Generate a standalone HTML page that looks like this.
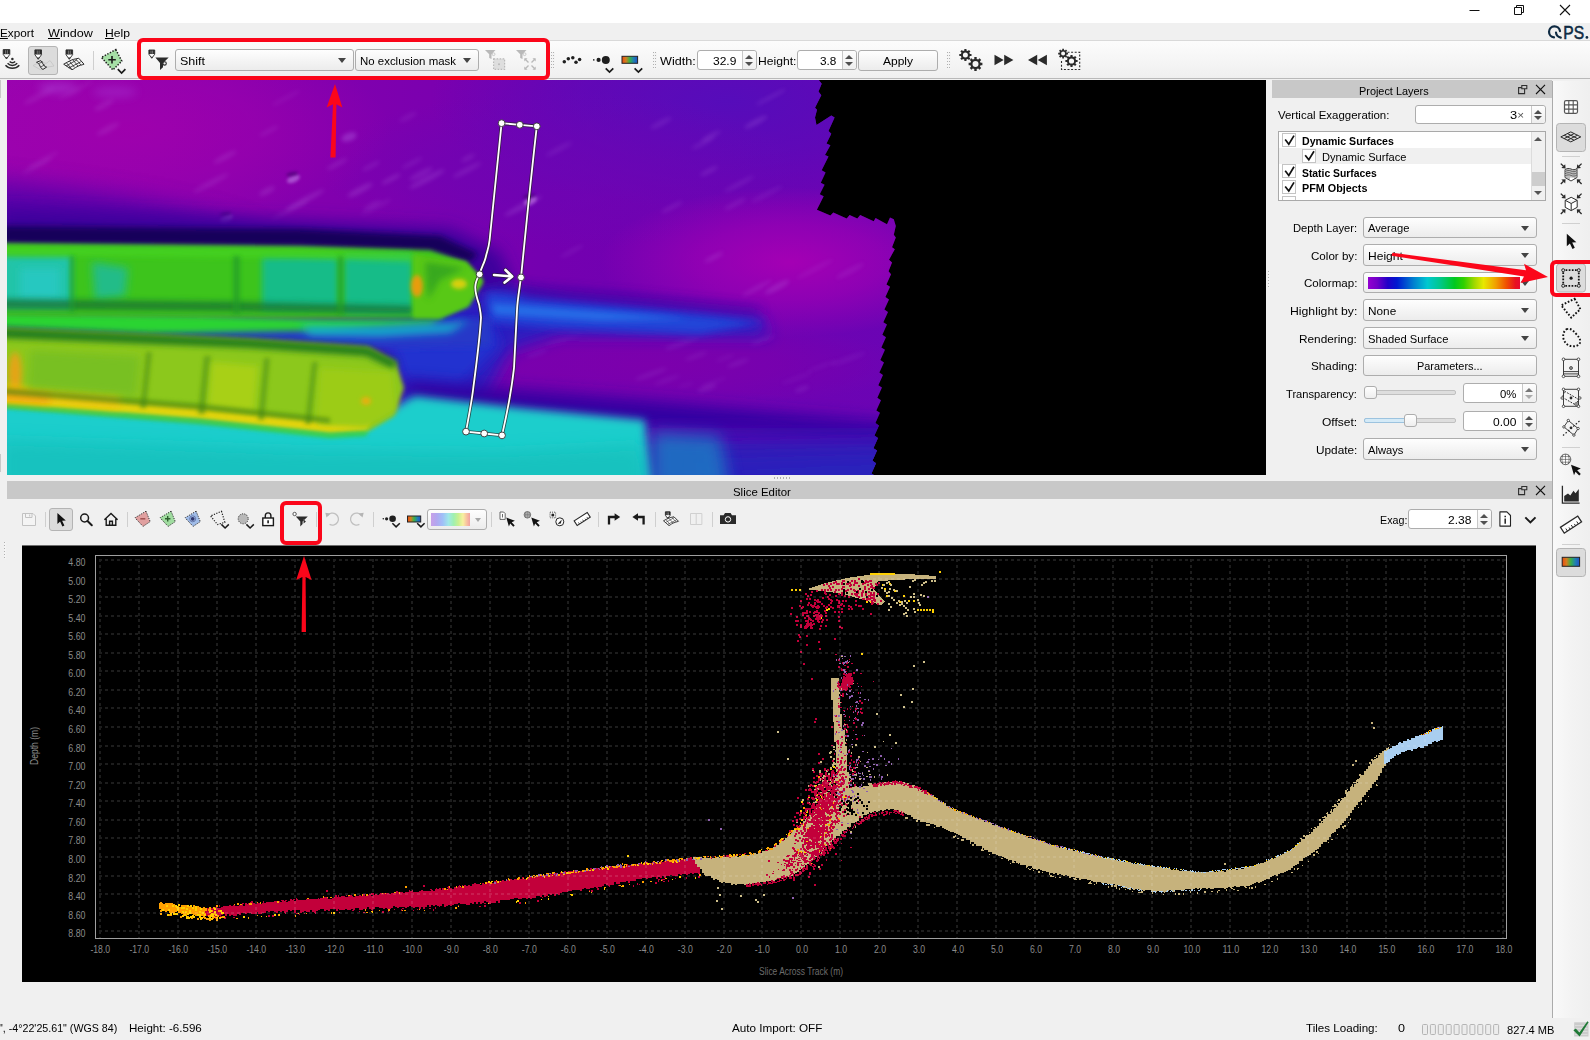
<!DOCTYPE html>
<html><head><meta charset="utf-8"><title>Slice Editor</title>
<style>
*{box-sizing:border-box;margin:0;padding:0}
html,body{width:1590px;height:1040px;overflow:hidden;background:#f0f0f0;font-family:"Liberation Sans",sans-serif;font-size:12px;color:#000;position:relative}
.a{position:absolute}
.t{position:absolute;white-space:nowrap;line-height:14px;height:14px;font-size:11px;color:#000}
.r{text-align:right}
.b{font-weight:bold}
.combo{position:absolute;border:1px solid #adadad;border-radius:3px;background:linear-gradient(#fefefe,#f3f3f3 60%,#ececec);}
.combo .t{left:5px}
.combo:after{content:"";position:absolute;right:7px;top:50%;margin-top:-2px;border-left:4px solid transparent;border-right:4px solid transparent;border-top:5px solid #444}
.spin{position:absolute;border:1px solid #adadad;border-radius:3px;background:#fff}
.spin .dv{position:absolute;top:0;bottom:0;right:13px;width:1px;background:#c8c8c8}
.spin .bg{position:absolute;top:0;bottom:0;right:0;width:13px;background:linear-gradient(#fdfdfd,#eee);border-radius:0 3px 3px 0}
.spin .up{position:absolute;right:3px;top:4px;border-left:4px solid transparent;border-right:4px solid transparent;border-bottom:4px solid #505050}
.spin .dn{position:absolute;right:3px;bottom:3px;border-left:4px solid transparent;border-right:4px solid transparent;border-top:4px solid #505050}
.btn{position:absolute;border:1px solid #adadad;border-radius:3px;background:linear-gradient(#fefefe,#f3f3f3 60%,#ececec);text-align:center}
.sep{position:absolute;width:1px;background:#cfcfcf}
.hsep{position:absolute;height:1px;background:#cfcfcf}
.pressed{position:absolute;border:1px solid #b4b4b4;border-radius:3px;background:#dcdcdc}
.hdl{position:absolute;width:4px;background-image:repeating-linear-gradient(90deg,transparent 0 1px,#f4f4f4 1px 2px),repeating-linear-gradient(180deg,#b0b0b0 0 1px,#f4f4f4 1px 3px)}
.cb{position:absolute;width:13px;height:13px;border:1px solid #c4c4c4;background:#fff}
.dock{position:absolute;background:#c8c8c8;height:17px}
.redbox{position:absolute;border:4px solid #fb061a;border-radius:6px}
svg{position:absolute;overflow:visible}
.combo.dis:after{border-top-color:#a8a8a8;border-left-width:3.5px;border-right-width:3.5px;border-top-width:4px;right:5px}
</style></head><body>
<!-- title bar -->
<div class="a" style="left:0;top:0;width:1590px;height:23px;background:#fff"></div>
<svg style="left:1460px;top:0" width="130" height="23" viewBox="1460 0 130 23">
<path d="M1469.5 10.5h10" stroke="#111" stroke-width="1" fill="none"/>
<path d="M1514.500 7.500h7v7h-7zM1516.500 7.500v-2h7v7h-2" stroke="#111" stroke-width="1" fill="none"/>
<path d="M1560 5l10 10M1570 5l-10 10" stroke="#111" stroke-width="1.1" fill="none"/>
</svg>
<!-- menu bar -->
<div class="a" style="left:0;top:23px;width:1590px;height:17px;background:#f0f0f0"></div>
<!-- QPS logo -->
<svg style="left:1545px;top:23px" width="45" height="17" viewBox="1545 23 45 17">
<g fill="none" stroke="#0e2a42" stroke-width="2.200" stroke-linecap="round">
<path d="M1560 31.200A5.500 5.500 0 1 0 1554 37.300"/>
<path d="M1556 32.500Q1556.400 36.600 1560.800 37.600"/>
</g>
<text x="1563.300" y="38.600" font-family="Liberation Sans, sans-serif" font-size="18.200" fill="#0e2a42" stroke="#0e2a42" stroke-width="0.550" textLength="20.800" lengthAdjust="spacingAndGlyphs">PS</text>
<circle cx="1586.900" cy="37.400" r="1.350" fill="#0e2a42"/>
</svg>
<!-- main toolbar -->
<div class="a" style="left:0;top:40px;width:1590px;height:39px;background:linear-gradient(#fcfcfc,#f6f6f6 50%,#efefef);border-top:1px solid #d9d9d9;border-bottom:1px solid #b9b9b9"></div>
<div class="a" style="left:0;top:79px;width:1590px;height:2px;background:#f0f0f0"></div>
<!-- 3D view -->
<div class="a" style="left:7px;top:80px;width:1259px;height:395px;background:#000"></div>
<svg style="left:7px;top:80px;overflow:hidden" width="1259" height="395" viewBox="7 80 1259 395">
<defs>
<filter id="b1" x="-100%" y="-200%" width="300%" height="500%"><feGaussianBlur stdDeviation="1"/></filter>
<filter id="b1_5" x="-100%" y="-200%" width="300%" height="500%"><feGaussianBlur stdDeviation="1.5"/></filter>
<filter id="b2" x="-100%" y="-200%" width="300%" height="500%"><feGaussianBlur stdDeviation="2"/></filter>
<filter id="b3" x="-100%" y="-200%" width="300%" height="500%"><feGaussianBlur stdDeviation="3"/></filter>
<filter id="b4" x="-100%" y="-200%" width="300%" height="500%"><feGaussianBlur stdDeviation="4"/></filter>
<filter id="b6" x="-100%" y="-200%" width="300%" height="500%"><feGaussianBlur stdDeviation="6"/></filter>
<filter id="b8" x="-100%" y="-200%" width="300%" height="500%"><feGaussianBlur stdDeviation="8"/></filter>
<filter id="b12" x="-100%" y="-200%" width="300%" height="500%"><feGaussianBlur stdDeviation="12"/></filter>
<filter id="b18" x="-100%" y="-200%" width="300%" height="500%"><feGaussianBlur stdDeviation="18"/></filter>
<filter id="b28" x="-100%" y="-200%" width="300%" height="500%"><feGaussianBlur stdDeviation="28"/></filter>
<clipPath id="tc"><path d="M7 80 L818.8 80.0 L821.7 83.8 L818.5 91.5 L821.3 95.3 L815.0 107.8 L817.0 109.7 L815.0 117.4 L816.5 125.1 L831.3 115.5 L834.6 117.4 L828.5 130.9 L831.3 133.8 L826.5 143.4 L830.4 145.3 L825.0 154.9 L828.5 156.5 L821.7 170.3 L825.6 172.6 L820.8 182.8 L824.6 184.7 L819.8 194.3 L823.7 196.3 L816.9 209.7 L830.4 215.5 L833.3 212.6 L846.7 218.4 L849.6 215.1 L857.3 218.4 L860.2 215.1 L873.7 221.3 L875.6 218.0 L887.0 224.2 L890.0 217.4 L893.8 219.3 L895.8 226.0 L893.8 234.7 L895.8 237.6 L892.0 247.2 L894.8 249.2 L889.0 259.7 L892.0 262.6 L888.5 271.3 L891.0 274.2 L886.4 284.4 L890.0 286.8 L885.4 297.0 L889.0 299.4 L884.4 309.6 L888.0 312.0 L883.4 322.2 L887.0 324.6 L882.4 334.8 L886.0 337.2 L881.4 347.4 L885.0 349.8 L880.4 360.0 L884.0 362.4 L879.4 372.6 L883.0 375.0 L878.4 385.2 L882.0 387.6 L877.4 397.8 L881.0 400.2 L876.4 410.4 L880.0 412.8 L875.4 423.0 L879.0 425.4 L874.4 435.6 L878.0 438.0 L873.4 448.2 L877.0 450.6 L872.4 460.8 L876.0 463.2 L871.4 473.4 L875.0 475.8 L872.0 476.0 L7 476Z"/></clipPath>
<linearGradient id="bg" x1="0" y1="0" x2="1" y2="0"><stop offset="0" stop-color="#9604b0"/><stop offset="0.35" stop-color="#8200ae"/><stop offset="0.6" stop-color="#7400b0"/><stop offset="1" stop-color="#6a04b4"/></linearGradient>
</defs>
<g clip-path="url(#tc)">
<rect x="0" y="70" width="910" height="420" fill="url(#bg)"/>
<radialGradient id="g1"><stop offset="0" stop-color="#560cba" stop-opacity="1"/><stop offset="0.5" stop-color="#560cba" stop-opacity="0.6"/><stop offset="1" stop-color="#560cba" stop-opacity="0"/></radialGradient>
<radialGradient id="g2"><stop offset="0" stop-color="#6a06b4" stop-opacity="1"/><stop offset="0.5" stop-color="#6a06b4" stop-opacity="0.6"/><stop offset="1" stop-color="#6a06b4" stop-opacity="0"/></radialGradient>
<radialGradient id="g3"><stop offset="0" stop-color="#a400b4" stop-opacity="1"/><stop offset="0.5" stop-color="#a400b4" stop-opacity="0.6"/><stop offset="1" stop-color="#a400b4" stop-opacity="0"/></radialGradient>
<radialGradient id="g4"><stop offset="0" stop-color="#a200ac" stop-opacity="1"/><stop offset="0.5" stop-color="#a200ac" stop-opacity="0.6"/><stop offset="1" stop-color="#a200ac" stop-opacity="0"/></radialGradient>
<radialGradient id="g5"><stop offset="0" stop-color="#7c00ac" stop-opacity="1"/><stop offset="0.5" stop-color="#7c00ac" stop-opacity="0.6"/><stop offset="1" stop-color="#7c00ac" stop-opacity="0"/></radialGradient>
<ellipse cx="730" cy="100" rx="300" ry="110" fill="url(#g1)"/>
<ellipse cx="560" cy="170" rx="240" ry="80" fill="url(#g2)" opacity="0.7"/>
<ellipse cx="790" cy="262" rx="190" ry="75" fill="url(#g3)"/>
<ellipse cx="130" cy="130" rx="260" ry="100" fill="url(#g4)" opacity="0.8"/>
<ellipse cx="650" cy="365" rx="260" ry="45" fill="url(#g5)"/>
<ellipse cx="225" cy="157" rx="13" ry="2.5" fill="#c080e8" opacity="0.18" transform="rotate(-28 225 157)" filter="url(#b2)"/>
<ellipse cx="76" cy="90" rx="20" ry="1.9" fill="#c080e8" opacity="0.13" transform="rotate(-28 76 90)" filter="url(#b2)"/>
<ellipse cx="739" cy="184" rx="17" ry="1.8" fill="#c080e8" opacity="0.18" transform="rotate(-28 739 184)" filter="url(#b2)"/>
<ellipse cx="767" cy="194" rx="18" ry="2.6" fill="#c080e8" opacity="0.11" transform="rotate(-28 767 194)" filter="url(#b2)"/>
<ellipse cx="672" cy="207" rx="12" ry="1.6" fill="#c080e8" opacity="0.20" transform="rotate(-28 672 207)" filter="url(#b2)"/>
<ellipse cx="427" cy="179" rx="20" ry="2.7" fill="#c080e8" opacity="0.21" transform="rotate(-28 427 179)" filter="url(#b2)"/>
<ellipse cx="360" cy="190" rx="14" ry="3.1" fill="#c080e8" opacity="0.21" transform="rotate(-28 360 190)" filter="url(#b2)"/>
<ellipse cx="104" cy="105" rx="11" ry="3.1" fill="#c080e8" opacity="0.15" transform="rotate(-28 104 105)" filter="url(#b2)"/>
<ellipse cx="559" cy="149" rx="15" ry="2.2" fill="#c080e8" opacity="0.14" transform="rotate(-28 559 149)" filter="url(#b2)"/>
<ellipse cx="523" cy="206" rx="21" ry="2.7" fill="#c080e8" opacity="0.21" transform="rotate(-28 523 206)" filter="url(#b2)"/>
<ellipse cx="757" cy="288" rx="17" ry="1.8" fill="#c080e8" opacity="0.20" transform="rotate(-28 757 288)" filter="url(#b2)"/>
<ellipse cx="850" cy="271" rx="16" ry="2.7" fill="#c080e8" opacity="0.13" transform="rotate(-28 850 271)" filter="url(#b2)"/>
<ellipse cx="735" cy="204" rx="12" ry="1.6" fill="#c080e8" opacity="0.20" transform="rotate(-28 735 204)" filter="url(#b2)"/>
<ellipse cx="709" cy="171" rx="10" ry="2.0" fill="#c080e8" opacity="0.19" transform="rotate(-28 709 171)" filter="url(#b2)"/>
<ellipse cx="771" cy="97" rx="17" ry="1.6" fill="#c080e8" opacity="0.19" transform="rotate(-28 771 97)" filter="url(#b2)"/>
<ellipse cx="305" cy="200" rx="22" ry="2.4" fill="#c080e8" opacity="0.22" transform="rotate(-28 305 200)" filter="url(#b2)"/>
<ellipse cx="286" cy="98" rx="16" ry="1.6" fill="#c080e8" opacity="0.12" transform="rotate(-28 286 98)" filter="url(#b2)"/>
<ellipse cx="371" cy="166" rx="10" ry="1.6" fill="#c080e8" opacity="0.20" transform="rotate(-28 371 166)" filter="url(#b2)"/>
<ellipse cx="290" cy="210" rx="21" ry="2.1" fill="#c080e8" opacity="0.16" transform="rotate(-28 290 210)" filter="url(#b2)"/>
<ellipse cx="467" cy="170" rx="16" ry="2.5" fill="#c080e8" opacity="0.17" transform="rotate(-28 467 170)" filter="url(#b2)"/>
<ellipse cx="391" cy="179" rx="11" ry="2.0" fill="#c080e8" opacity="0.22" transform="rotate(-28 391 179)" filter="url(#b2)"/>
<ellipse cx="468" cy="158" rx="8" ry="2.2" fill="#c080e8" opacity="0.17" transform="rotate(-28 468 158)" filter="url(#b2)"/>
<ellipse cx="37" cy="166" rx="17" ry="1.6" fill="#c080e8" opacity="0.18" transform="rotate(-28 37 166)" filter="url(#b2)"/>
<ellipse cx="421" cy="174" rx="13" ry="2.7" fill="#c080e8" opacity="0.19" transform="rotate(-28 421 174)" filter="url(#b2)"/>
<ellipse cx="39" cy="96" rx="17" ry="3.1" fill="#c080e8" opacity="0.13" transform="rotate(-28 39 96)" filter="url(#b2)"/>
<ellipse cx="412" cy="163" rx="12" ry="2.1" fill="#c080e8" opacity="0.14" transform="rotate(-28 412 163)" filter="url(#b2)"/>
<ellipse cx="337" cy="164" rx="12" ry="2.1" fill="#c080e8" opacity="0.19" transform="rotate(-28 337 164)" filter="url(#b2)"/>
<ellipse cx="43" cy="160" rx="18" ry="2.0" fill="#c080e8" opacity="0.13" transform="rotate(-28 43 160)" filter="url(#b2)"/>
<ellipse cx="711" cy="136" rx="11" ry="2.2" fill="#c080e8" opacity="0.18" transform="rotate(-28 711 136)" filter="url(#b2)"/>
<ellipse cx="108" cy="129" rx="13" ry="2.9" fill="#c080e8" opacity="0.15" transform="rotate(-28 108 129)" filter="url(#b2)"/>
<ellipse cx="756" cy="122" rx="13" ry="2.6" fill="#c080e8" opacity="0.21" transform="rotate(-28 756 122)" filter="url(#b2)"/>
<ellipse cx="408" cy="117" rx="10" ry="2.4" fill="#c080e8" opacity="0.12" transform="rotate(-28 408 117)" filter="url(#b2)"/>
<ellipse cx="714" cy="257" rx="11" ry="2.0" fill="#c080e8" opacity="0.20" transform="rotate(-28 714 257)" filter="url(#b2)"/>
<ellipse cx="572" cy="251" rx="13" ry="1.7" fill="#c080e8" opacity="0.14" transform="rotate(-28 572 251)" filter="url(#b2)"/>
<ellipse cx="703" cy="143" rx="13" ry="2.2" fill="#c080e8" opacity="0.15" transform="rotate(-28 703 143)" filter="url(#b2)"/>
<ellipse cx="372" cy="205" rx="10" ry="1.5" fill="#c080e8" opacity="0.21" transform="rotate(-28 372 205)" filter="url(#b2)"/>
<ellipse cx="777" cy="287" rx="14" ry="3.1" fill="#c080e8" opacity="0.21" transform="rotate(-28 777 287)" filter="url(#b2)"/>
<ellipse cx="211" cy="183" rx="20" ry="2.6" fill="#c080e8" opacity="0.16" transform="rotate(-28 211 183)" filter="url(#b2)"/>
<ellipse cx="269" cy="131" rx="11" ry="1.6" fill="#c080e8" opacity="0.17" transform="rotate(-28 269 131)" filter="url(#b2)"/>
<ellipse cx="267" cy="191" rx="9" ry="3.0" fill="#c080e8" opacity="0.18" transform="rotate(-28 267 191)" filter="url(#b2)"/>
<ellipse cx="815" cy="269" rx="21" ry="2.5" fill="#c080e8" opacity="0.10" transform="rotate(-28 815 269)" filter="url(#b2)"/>
<ellipse cx="661" cy="123" rx="12" ry="2.6" fill="#c080e8" opacity="0.16" transform="rotate(-28 661 123)" filter="url(#b2)"/>
<ellipse cx="376" cy="207" rx="17" ry="2.1" fill="#c080e8" opacity="0.13" transform="rotate(-28 376 207)" filter="url(#b2)"/>
<ellipse cx="822" cy="366" rx="17" ry="2.0" fill="#b070e0" opacity="0.10" transform="rotate(-20 822 366)" filter="url(#b2)"/>
<ellipse cx="707" cy="388" rx="10" ry="2.7" fill="#b070e0" opacity="0.17" transform="rotate(-20 707 388)" filter="url(#b2)"/>
<ellipse cx="802" cy="389" rx="8" ry="2.4" fill="#b070e0" opacity="0.17" transform="rotate(-20 802 389)" filter="url(#b2)"/>
<ellipse cx="537" cy="353" rx="11" ry="2.3" fill="#b070e0" opacity="0.12" transform="rotate(-20 537 353)" filter="url(#b2)"/>
<ellipse cx="686" cy="385" rx="8" ry="1.6" fill="#b070e0" opacity="0.09" transform="rotate(-20 686 385)" filter="url(#b2)"/>
<ellipse cx="564" cy="339" rx="20" ry="2.8" fill="#b070e0" opacity="0.09" transform="rotate(-20 564 339)" filter="url(#b2)"/>
<ellipse cx="696" cy="356" rx="12" ry="2.0" fill="#b070e0" opacity="0.14" transform="rotate(-20 696 356)" filter="url(#b2)"/>
<ellipse cx="725" cy="358" rx="10" ry="2.0" fill="#b070e0" opacity="0.09" transform="rotate(-20 725 358)" filter="url(#b2)"/>
<ellipse cx="714" cy="382" rx="13" ry="1.6" fill="#b070e0" opacity="0.10" transform="rotate(-20 714 382)" filter="url(#b2)"/>
<ellipse cx="651" cy="374" rx="17" ry="2.1" fill="#b070e0" opacity="0.16" transform="rotate(-20 651 374)" filter="url(#b2)"/>
<ellipse cx="738" cy="363" rx="12" ry="2.2" fill="#b070e0" opacity="0.15" transform="rotate(-20 738 363)" filter="url(#b2)"/>
<ellipse cx="667" cy="380" rx="14" ry="1.9" fill="#b070e0" opacity="0.13" transform="rotate(-20 667 380)" filter="url(#b2)"/>
<ellipse cx="763" cy="340" rx="13" ry="2.1" fill="#b070e0" opacity="0.17" transform="rotate(-20 763 340)" filter="url(#b2)"/>
<ellipse cx="848" cy="359" rx="19" ry="2.7" fill="#b070e0" opacity="0.11" transform="rotate(-20 848 359)" filter="url(#b2)"/>
<ellipse cx="682" cy="343" rx="18" ry="2.5" fill="#b070e0" opacity="0.17" transform="rotate(-20 682 343)" filter="url(#b2)"/>
<ellipse cx="797" cy="378" rx="17" ry="2.3" fill="#b070e0" opacity="0.09" transform="rotate(-20 797 378)" filter="url(#b2)"/>
<ellipse cx="349" cy="137" rx="8" ry="4" fill="#a850d8" opacity="0.5" transform="rotate(-20 349 137)" filter="url(#b2)"/>
<ellipse cx="293" cy="179" rx="7" ry="3.500" fill="#b468dc" opacity="0.75" transform="rotate(-25 293 178)" filter="url(#b1_5)"/>
<ellipse cx="293" cy="174" rx="6" ry="2" fill="#3a0068" opacity="0.6" transform="rotate(-10 293 178)" filter="url(#b1_5)"/>
<ellipse cx="226" cy="219" rx="7" ry="3.500" fill="#b468dc" opacity="0.75" transform="rotate(-25 226 218)" filter="url(#b1_5)"/>
<ellipse cx="226" cy="214" rx="6" ry="2" fill="#3a0068" opacity="0.6" transform="rotate(-10 226 218)" filter="url(#b1_5)"/>
<ellipse cx="530" cy="201" rx="7" ry="3.500" fill="#b468dc" opacity="0.75" transform="rotate(-25 530 200)" filter="url(#b1_5)"/>
<ellipse cx="530" cy="196" rx="6" ry="2" fill="#3a0068" opacity="0.6" transform="rotate(-10 530 200)" filter="url(#b1_5)"/>
<ellipse cx="60" cy="218" rx="210" ry="30" fill="#4c00a8" opacity="0.8" transform="rotate(7 60 218)" filter="url(#b12)"/>
<ellipse cx="58" cy="88" rx="20" ry="5" fill="#b050e0" opacity="0.45" filter="url(#b4)"/>
<ellipse cx="115" cy="92" rx="22" ry="6" fill="#a840d8" opacity="0.35" filter="url(#b4)"/>
<path d="M0 208 L200 216 L300 220 L450 228 L500 252 L520 300 L430 300 L0 300Z" fill="#3c009c" filter="url(#b8)"/>
<path d="M0 226 L300 229 L440 236 L478 254 L470 262 L430 252 L300 246 L0 244Z" fill="#12005a" filter="url(#b3)"/>
<path d="M380 318 L500 288 L560 298 L760 316 L770 336 L560 334 L510 350 L480 405 L400 415 L394 372 L372 350 L350 340 L350 326Z" fill="#2a1cc0" filter="url(#b8)"/>
<path d="M385 332 L490 322 L500 345 L460 385 L405 382 L398 360Z" fill="#2430d0" filter="url(#b6)"/>
<path d="M486 292 L560 300 L700 314 L765 322 L700 334 L560 328 L488 322Z" fill="#2044d8" filter="url(#b4)"/>
<path d="M520 286 L640 296 L760 308 L760 314 L640 304 L520 296Z" fill="#3a04a0" filter="url(#b6)" opacity="0.8"/>
<path d="M492 304 L600 312 L690 319 L600 320 L495 314Z" fill="#2870e8" filter="url(#b3)"/>
<path d="M400 380 L640 400 L900 425 L900 440 L640 428 L420 412Z" fill="#3006a0" filter="url(#b8)"/>
<path d="M640 436 L900 436 L900 490 L640 490Z" fill="#3014b4" filter="url(#b12)"/>
<path d="M700 455 L900 450 L900 490 L700 490Z" fill="#2c20bc" filter="url(#b12)"/>
<path d="M0 400 L200 417 L340 428 L390 410 L415 396 L520 408 L645 420 L652 490 L0 490Z" fill="#1ccecc" filter="url(#b4)"/>
<path d="M0 440 L300 450 L500 452 L640 445 L650 490 L0 490Z" fill="#14c0bc" filter="url(#b8)" opacity="0.8"/>
<path d="M652 432 L720 436 L730 490 L652 490Z" fill="#1c78c4" filter="url(#b8)" opacity="0.85"/>
<path d="M0 314 L300 318 L440 320 L490 318 L490 346 L380 348 L250 342 L0 332Z" fill="#2838c8" filter="url(#b3)"/>
<path d="M0 312 L200 315 L320 319 L430 320 L445 317 L430 325 L330 330 L150 334 L0 328Z" fill="#2cd430" filter="url(#b3)"/>
<path d="M300 326 L380 327 L450 324 L470 320 L450 332 L380 336 L310 335Z" fill="#18bccc" filter="url(#b4)"/>
<path d="M0 243 L300 246 L430 250 L466 262 L483 281 L468 306 L440 318 L300 318 L0 316Z" fill="#3cc41c" filter="url(#b2)"/>
<rect x="0" y="256" width="72" height="52" fill="#20c4a8" filter="url(#b3)"/>
<rect x="20" y="268" width="40" height="32" fill="#28c8c0" filter="url(#b4)"/>
<path d="M92 262 L128 268 L125 296 L95 300Z" fill="#20bc88" filter="url(#b4)"/>
<rect x="262" y="257" width="76" height="52" fill="#18bc88" filter="url(#b3)"/>
<rect x="344" y="255" width="68" height="58" fill="#18bc88" filter="url(#b3)"/>
<path d="M0 299 L72 300 L235 302 L413 306 L413 314 L235 311 L0 309Z" fill="#147030" filter="url(#b3)" opacity="0.8"/>
<path d="M0 247 L300 250 L413 254 L413 261 L300 257 L0 254Z" fill="#48d824" filter="url(#b3)" opacity="0.8"/>
<path d="M70 256 L74 256 L74 312 L70 312Z M233 256 L240 256 L240 314 L233 314Z M338 256 L343 256 L343 314 L338 314Z" fill="#249c2c" filter="url(#b2)" opacity="0.7"/>
<path d="M413 254 L466 262 L483 281 L468 306 L440 318 L413 318Z" fill="#58c818" filter="url(#b2)"/>
<ellipse cx="417" cy="286" rx="6" ry="11" fill="#e89c10" filter="url(#b2)"/>
<ellipse cx="459" cy="284" rx="8" ry="5" fill="#d8d010" filter="url(#b2)"/>
<path d="M425 262 L465 268 L440 280 L428 300 Z" fill="#2c9c20" filter="url(#b3)" opacity="0.7"/>
<path d="M0 328 L250 339 L368 347 L396 362 L404 388 L394 416 L368 431 L330 433 L200 419 L0 404Z" fill="#8cc81c" filter="url(#b2)"/>
<path d="M0 328 L250 339 L368 347 L398 362 L393 369 L366 356 L250 348 L0 338Z" fill="#207a1c" filter="url(#b3)"/>
<path d="M0 392 L200 408 L330 423 L370 420 L366 431 L330 434 L200 420 L0 405Z" fill="#e4d408" filter="url(#b2)"/>
<path d="M0 403 L200 419 L330 433 L368 431 L366 436 L330 438 L200 424 L0 408Z" fill="#30d048" filter="url(#b2)"/>
<ellipse cx="15" cy="374" rx="7" ry="22" fill="#e4a418" filter="url(#b3)"/>
<path d="M0 386 L120 396 L120 408 L0 400Z" fill="#f0c410" filter="url(#b4)"/>
<path d="M0 390 L50 394 L50 403 L0 400Z" fill="#f0a010" filter="url(#b4)"/>
<path d="M146 352 L152 352 L146 408 L140 408Z M204 356 L211 356 L205 414 L198 414Z M264 358 L270 358 L264 420 L258 420Z M312 362 L318 362 L311 424 L305 424Z" fill="#5c9c14" filter="url(#b2)" opacity="0.75"/>
<path d="M30 350 L140 356 L136 396 L28 388Z" fill="#78c020" filter="url(#b4)"/>
<path d="M212 362 L258 366 L254 412 L208 408Z" fill="#a8d018" filter="url(#b3)"/>
<path d="M320 368 L392 372 L396 410 L366 428 L316 424Z" fill="#9ccc18" filter="url(#b3)"/>
<ellipse cx="366" cy="401" rx="5" ry="4" fill="#e8b010" filter="url(#b2)"/>
<path d="M0 388 L200 404 L330 418 L330 423 L200 410 L0 394Z" fill="#3c7c10" filter="url(#b2)" opacity="0.6"/>
</g>
<!--POLY-->
</svg>
<!-- main toolbar widgets -->
<div class="pressed" style="left:28px;top:46px;width:30px;height:29px"></div>
<div class="sep" style="left:93px;top:51px;height:19px"></div>
<div class="combo" style="left:175px;top:49px;width:179px;height:22px"></div>
<div class="combo" style="left:355px;top:49px;width:124px;height:22px"></div>
<div class="hdl" style="left:551px;top:52px;height:17px"></div>
<div class="hdl" style="left:653px;top:52px;height:17px"></div>
<div class="spin" style="left:697px;top:50px;width:60px;height:20px"><div class="bg"></div><div class="dv"></div><div class="up"></div><div class="dn"></div></div>
<div class="spin" style="left:797px;top:50px;width:60px;height:20px"><div class="bg"></div><div class="dv"></div><div class="up"></div><div class="dn"></div></div>
<div class="btn" style="left:858px;top:50px;width:80px;height:21px"></div>
<div class="hdl" style="left:947px;top:52px;height:17px"></div>
<!-- Project Layers panel -->
<div class="dock" style="left:1272px;top:80px;width:280px;height:18px"></div>
<svg style="left:1515px;top:81px" width="35" height="17" viewBox="1515 81 35 17">
<path d="M1518.600 87.600h6v6h-6z" stroke="#2e2e2e" fill="none" stroke-width="1.100"/><path d="M1521.800 85.500h5v3.200h-5z" stroke="#2e2e2e" fill="#c8c8c8" stroke-width="1.100"/>
<path d="M1536 84.800l9 9.200M1545 84.800l-9 9.200" stroke="#111" fill="none" stroke-width="1.100"/>
</svg>
<div class="spin" style="left:1415px;top:105px;width:131px;height:19px"><div class="bg"></div><div class="dv"></div><div class="up"></div><div class="dn"></div></div>
<div class="a" style="left:1278px;top:131px;width:268px;height:70px;border:1px solid #a9a9a9;background:#fff;overflow:hidden">
  <div class="a" style="left:0;top:16px;width:252px;height:16px;background:#f0f0f0"></div>
  <div class="a" style="left:252px;top:0;width:14px;height:68px;background:#f0f0f0;border-left:1px solid #dcdcdc"></div>
  <div class="a" style="left:253px;top:40px;width:13px;height:14px;background:#cdcdcd"></div>
  <div class="a" style="left:255px;top:5px;border-left:4px solid transparent;border-right:4px solid transparent;border-bottom:4px solid #555"></div>
  <div class="a" style="left:255px;top:59px;border-left:4px solid transparent;border-right:4px solid transparent;border-top:4px solid #555"></div>
  <div class="cb" style="left:3px;top:1px;width:14px;height:14px"></div>
  <div class="cb" style="left:23px;top:17px;width:14px;height:14px"></div>
  <div class="cb" style="left:3px;top:32px;width:14px;height:14px"></div>
  <div class="cb" style="left:3px;top:48px;width:14px;height:14px"></div>
  <div class="cb" style="left:3px;top:64px;width:14px;height:14px"></div>
  <svg style="left:0;top:0" width="60" height="70" viewBox="0 0 60 70" fill="none" stroke="#111" stroke-width="1.700">
   <path d="M6.200 7.600L9.800 12.200L15 3.600"/><path d="M26.200 23.200L29.800 27.800L35 19.200"/><path d="M6.200 38.800L9.800 43.400L15 34.800"/><path d="M6.200 54.400L9.800 59L15 50.400"/>
  </svg>
</div>
<div class="combo" style="left:1363px;top:217px;width:174px;height:21px"></div>
<div class="combo" style="left:1363px;top:244px;width:174px;height:22px"></div>
<div class="combo" style="left:1363px;top:272px;width:174px;height:21px"><div class="a" style="left:4px;top:4px;width:152px;height:12px;background:linear-gradient(90deg,#9400d0 0%,#7000c8 6%,#2000c8 13%,#0018d0 19%,#0080d0 30%,#00c8d0 39%,#00c890 47%,#00c820 57%,#30d000 63%,#a0d800 70%,#e8e800 76%,#f0a000 84%,#f05000 91%,#e81020 97%,#e80830 100%)"></div></div>
<div class="combo" style="left:1363px;top:299px;width:174px;height:22px"></div>
<div class="combo" style="left:1363px;top:327px;width:174px;height:22px"></div>
<div class="btn" style="left:1363px;top:355px;width:174px;height:21px"></div>
<!-- sliders -->
<div class="a" style="left:1364px;top:390px;width:92px;height:5px;border:1px solid #c0c0c0;border-radius:2px;background:#dedede"></div>
<div class="a" style="left:1364px;top:386px;width:13px;height:13px;border:1px solid #adadad;border-radius:3px;background:linear-gradient(#fff,#eee)"></div>
<div class="spin" style="left:1463px;top:383px;width:74px;height:20px"><div class="bg"></div><div class="dv"></div><div class="up" style="border-bottom-color:#777"></div><div class="dn" style="border-top-color:#aaa"></div></div>
<div class="a" style="left:1364px;top:418px;width:92px;height:5px;border:1px solid #c0c0c0;border-radius:2px;background:#dedede"></div>
<div class="a" style="left:1364px;top:418px;width:46px;height:5px;border:1px solid #9cc3df;border-radius:2px;background:#d4eaf7"></div>
<div class="a" style="left:1404px;top:414px;width:13px;height:13px;border:1px solid #adadad;border-radius:3px;background:linear-gradient(#fff,#eee)"></div>
<div class="spin" style="left:1463px;top:411px;width:74px;height:20px"><div class="bg"></div><div class="dv"></div><div class="up"></div><div class="dn"></div></div>
<div class="combo" style="left:1363px;top:438px;width:174px;height:22px"></div>
<!-- splitter handles -->
<div class="hdl" style="left:1268px;top:271px;height:17px;width:2px"></div>
<div class="a" style="left:773px;top:477px;width:17px;height:2px;background-image:radial-gradient(circle,#b0b0b0 0.6px,transparent 0.9px);background-size:3px 2px"></div>
<!-- right tool strip -->
<div class="a" style="left:1552px;top:81px;width:1px;height:937px;background:#ababab"></div>
<div class="a" style="left:1553px;top:81px;width:37px;height:937px;background:linear-gradient(90deg,#f9f9f9,#f3f3f3 50%,#efefef)"></div>
<!-- Slice editor dock -->
<div class="dock" style="left:7px;top:481px;width:1545px;height:18px"></div>
<svg style="left:1515px;top:481px" width="35" height="18" viewBox="1515 481 35 18">
<path d="M1518.600 488.600h6v6h-6z" stroke="#2e2e2e" fill="none" stroke-width="1.100"/><path d="M1521.800 486.500h5v3.200h-5z" stroke="#2e2e2e" fill="#c8c8c8" stroke-width="1.100"/>
<path d="M1536 485.800l9 9.200M1545 485.800l-9 9.200" stroke="#111" fill="none" stroke-width="1.100"/>
</svg>
<div class="pressed" style="left:49px;top:508px;width:24px;height:23px"></div>
<div class="sep" style="left:45px;top:512px;height:15px"></div>
<div class="sep" style="left:127px;top:512px;height:15px"></div>
<div class="sep" style="left:316px;top:512px;height:15px"></div>
<div class="sep" style="left:373px;top:512px;height:15px"></div>
<div class="sep" style="left:491px;top:512px;height:15px"></div>
<div class="sep" style="left:598px;top:512px;height:15px"></div>
<div class="sep" style="left:655px;top:512px;height:15px"></div>
<div class="sep" style="left:712px;top:512px;height:15px"></div>
<div class="combo dis" style="left:427px;top:509px;width:60px;height:21px"><div class="a" style="left:3px;top:3px;width:39px;height:13px;background:linear-gradient(90deg,#c8a0e8 0%,#b0a8f0 15%,#a0c0f8 30%,#a0e8e8 45%,#a0f0b0 58%,#c8f090 70%,#f8f0a0 82%,#f8c0a0 92%,#f0a0a0 100%)"></div></div>
<div class="spin" style="left:1408px;top:509px;width:84px;height:20px"><div class="bg"></div><div class="dv"></div><div class="up"></div><div class="dn"></div></div>
<div class="hdl" style="left:4px;top:542px;height:17px;width:2px"></div>
<div class="a" style="left:0;top:80px;width:1px;height:18px;background:#c8c8c8"></div>
<div class="a" style="left:0;top:454px;width:1px;height:18px;background:#c8c8c8"></div>
<!-- status bar -->
<svg style="left:1420px;top:1022px" width="84" height="14" viewBox="1420 1022 84 14" fill="#ececec" stroke="#b4b4b4" stroke-width="1">
<rect x="1422.500" y="1024.500" width="5" height="10" rx="1"/><rect x="1430.400" y="1024.500" width="5" height="10" rx="1"/><rect x="1438.300" y="1024.500" width="5" height="10" rx="1"/><rect x="1446.200" y="1024.500" width="5" height="10" rx="1"/><rect x="1454.100" y="1024.500" width="5" height="10" rx="1"/><rect x="1462" y="1024.500" width="5" height="10" rx="1"/><rect x="1469.900" y="1024.500" width="5" height="10" rx="1"/><rect x="1477.800" y="1024.500" width="5" height="10" rx="1"/><rect x="1485.700" y="1024.500" width="5" height="10" rx="1"/><rect x="1493.600" y="1024.500" width="5" height="10" rx="1"/>
</svg>
<svg style="left:1572px;top:1020px" width="18" height="18" viewBox="1572 1020 18 18">
<rect x="1574.200" y="1022.300" width="14.300" height="14.200" fill="#cbcbcb"/>
<path d="M1575 1025.500h12.500M1575 1028.500h12.500M1575 1031.500h12.500M1575 1034.500h12.500" stroke="#dcdcdc" stroke-width="1"/>
<path d="M1573.400 1030.200L1575.800 1028.600L1579.400 1032.600L1587.400 1021.200L1588.600 1022.200L1579.600 1036.600Z" fill="#1f7a36"/>
</svg>
<div class="a" style="left:22px;top:545px;width:1514px;height:437px;background:#000;border-top:1px solid #6e6e6e"></div>
<svg style="left:0;top:0" width="1590" height="1040" viewBox="0 0 1590 1040">
<g shape-rendering="crispEdges">
<path d="M159 903H161V905H163V904H165V903H167V903H169V903H171V905H173V904H175V905H177V906H179V907H181V907H183V905H185V905H187V905H189V907H191V907H193V905H195V907H197V906H199V907H201V908H203V907H205V908H207V909H209V910H211V908H213V907H215V907H216V909V917H214V918H213V917H211V918H209V915H207V916H205V918H203V916H201V917H199V915H197V916H195V915H193V914H191V913H189V914H187V915H185V915H183V912H181V913H179V911H177V912H175V914H173V911H171V913H169V910H167V911H165V911H163V910H161V909H159V909H159Z" fill="#ffa000"/>
<path d="M205 909H207V908H209V908H211V908H213V907H215V907H217V908H219V908H221V907H223V906H225V906H227V906H229V905H231V906H233V905H235V906H237V906H239V905H241V905H243V906H245V904H247V904H249V904H251V903H253V903H255V904H257V903H259V903H260V904H262V904H264V903H266V902H268V902H270V902H272V902H274V901H276V901H278V901H280V902H282V901H284V901H286V902H288V901H290V900H292V900H294V901H296V899H298V900H300V900H302V900H304V900H306V899H308V899H310V899H312V899H314V900H316V899H318V899H320V898H322V898H324V897H326V897H328V899H330V899H332V898H334V897H336V897H338V897H340V897H341V897H343V896H345V897H347V897H349V896H351V896H353V897H355V896H357V896H359V895H361V896H363V894H365V896H367V895H369V894H371V896H373V895H375V894H377V895H379V894H381V893H383V893H385V893H387V893H389V894H391V893H393V893H395V893H397V893H399V892H401V892H403V893H405V892H407V892H409V891H411V891H413V892H415V892H417V892H419V891H421V891H423V891H425V891H427V891H429V891H431V890H433V891H435V889H437V889H439V888H441V890H442V888H444V889H446V889H448V888H450V888H452V889H454V887H456V887H458V886H460V887H462V887H464V885H466V886H468V885H470V886H472V884H474V884H476V884H478V884H480V885H482V883H484V884H486V882H488V883H490V882H492V883H494V881H496V881H498V881H500V881H502V880H504V881H506V880H508V879H510V879H512V880H514V879H516V879H518V878H520V879H522V877H524V879H526V878H528V877H530V877H532V877H534V876H536V877H538V876H540V875H542V875H544V875H546V874H548V875H550V874H552V874H554V873H556V873H558V874H560V872H562V872H564V871H566V872H568V871H570V871H572V871H574V870H576V870H578V871H580V871H582V871H584V870H586V871H588V870H590V868H592V870H594V869H596V868H598V868H600V869H602V868H604V868H606V867H608V866H610V866H612V867H614V867H616V866H618V867H620V866H622V866H624V866H626V864H628V865H630V865H632V864H634V864H636V864H638V864H640V863H642V864H644V863H646V862H648V863H650V863H652V862H654V862H656V863H658V863H660V861H662V862H664V861H666V860H668V860H670V860H672V861H674V861H676V861H678V860H680V860H682V859H684V859H686V858H688V858H690V857H692V859H694V859H696V859H698V857H700V858V874H698V873H696V873H694V874H692V873H690V874H688V875H686V874H684V874H682V875H680V874H678V876H676V876H674V876H672V875H670V876H668V876H666V878H664V876H662V878H660V877H658V879H656V877H654V877H652V878H650V878H648V879H646V878H644V878H642V879H640V879H638V879H636V881H634V881H632V881H630V883H628V881H626V882H624V882H622V882H620V884H618V884H616V882H614V885H612V885H610V886H608V885H606V884H604V886H602V887H600V887H598V888H596V887H594V888H592V888H590V889H588V889H586V888H584V889H582V891H580V890H578V890H576V890H574V890H572V891H570V891H568V892H566V892H564V892H562V893H560V895H558V894H556V896H554V894H552V895H550V894H548V896H546V897H544V895H542V897H540V896H538V896H536V898H534V898H532V899H530V898H528V899H526V898H524V898H522V899H520V899H518V898H516V898H514V899H512V899H510V900H508V900H506V900H504V900H502V900H500V903H498V901H496V903H494V903H492V903H490V903H488V902H486V901H484V903H482V904H480V902H478V904H476V902H474V904H472V903H470V905H468V905H466V904H464V904H462V904H460V903H458V904H456V904H454V905H452V906H450V905H448V906H446V907H444V904H442V906H440V907H439V906H437V905H435V906H433V905H431V907H429V905H427V907H425V908H423V907H421V907H419V907H417V907H415V908H413V907H411V906H409V907H407V908H405V907H403V907H401V907H399V908H397V907H395V906H393V908H391V909H389V909H387V908H385V909H383V908H381V908H379V907H377V907H375V909H373V910H371V909H369V907H367V909H365V909H363V910H361V910H359V908H357V908H355V910H353V909H351V910H349V910H347V909H345V910H343V910H341V910H339V909H338V911H336V909H334V909H332V909H330V911H328V910H326V911H324V909H322V909H320V910H318V911H316V911H314V912H312V910H310V912H308V912H306V911H304V912H302V913H300V910H298V910H296V913H294V910H292V911H290V910H288V912H286V913H284V911H282V912H280V911H278V913H276V912H274V911H272V911H270V912H268V911H266V913H264V913H262V914H260V914H258V912H257V914H255V914H253V914H251V913H249V913H247V914H245V913H243V913H241V915H239V914H237V916H235V916H233V915H231V916H229V914H227V916H225V914H223V915H221V916H219V915H217V917H215V916H213V916H211V917H209V916H207V916H205V915H205Z" fill="#c2003a"/>
<path d="M693 857H695V857H697V857H699V857H700V857H702V858H704V857H706V858H707V858H709V858H711V858H713V858H715V858H717V857H719V858H721V857H723V857H725V857H727V857H729V857H731V856H733V856H735V856H737V857H739V856H741V855H743V855H745V855H746V855H748V855H750V854H752V854H754V853H756V854H758V853H760V853H762V851H764V851H766V851H768V850H770V848H771V849H773V847H775V845H777V845H779V843H781V841H783V840H785V838H787V836H789V834H791V832H793V830H795V829H797V826H799V825H801V823H803V821H805V819H807V817H809V814H811V813H813V811H815V808H817V807H819V804H821V803H822V802H824V801H826V799H828V798H830V797H832V796H834V794H836V794H838V793H840V791H842V791H844V790H846V789H847V789H849V788H851V787H853V787H855V786H857V787H859V787H861V787H863V786H865V786H867V786H869V785H871V785H872V785H874V785H876V785H878V784H880V784H882V782H884V782H886V782H888V782H890V782H892V782H894V781H896V782H897V782H899V781H901V783H903V782H905V783H907V783H909V785H911V785H913V785H915V787H917V787H919V788H920V790H922V790H924V791H926V792H928V793H930V795H932V795H934V797H936V798H938V800H940V802H942V802H944V803H946V806H948V806H950V808H952V809H954V810H956V811H958V811H960V812H962V812H964V813H966V814H968V815H970V816H972V817H974V818H976V818H978V819H980V819H982V820H984V822H986V822H988V823H990V823H992V825H994V825H996V825H998V826H1000V827H1002V828H1004V828H1006V829H1008V830H1010V831H1012V831H1014V832H1016V833H1018V833H1020V834H1022V835H1024V835H1026V836H1028V838H1030V838H1032V839H1034V839H1036V840H1038V840H1040V841H1042V841H1044V843H1046V843H1048V844H1050V844H1051V845H1053V845H1055V846H1057V846H1059V848H1061V848H1063V849H1065V849H1067V850H1069V850H1071V850H1073V851H1075V851H1077V852H1079V852H1081V853H1083V852H1085V854H1087V854H1089V855H1091V855H1093V855H1095V856H1097V856H1099V856H1101V857H1103V858H1105V858H1107V858H1109V858H1111V858H1113V859H1115V860H1117V861H1119V861H1121V861H1123V862H1125V862H1127V862H1129V862H1131V863H1133V864H1135V864H1137V863H1139V864H1141V865H1143V865H1145V865H1147V865H1149V866H1151V865H1153V866H1155V867H1157V866H1159V867H1161V868H1163V868H1165V868H1167V868H1169V869H1171V870H1173V870H1175V870H1177V870H1179V871H1181V871H1183V871H1185V871H1187V871H1189V871H1191V872H1193V872H1195V872H1197V872H1199V872H1201V872H1202V872H1204V872H1206V872H1208V872H1210V872H1212V871H1214V872H1216V872H1218V871H1220V871H1222V871H1224V872H1226V870H1228V870H1230V870H1232V869H1234V869H1236V870H1238V868H1240V869H1242V869H1244V867H1246V867H1248V867H1250V866H1252V866H1254V866H1256V864H1258V864H1260V863H1262V863H1264V862H1266V861H1268V860H1270V859H1272V859H1274V858H1276V856H1278V856H1280V855H1282V854H1284V852H1286V852H1288V851H1290V850H1291V850H1293V848H1295V846H1297V844H1299V842H1301V840H1303V839H1305V837H1307V835H1309V834H1311V832H1313V829H1315V828H1317V826H1319V823H1321V823H1323V819H1325V817H1327V816H1329V814H1331V812H1333V809H1334V808H1336V806H1338V803H1340V801H1342V799H1344V797H1346V795H1348V791H1350V789H1352V787H1354V784H1356V783H1358V780H1360V776H1362V775H1364V771H1366V769H1368V766H1370V764H1372V761H1374V759H1376V758H1378V755H1380V753H1382V751H1384V750H1386V749H1388V749V763H1386V766H1384V768H1382V773H1380V776H1378V780H1376V782H1374V784H1372V788H1370V790H1368V792H1366V795H1364V797H1362V801H1360V802H1358V805H1356V807H1354V810H1352V813H1350V816H1348V818H1346V821H1344V823H1342V825H1340V828H1338V829H1336V832H1334V833H1332V834H1331V837H1329V840H1327V842H1325V842H1323V844H1321V847H1319V849H1317V850H1315V852H1313V853H1311V855H1309V856H1307V857H1305V858H1303V861H1301V861H1299V864H1297V865H1295V866H1293V868H1291V870H1289V870H1288V871H1286V872H1284V873H1282V873H1280V874H1278V876H1276V875H1274V876H1272V877H1270V879H1268V879H1266V880H1264V881H1262V882H1260V883H1258V882H1256V883H1254V884H1252V885H1250V886H1248V886H1246V887H1244V886H1242V886H1240V887H1238V887H1236V886H1234V887H1232V888H1230V887H1228V888H1226V889H1224V888H1222V888H1220V888H1218V888H1216V888H1214V889H1212V889H1210V888H1208V889H1206V888H1204V888H1202V889H1200V888H1199V889H1197V888H1195V889H1193V890H1191V889H1189V889H1187V889H1185V890H1183V891H1181V890H1179V890H1177V890H1175V891H1173V891H1171V890H1169V891H1167V892H1165V892H1163V891H1161V891H1159V891H1157V892H1155V892H1153V892H1151V890H1149V890H1147V890H1145V891H1143V890H1141V890H1139V889H1137V889H1135V890H1133V888H1131V889H1129V889H1127V888H1125V888H1123V886H1121V886H1119V885H1117V886H1115V884H1113V884H1111V884H1109V884H1107V883H1105V883H1103V883H1101V882H1099V882H1097V882H1095V882H1093V881H1091V880H1089V880H1087V879H1085V879H1083V879H1081V880H1079V878H1077V878H1075V877H1073V877H1071V878H1069V876H1067V875H1065V876H1063V875H1061V874H1059V875H1057V873H1055V874H1053V873H1051V873H1049V872H1048V872H1046V871H1044V871H1042V870H1040V869H1038V870H1036V869H1034V868H1032V866H1030V866H1028V867H1026V865H1024V865H1022V865H1020V863H1018V863H1016V861H1014V861H1012V860H1010V860H1008V859H1006V858H1004V857H1002V856H1000V856H998V855H996V854H994V854H992V852H990V852H988V850H986V849H984V848H982V846H980V846H978V846H976V844H974V842H972V842H970V840H968V840H966V838H964V838H962V836H960V835H958V834H956V833H954V832H952V832H950V831H948V830H946V829H944V828H942V826H940V827H938V827H936V825H934V824H932V824H930V823H928V823H926V822H924V822H922V822H920V820H918V820H917V819H915V819H913V817H911V815H909V815H907V814H905V813H903V813H901V812H899V810H897V811H895V810H894V809H892V809H890V810H888V809H886V810H884V811H882V810H880V811H878V812H876V811H874V812H872V813H870V812H869V814H867V815H865V815H863V818H861V818H859V821H857V822H855V823H853V823H851V827H849V827H847V830H845V830H844V831H842V834H840V836H838V836H836V838H834V840H832V843H830V844H828V846H826V847H824V851H822V852H820V853H819V854H817V857H815V858H813V860H811V862H809V864H807V865H805V867H803V869H801V870H799V872H797V873H795V874H793V876H791V876H789V877H787V878H785V878H783V879H781V878H779V879H777V880H775V881H773V880H771V881H769V882H768V881H766V883H764V882H762V882H760V883H758V884H756V883H754V884H752V884H750V884H748V884H746V885H744V884H743V884H741V884H739V884H737V885H735V884H733V885H731V883H729V883H727V883H725V882H723V883H721V882H719V880H717V879H715V880H713V878H711V876H709V876H707V876H705V875H704V873H702V869H700V867H698V867H697V864H695V860H693V859H693Z" fill="#c6b27c"/>
<path d="M1384 751H1386V749H1388V749H1390V748H1392V746H1394V746H1396V745H1398V743H1399V742H1401V743H1403V741H1405V741H1407V739H1409V740H1411V738H1413V738H1415V736H1417V736H1419V735H1420V735H1422V735H1424V733H1426V732H1428V732H1430V731H1432V729H1434V728H1436V728H1438V727H1440V727H1442V726H1443V725V740H1441V740H1440V741H1438V742H1436V741H1434V742H1432V744H1430V744H1428V746H1426V746H1424V748H1422V748H1420V747H1418V748H1417V749H1415V749H1413V751H1411V750H1409V750H1407V751H1405V752H1403V752H1401V754H1399V755H1397V754H1396V756H1394V758H1392V759H1390V762H1388V763H1386V764H1384V764H1384Z" fill="#a9cef0"/>
<path d="M831 678H838.500V698H840V714H842V730H845V746H847V772H849V800H837V772H835.500V742H834V722H832.500V700H831Z" fill="#c6b27c"/>
<path d="M809 588.5 L822 584 L836 580.5 L850 577.5 L868 575 L890 573.5 L915 574.5 L936 576 L936 578.5 L918 578.5 L905 579.5 L893 580 L878 581.5 L874 589 L885 602 L881 605 L866 600.5 L850 596 L836 593 L822 591 L809 590 Z" fill="#c6b27c"/>
<path d="M870 572.600H895V574.500H870Z" fill="#ffd000"/>
<path d="M184.5 913.5h2v2h-2zM186 911.5h2v2h-2zM185.5 907h2v2h-2zM214.5 917h2v2h-2zM212.5 915.5h2v2h-2zM187.5 908.5h2v2h-2zM165 907.5h2v2h-2zM185.5 910h2v2h-2zM185 913h2v2h-2zM170.5 910.5h2v2h-2zM183.5 910h2v2h-2zM208.5 918.5h2v2h-2zM165.5 909h2v2h-2zM204 912.5h2v2h-2zM218.5 909.5h2v2h-2zM185.5 909.5h2v2h-2zM205.5 918h2v2h-2zM172.5 904.5h2v2h-2zM194.5 907.5h2v2h-2zM181 912h2v2h-2zM193.5 906.5h2v2h-2zM170.5 903h2v2h-2zM189 910h2v2h-2zM200.5 910h2v2h-2zM213 907h2v2h-2zM159.5 912.5h2v2h-2zM168.5 913.5h2v2h-2zM169.5 913.5h2v2h-2zM208 915h2v2h-2zM202.5 912.5h2v2h-2zM186.5 915.5h2v2h-2zM212 912.5h2v2h-2zM197.5 914h2v2h-2zM180 916h2v2h-2zM186.5 909.5h2v2h-2zM211 910h2v2h-2zM191 917h2v2h-2zM178 911h2v2h-2zM208.5 906.5h2v2h-2zM217 914.5h2v2h-2zM208.5 918h2v2h-2zM198 913.5h2v2h-2zM201 911.5h2v2h-2zM208 918h2v2h-2zM182 914.5h2v2h-2zM210 913.5h2v2h-2zM196.5 917.5h2v2h-2zM160 902h2v2h-2zM204.5 909h2v2h-2zM171 903.5h2v2h-2zM204 917h2v2h-2zM164.5 909.5h2v2h-2zM160 909.5h2v2h-2zM164 906h2v2h-2zM163 906.5h2v2h-2zM209 911h2v2h-2zM208.5 918.5h2v2h-2zM220.5 916h2v2h-2zM180 911h2v2h-2zM202 913.5h2v2h-2zM175.5 908.5h2v2h-2zM211.5 917h2v2h-2zM195 908.5h2v2h-2zM210 915h2v2h-2zM181 905h2v2h-2zM209 908.5h2v2h-2zM217.5 909.5h2v2h-2zM175 912.5h2v2h-2zM188 905.5h2v2h-2zM207.5 909h2v2h-2zM215.5 918.5h2v2h-2zM171 905h2v2h-2zM196.5 909.5h2v2h-2zM160.5 902.5h2v2h-2zM213.5 913h2v2h-2zM218.5 917h2v2h-2zM162 908.5h2v2h-2zM809 812h2v2h-2zM819.5 800.5h2v2h-2zM829 812h2v2h-2zM838 780h2v2h-2zM830.5 798.5h2v2h-2zM820.5 807.5h2v2h-2zM817.5 812h2v2h-2zM829.5 825.5h2v2h-2zM832 778.5h2v2h-2zM825 822h2v2h-2zM806.5 834h2v2h-2zM825 804.5h2v2h-2zM825.5 783.5h2v2h-2zM819.5 799h2v2h-2zM803 807h2v2h-2zM816.5 811h2v2h-2zM838 818h2v2h-2zM824.5 831h2v2h-2zM818 775.5h2v2h-2zM827 787.5h2v2h-2zM824 848.5h2v2h-2zM838 770h2v2h-2zM833 780h2v2h-2zM837 785h2v2h-2zM822.5 823.5h2v2h-2zM798 852h2v2h-2zM821.5 841.5h2v2h-2zM810 831.5h2v2h-2zM818.5 815h2v2h-2zM823 807.5h2v2h-2zM821.5 826h2v2h-2zM819.5 793.5h2v2h-2zM828 824h2v2h-2zM829.5 847h2v2h-2zM832 802h2v2h-2zM803 847.5h2v2h-2zM826.5 801.5h2v2h-2zM821 796.5h2v2h-2zM829.5 779h2v2h-2zM836.5 818.5h2v2h-2zM821.5 784.5h2v2h-2zM831.5 805.5h2v2h-2zM832 780h2v2h-2zM810 816h2v2h-2zM824 842.5h2v2h-2zM830.5 811.5h2v2h-2zM813.5 831h2v2h-2zM816 793.5h2v2h-2zM833.5 780.5h2v2h-2zM828.5 819h2v2h-2zM809 812.5h2v2h-2zM832 779.5h2v2h-2zM823 801.5h2v2h-2zM819.5 807h2v2h-2zM824.5 794h2v2h-2zM829 814h2v2h-2zM820 822h2v2h-2zM795.5 827.5h2v2h-2zM803.5 850h2v2h-2zM812 842.5h2v2h-2zM824 833.5h2v2h-2zM817 837h2v2h-2zM807 828h2v2h-2zM824 851.5h2v2h-2zM818.5 849.5h2v2h-2zM810.5 825h2v2h-2zM805 822h2v2h-2zM806.5 836.5h2v2h-2zM817 847h2v2h-2zM809.5 833h2v2h-2zM817.5 842.5h2v2h-2zM815.5 836h2v2h-2zM811 830h2v2h-2zM808.5 830h2v2h-2zM797 849h2v2h-2zM818 814h2v2h-2zM819.5 847h2v2h-2zM815 828h2v2h-2zM809.5 852h2v2h-2zM805 813.5h2v2h-2z" fill="#ffa000"/>
<path d="M204 914h2v2h-2zM161.5 908.5h2v2h-2zM211 913h2v2h-2zM183.5 913.5h2v2h-2zM221 911.5h2v2h-2zM176.5 908.5h2v2h-2zM181 907h2v2h-2zM173 912.5h2v2h-2zM210 914.5h2v2h-2zM210.5 912.5h2v2h-2zM181.5 914.5h2v2h-2zM182.5 907h2v2h-2zM176.5 906.5h2v2h-2zM216 917h2v2h-2zM211.5 914.5h2v2h-2zM175 904.5h2v2h-2zM173.5 912.5h2v2h-2zM208.5 917h2v2h-2zM175.5 906h2v2h-2zM190 905h2v2h-2zM168 908.5h2v2h-2zM193 916h2v2h-2zM201 916.5h2v2h-2zM185.5 916.5h2v2h-2zM199 913.5h2v2h-2zM189.5 916h2v2h-2zM204 914h2v2h-2zM213.5 911h2v2h-2zM192 914.5h2v2h-2zM184.5 910.5h2v2h-2zM209 910.5h2v2h-2zM215 914h2v2h-2zM178 903.5h2v2h-2zM196.5 914h2v2h-2zM165.5 904.5h2v2h-2zM194.5 908h2v2h-2zM185.5 908h2v2h-2zM199.5 917.5h2v2h-2zM195 905.5h2v2h-2zM187 904.5h2v2h-2zM189 909.5h2v2h-2zM199.5 908h2v2h-2zM166.5 914h2v2h-2zM214 908h2v2h-2zM188 916.5h2v2h-2zM220 916h2v2h-2zM169.5 913h2v2h-2zM186.5 913h2v2h-2zM198.5 910.5h2v2h-2zM194.5 908.5h2v2h-2zM211.5 914h2v2h-2zM186 915.5h2v2h-2zM210 910h2v2h-2zM210.5 918h2v2h-2zM201.5 911.5h2v2h-2zM189 912h2v2h-2zM182 911h2v2h-2zM191.5 906.5h2v2h-2zM222 911.5h2v2h-2zM199 915.5h2v2h-2zM175.5 913h2v2h-2zM219.5 910h2v2h-2zM171.5 905h2v2h-2zM805.5 811h2v2h-2zM819 835.5h2v2h-2zM834 789.5h2v2h-2zM810 862.5h2v2h-2zM805.5 840h2v2h-2zM814 821.5h2v2h-2zM804 852h2v2h-2zM844.5 797h2v2h-2zM816 824.5h2v2h-2zM801 818.5h2v2h-2zM816 799h2v2h-2zM833 780.5h2v2h-2zM825 796.5h2v2h-2zM828 793h2v2h-2zM826.5 806.5h2v2h-2zM825 785.5h2v2h-2zM816 814h2v2h-2zM832 775h2v2h-2zM814.5 784.5h2v2h-2zM831 793.5h2v2h-2zM824 818.5h2v2h-2zM820.5 796h2v2h-2zM830 767.5h2v2h-2zM820.5 833h2v2h-2zM823 806h2v2h-2zM829 781.5h2v2h-2zM797.5 828h2v2h-2zM825.5 817.5h2v2h-2zM807.5 796h2v2h-2zM832.5 766h2v2h-2zM803 824h2v2h-2zM824 780.5h2v2h-2zM817.5 838.5h2v2h-2zM855.5 812.5h2v2h-2zM832.5 804h2v2h-2zM821 800.5h2v2h-2zM827.5 800h2v2h-2zM800 810h2v2h-2zM842.5 795.5h2v2h-2zM820 793.5h2v2h-2zM800 850.5h2v2h-2zM800.5 801h2v2h-2zM828.5 779h2v2h-2zM826.5 787.5h2v2h-2zM825 822.5h2v2h-2zM826 609h2v2h-2zM828 608h2v2h-2zM820 617h2v2h-2zM866 601h2v2h-2zM870 601h2v2h-2zM882 584h2v2h-2zM884 588h2v2h-2zM889 583h2v2h-2zM886 595h2v2h-2zM903 595h2v2h-2zM908 600h2v2h-2zM913 600h2v2h-2zM894 590h2v2h-2zM899 601h2v2h-2zM791 588.5h2v2h-2zM795 588.5h2v2h-2zM799 588.5h2v2h-2zM917 609h2v2h-2zM920 609h2v2h-2zM923 609h2v2h-2zM926 609h2v2h-2zM929 609h2v2h-2zM932 609h2v2h-2zM932 610.5h2v2h-2zM627 855h2v2h-2z" fill="#ffd000"/>
<path d="M432.5 909h1.6v1.6h-1.6zM632.5 885h1.6v1.6h-1.6zM296 912.5h1.6v1.6h-1.6zM438.5 888.5h1.6v1.6h-1.6zM657.5 880h1.6v1.6h-1.6zM667.5 880h1.6v1.6h-1.6zM365.5 894.5h1.6v1.6h-1.6zM276.5 901.5h1.6v1.6h-1.6zM429 907.5h1.6v1.6h-1.6zM337.5 896.5h1.6v1.6h-1.6zM282 900h1.6v1.6h-1.6zM663 880.5h1.6v1.6h-1.6zM333.5 896.5h1.6v1.6h-1.6zM411.5 889.5h1.6v1.6h-1.6zM458.5 885h1.6v1.6h-1.6zM347.5 896h1.6v1.6h-1.6zM314 911h1.6v1.6h-1.6zM463.5 885.5h1.6v1.6h-1.6zM245 903h1.6v1.6h-1.6zM224 917h1.6v1.6h-1.6zM382 911h1.6v1.6h-1.6zM591 890h1.6v1.6h-1.6zM350 894.5h1.6v1.6h-1.6zM214.5 917.5h1.6v1.6h-1.6zM228.5 905h1.6v1.6h-1.6zM473.5 884h1.6v1.6h-1.6zM489 902h1.6v1.6h-1.6zM608.5 885.5h1.6v1.6h-1.6zM317.5 897.5h1.6v1.6h-1.6zM519 902h1.6v1.6h-1.6zM516.5 899.5h1.6v1.6h-1.6zM267 902h1.6v1.6h-1.6zM371 893h1.6v1.6h-1.6zM402 907.5h1.6v1.6h-1.6zM352 909.5h1.6v1.6h-1.6zM372.5 893h1.6v1.6h-1.6zM338.5 911.5h1.6v1.6h-1.6zM410 890.5h1.6v1.6h-1.6zM412.5 909.5h1.6v1.6h-1.6zM393.5 891.5h1.6v1.6h-1.6zM380 892.5h1.6v1.6h-1.6zM396 891h1.6v1.6h-1.6zM421 890h1.6v1.6h-1.6zM218.5 905h1.6v1.6h-1.6zM461.5 885h1.6v1.6h-1.6zM435.5 888h1.6v1.6h-1.6zM674.5 877.5h1.6v1.6h-1.6zM408.5 890h1.6v1.6h-1.6zM282 900.5h1.6v1.6h-1.6zM363 911.5h1.6v1.6h-1.6zM455.5 887h1.6v1.6h-1.6zM636.5 883h1.6v1.6h-1.6zM290 899h1.6v1.6h-1.6zM337.5 895h1.6v1.6h-1.6zM233 916.5h1.6v1.6h-1.6zM423 907h1.6v1.6h-1.6zM284.5 912.5h1.6v1.6h-1.6zM358.5 910.5h1.6v1.6h-1.6zM371.5 909.5h1.6v1.6h-1.6zM397.5 891.5h1.6v1.6h-1.6zM223 916h1.6v1.6h-1.6zM325.5 897.5h1.6v1.6h-1.6zM284.5 899.5h1.6v1.6h-1.6zM268 915h1.6v1.6h-1.6zM474 883h1.6v1.6h-1.6zM220 915.5h1.6v1.6h-1.6zM249.5 902h1.6v1.6h-1.6zM345.5 894.5h1.6v1.6h-1.6zM293 898.5h1.6v1.6h-1.6zM379.5 892.5h1.6v1.6h-1.6zM434.5 907h1.6v1.6h-1.6zM295.5 898h1.6v1.6h-1.6zM314.5 912h1.6v1.6h-1.6zM419 907h1.6v1.6h-1.6zM479 905.5h1.6v1.6h-1.6zM537 900h1.6v1.6h-1.6zM618 884.5h1.6v1.6h-1.6zM638.5 883.5h1.6v1.6h-1.6zM699 874.5h1.6v1.6h-1.6zM457.5 905h1.6v1.6h-1.6zM448 886h1.6v1.6h-1.6zM335 895h1.6v1.6h-1.6zM383 893h1.6v1.6h-1.6zM323.5 897h1.6v1.6h-1.6zM272 915h1.6v1.6h-1.6zM446.5 886.5h1.6v1.6h-1.6zM303.5 912.5h1.6v1.6h-1.6zM285.5 899.5h1.6v1.6h-1.6zM289 900.5h1.6v1.6h-1.6zM588.5 889.5h1.6v1.6h-1.6zM393.5 908.5h1.6v1.6h-1.6zM324.5 897h1.6v1.6h-1.6zM661 879h1.6v1.6h-1.6zM698 876h1.6v1.6h-1.6zM314 898.5h1.6v1.6h-1.6zM241.5 903h1.6v1.6h-1.6zM248 903h1.6v1.6h-1.6zM655 882h1.6v1.6h-1.6zM384 892.5h1.6v1.6h-1.6zM262.5 901h1.6v1.6h-1.6zM298.5 913.5h1.6v1.6h-1.6zM541.5 896.5h1.6v1.6h-1.6zM484 902.5h1.6v1.6h-1.6zM406 891.5h1.6v1.6h-1.6zM416.5 908.5h1.6v1.6h-1.6zM484 905h1.6v1.6h-1.6zM387.5 910.5h1.6v1.6h-1.6zM663 878.5h1.6v1.6h-1.6zM262 902.5h1.6v1.6h-1.6zM400.5 909h1.6v1.6h-1.6zM341 896h1.6v1.6h-1.6zM489.5 902h1.6v1.6h-1.6zM658 878.5h1.6v1.6h-1.6zM597 888h1.6v1.6h-1.6zM280.5 899.5h1.6v1.6h-1.6zM430 888.5h1.6v1.6h-1.6zM242.5 902.5h1.6v1.6h-1.6zM685.5 877h1.6v1.6h-1.6zM765.5 849.5h1.6v1.6h-1.6zM735 854.5h1.6v1.6h-1.6zM774 845h1.6v1.6h-1.6zM764.5 849.5h1.6v1.6h-1.6zM727 855h1.6v1.6h-1.6zM782 839h1.6v1.6h-1.6zM759 851h1.6v1.6h-1.6zM720 856.5h1.6v1.6h-1.6zM786.5 835h1.6v1.6h-1.6zM778.5 841.5h1.6v1.6h-1.6zM726 855h1.6v1.6h-1.6zM743.5 853h1.6v1.6h-1.6zM707 855.5h1.6v1.6h-1.6zM739 853.5h1.6v1.6h-1.6zM723 855h1.6v1.6h-1.6zM729 856h1.6v1.6h-1.6zM782.5 838.5h1.6v1.6h-1.6zM710.5 857h1.6v1.6h-1.6zM713.5 855.5h1.6v1.6h-1.6zM766.5 849h1.6v1.6h-1.6zM744.5 852.5h1.6v1.6h-1.6zM790.5 831h1.6v1.6h-1.6zM855.5 822h1.6v1.6h-1.6zM885 813.5h1.6v1.6h-1.6zM764 882h1.6v1.6h-1.6zM795 874h1.6v1.6h-1.6zM769.5 882h1.6v1.6h-1.6zM818.5 857h1.6v1.6h-1.6zM822 850.5h1.6v1.6h-1.6zM895 810h1.6v1.6h-1.6zM775 881.5h1.6v1.6h-1.6zM826.5 850h1.6v1.6h-1.6zM773 881h1.6v1.6h-1.6zM902 813.5h1.6v1.6h-1.6zM783.5 878.5h1.6v1.6h-1.6zM749 884.5h1.6v1.6h-1.6zM810 860.5h1.6v1.6h-1.6zM897 811h1.6v1.6h-1.6zM824 852h1.6v1.6h-1.6zM802.5 870h1.6v1.6h-1.6zM797 874.5h1.6v1.6h-1.6zM824.5 848.5h1.6v1.6h-1.6zM830 846h1.6v1.6h-1.6zM777 880.5h1.6v1.6h-1.6zM755 883h1.6v1.6h-1.6zM828.5 847h1.6v1.6h-1.6zM890 811.5h1.6v1.6h-1.6zM900.5 813h1.6v1.6h-1.6zM802.5 869h1.6v1.6h-1.6zM788.5 877h1.6v1.6h-1.6zM821 853.5h1.6v1.6h-1.6zM893.5 810.5h1.6v1.6h-1.6zM854 824.5h1.6v1.6h-1.6zM796 874.5h1.6v1.6h-1.6zM820.5 852h1.6v1.6h-1.6zM893 811.5h1.6v1.6h-1.6zM825 849h1.6v1.6h-1.6zM770.5 882.5h1.6v1.6h-1.6zM752 883h1.6v1.6h-1.6zM830.5 845h1.6v1.6h-1.6zM880.5 812h1.6v1.6h-1.6zM757 883h1.6v1.6h-1.6zM860 820.5h1.6v1.6h-1.6zM875 814h1.6v1.6h-1.6zM764.5 882h1.6v1.6h-1.6zM747 885h1.6v1.6h-1.6zM856.5 822.5h1.6v1.6h-1.6zM841.5 834h1.6v1.6h-1.6zM902 814h1.6v1.6h-1.6zM885 810.5h1.6v1.6h-1.6zM841.5 835.5h1.6v1.6h-1.6zM878.5 813.5h1.6v1.6h-1.6zM894 810h1.6v1.6h-1.6zM773 881.5h1.6v1.6h-1.6zM864 817h1.6v1.6h-1.6zM809.5 864h1.6v1.6h-1.6zM871.5 815h1.6v1.6h-1.6zM809 863h1.6v1.6h-1.6zM799 873h1.6v1.6h-1.6zM859 820.5h1.6v1.6h-1.6zM862.5 819h1.6v1.6h-1.6zM893.5 810.5h1.6v1.6h-1.6zM779 879.5h1.6v1.6h-1.6zM893 809.5h1.6v1.6h-1.6zM745.5 885h1.6v1.6h-1.6zM782.5 877.5h1.6v1.6h-1.6zM779 879.5h1.6v1.6h-1.6zM870.5 815h1.6v1.6h-1.6zM881.5 811h1.6v1.6h-1.6zM780.5 879.5h1.6v1.6h-1.6zM783 876h1.6v1.6h-1.6zM790 873.5h1.6v1.6h-1.6zM900 813.5h1.6v1.6h-1.6zM806 865h1.6v1.6h-1.6zM848.5 829.5h1.6v1.6h-1.6zM806.5 866.5h1.6v1.6h-1.6zM859 822.5h1.6v1.6h-1.6zM842 834h1.6v1.6h-1.6zM842 835h1.6v1.6h-1.6zM794.5 873.5h1.6v1.6h-1.6zM836 840.5h1.6v1.6h-1.6zM757.5 881.5h1.6v1.6h-1.6zM828 845.5h1.6v1.6h-1.6zM897.5 810h1.6v1.6h-1.6zM818 856.5h1.6v1.6h-1.6zM816.5 857h1.6v1.6h-1.6zM901.5 813h1.6v1.6h-1.6zM840.5 834h1.6v1.6h-1.6zM831 844h1.6v1.6h-1.6zM822.5 851h1.6v1.6h-1.6zM895 812.5h1.6v1.6h-1.6zM830 844h1.6v1.6h-1.6zM834 842.5h1.6v1.6h-1.6zM790 877h1.6v1.6h-1.6zM837.5 839h1.6v1.6h-1.6zM780.5 877h1.6v1.6h-1.6zM874.5 812h1.6v1.6h-1.6zM805 868h1.6v1.6h-1.6zM789 874.5h1.6v1.6h-1.6zM763 882h1.6v1.6h-1.6zM897.5 810.5h1.6v1.6h-1.6zM851.5 827.5h1.6v1.6h-1.6zM754 883.5h1.6v1.6h-1.6zM830 845.5h1.6v1.6h-1.6zM785.5 877.5h1.6v1.6h-1.6zM837 838h1.6v1.6h-1.6zM900 813.5h1.6v1.6h-1.6zM844 831h1.6v1.6h-1.6zM843.5 831h1.6v1.6h-1.6zM771.5 882h1.6v1.6h-1.6zM757 884.5h1.6v1.6h-1.6zM747.5 885.5h1.6v1.6h-1.6zM871.5 814.5h1.6v1.6h-1.6zM868.5 814.5h1.6v1.6h-1.6zM866 818.5h1.6v1.6h-1.6zM792.5 875.5h1.6v1.6h-1.6zM748.5 885.5h1.6v1.6h-1.6zM843 831h1.6v1.6h-1.6zM801.5 869h1.6v1.6h-1.6zM878.5 813h1.6v1.6h-1.6zM864.5 818h1.6v1.6h-1.6zM834 841.5h1.6v1.6h-1.6zM835.5 839h1.6v1.6h-1.6zM801.5 868h1.6v1.6h-1.6zM863.5 819.5h1.6v1.6h-1.6zM812.5 858.5h1.6v1.6h-1.6zM859 822.5h1.6v1.6h-1.6zM800 872h1.6v1.6h-1.6zM803 869.5h1.6v1.6h-1.6zM823 850h1.6v1.6h-1.6zM799 871h1.6v1.6h-1.6zM888.5 813h1.6v1.6h-1.6zM881 812.5h1.6v1.6h-1.6zM785 876.5h1.6v1.6h-1.6zM801.5 870h1.6v1.6h-1.6zM895 810h1.6v1.6h-1.6zM789.5 876.5h1.6v1.6h-1.6zM828 847.5h1.6v1.6h-1.6zM861 819h1.6v1.6h-1.6zM888.5 811.5h1.6v1.6h-1.6zM767 880.5h1.6v1.6h-1.6zM861.5 820h1.6v1.6h-1.6zM749.5 885.5h1.6v1.6h-1.6zM900.5 811h1.6v1.6h-1.6zM870 813.5h1.6v1.6h-1.6zM836.5 840h1.6v1.6h-1.6zM882.5 811.5h1.6v1.6h-1.6zM834.5 840.5h1.6v1.6h-1.6zM868 817h1.6v1.6h-1.6zM746 884h1.6v1.6h-1.6zM801.5 870.5h1.6v1.6h-1.6zM760.5 884h1.6v1.6h-1.6zM896 810.5h1.6v1.6h-1.6zM836.5 840.5h1.6v1.6h-1.6zM854.5 826h1.6v1.6h-1.6zM867 817h1.6v1.6h-1.6zM860 822h1.6v1.6h-1.6zM772 881.5h1.6v1.6h-1.6zM883 814h1.6v1.6h-1.6zM859.5 821h1.6v1.6h-1.6zM886 812h1.6v1.6h-1.6zM764 882.5h1.6v1.6h-1.6zM806 866.5h1.6v1.6h-1.6zM873 814.5h1.6v1.6h-1.6zM746 885h1.6v1.6h-1.6zM864 817.5h1.6v1.6h-1.6zM863 819.5h1.6v1.6h-1.6zM784 878.5h1.6v1.6h-1.6zM777 877.5h1.6v1.6h-1.6zM819.5 854h1.6v1.6h-1.6zM895.5 812.5h1.6v1.6h-1.6zM869 813.5h1.6v1.6h-1.6zM834 841.5h1.6v1.6h-1.6zM811 859.5h1.6v1.6h-1.6zM820 854h1.6v1.6h-1.6zM898 812h1.6v1.6h-1.6zM886 810.5h1.6v1.6h-1.6zM768 882h1.6v1.6h-1.6zM843.5 832h1.6v1.6h-1.6zM826.5 849.5h1.6v1.6h-1.6zM806 867h1.6v1.6h-1.6zM756.5 881.5h1.6v1.6h-1.6zM848.5 826.5h1.6v1.6h-1.6zM835 841h1.6v1.6h-1.6zM871.5 813.5h1.6v1.6h-1.6zM858 823h1.6v1.6h-1.6zM843.5 832.5h1.6v1.6h-1.6zM852.5 826h1.6v1.6h-1.6zM778.5 878h1.6v1.6h-1.6zM826 849.5h1.6v1.6h-1.6zM778.5 879.5h1.6v1.6h-1.6zM862.5 820h1.6v1.6h-1.6zM902.5 813.5h1.6v1.6h-1.6zM759 883h1.6v1.6h-1.6zM853.5 823.5h1.6v1.6h-1.6zM783 879h1.6v1.6h-1.6zM902.5 811.5h1.6v1.6h-1.6zM789 875h1.6v1.6h-1.6zM792.5 874.5h1.6v1.6h-1.6zM837 837.5h1.6v1.6h-1.6zM775.5 878.5h1.6v1.6h-1.6zM752 884.5h1.6v1.6h-1.6zM868 815h1.6v1.6h-1.6zM806.5 867h1.6v1.6h-1.6zM893 811.5h1.6v1.6h-1.6zM778.5 880h1.6v1.6h-1.6zM865.5 816h1.6v1.6h-1.6zM748.5 883h1.6v1.6h-1.6zM861.5 820.5h1.6v1.6h-1.6zM766.5 883.5h1.6v1.6h-1.6zM873 811.5h1.6v1.6h-1.6zM844 831.5h1.6v1.6h-1.6zM786 875.5h1.6v1.6h-1.6zM871 815h1.6v1.6h-1.6zM749.5 884h1.6v1.6h-1.6zM771 880h1.6v1.6h-1.6zM896.5 811.5h1.6v1.6h-1.6zM820.5 853.5h1.6v1.6h-1.6zM865.5 818.5h1.6v1.6h-1.6zM797 874h1.6v1.6h-1.6zM747 885h1.6v1.6h-1.6zM799.5 871.5h1.6v1.6h-1.6zM892.5 780.5h1.6v1.6h-1.6zM872 783.5h1.6v1.6h-1.6zM886 783h1.6v1.6h-1.6zM876.5 785h1.6v1.6h-1.6zM874 783h1.6v1.6h-1.6zM896.5 781.5h1.6v1.6h-1.6zM875.5 785h1.6v1.6h-1.6zM898.5 782.5h1.6v1.6h-1.6zM875 783.5h1.6v1.6h-1.6zM886 781.5h1.6v1.6h-1.6zM926 792.5h1.6v1.6h-1.6zM917 787h1.6v1.6h-1.6zM909.5 786h1.6v1.6h-1.6zM916 786h1.6v1.6h-1.6zM913.5 786.5h1.6v1.6h-1.6zM879 782h1.6v1.6h-1.6zM907.5 784h1.6v1.6h-1.6zM881.5 782h1.6v1.6h-1.6zM888.5 782.5h1.6v1.6h-1.6zM892 780.5h1.6v1.6h-1.6zM877.5 782.5h1.6v1.6h-1.6zM909 784.5h1.6v1.6h-1.6zM910 784.5h1.6v1.6h-1.6zM880 784.5h1.6v1.6h-1.6zM876 784.5h1.6v1.6h-1.6zM876.5 783h1.6v1.6h-1.6zM903 784.5h1.6v1.6h-1.6zM876.5 783.5h1.6v1.6h-1.6zM914 786h1.6v1.6h-1.6zM901.5 781.5h1.6v1.6h-1.6zM925.5 792h1.6v1.6h-1.6zM924 792h1.6v1.6h-1.6zM895 780.5h1.6v1.6h-1.6zM882 781.5h1.6v1.6h-1.6zM923 789.5h1.6v1.6h-1.6zM898.5 782h1.6v1.6h-1.6zM884 783h1.6v1.6h-1.6zM917.5 789h1.6v1.6h-1.6zM884 783.5h1.6v1.6h-1.6zM891.5 781.5h1.6v1.6h-1.6zM921 790.5h1.6v1.6h-1.6zM877 783h1.6v1.6h-1.6zM910.5 786h1.6v1.6h-1.6zM887.5 783.5h1.6v1.6h-1.6zM900 781h1.6v1.6h-1.6zM875.5 785h1.6v1.6h-1.6zM877 783.5h1.6v1.6h-1.6zM875.5 784.5h1.6v1.6h-1.6zM887.5 781h1.6v1.6h-1.6zM926.5 793h1.6v1.6h-1.6zM903.5 784h1.6v1.6h-1.6zM893.5 781h1.6v1.6h-1.6zM893.5 782.5h1.6v1.6h-1.6zM910.5 784.5h1.6v1.6h-1.6zM924.5 792.5h1.6v1.6h-1.6zM916 786h1.6v1.6h-1.6zM873.5 784h1.6v1.6h-1.6zM923.5 790h1.6v1.6h-1.6zM921.5 790h1.6v1.6h-1.6zM924 791.5h1.6v1.6h-1.6zM872.5 785.5h1.6v1.6h-1.6zM894 782h1.6v1.6h-1.6zM888.5 782.5h1.6v1.6h-1.6zM900.5 783h1.6v1.6h-1.6zM904 783.5h1.6v1.6h-1.6zM895.5 781.5h1.6v1.6h-1.6zM925.5 791h1.6v1.6h-1.6zM896.5 782.5h1.6v1.6h-1.6zM883 783.5h1.6v1.6h-1.6zM897.5 782h1.6v1.6h-1.6zM891.5 783h1.6v1.6h-1.6zM901.5 782.5h1.6v1.6h-1.6zM884.5 782.5h1.6v1.6h-1.6zM930 793.5h1.6v1.6h-1.6zM894 783h1.6v1.6h-1.6zM897 782.5h1.6v1.6h-1.6zM902 782.5h1.6v1.6h-1.6zM890.5 783h1.6v1.6h-1.6zM899.5 782h1.6v1.6h-1.6zM927 792h1.6v1.6h-1.6zM879.5 782.5h1.6v1.6h-1.6zM908.5 786h1.6v1.6h-1.6zM888.5 781.5h1.6v1.6h-1.6zM876 783.5h1.6v1.6h-1.6zM899.5 782.5h1.6v1.6h-1.6zM901.5 782h1.6v1.6h-1.6zM919 787h1.6v1.6h-1.6zM909.5 784.5h1.6v1.6h-1.6zM874 784h1.6v1.6h-1.6zM917 787h1.6v1.6h-1.6zM880 784h1.6v1.6h-1.6zM894.5 780h1.6v1.6h-1.6zM890.5 783.5h1.6v1.6h-1.6zM921.5 789h1.6v1.6h-1.6zM909.5 784.5h1.6v1.6h-1.6zM873 784.5h1.6v1.6h-1.6zM914 786.5h1.6v1.6h-1.6zM921.5 790h1.6v1.6h-1.6zM928.5 793h1.6v1.6h-1.6zM889.5 782.5h1.6v1.6h-1.6zM883.5 784h1.6v1.6h-1.6zM873.5 785.5h1.6v1.6h-1.6zM893 781.5h1.6v1.6h-1.6zM876 784.5h1.6v1.6h-1.6zM921.5 788.5h1.6v1.6h-1.6zM911 786.5h1.6v1.6h-1.6zM924.5 792.5h1.6v1.6h-1.6zM899.5 782.5h1.6v1.6h-1.6zM917.5 788.5h1.6v1.6h-1.6zM928.5 793h1.6v1.6h-1.6zM874 785h1.6v1.6h-1.6zM896 780.5h1.6v1.6h-1.6zM905 783h1.6v1.6h-1.6zM886 781.5h1.6v1.6h-1.6zM881 782.5h1.6v1.6h-1.6zM907 784.5h1.6v1.6h-1.6zM904 783.5h1.6v1.6h-1.6zM887 782h1.6v1.6h-1.6zM888 782.5h1.6v1.6h-1.6zM925 790h1.6v1.6h-1.6zM852 774h1.6v1.6h-1.6zM843.5 719.5h1.6v1.6h-1.6zM854.5 764h1.6v1.6h-1.6zM837.5 822.5h1.6v1.6h-1.6zM850 797h1.6v1.6h-1.6zM858.5 759.5h1.6v1.6h-1.6zM844.5 668.5h1.6v1.6h-1.6zM834.5 688.5h1.6v1.6h-1.6zM831.5 770h1.6v1.6h-1.6zM839 726.5h1.6v1.6h-1.6zM854 771h1.6v1.6h-1.6zM842 783.5h1.6v1.6h-1.6zM845.5 814h1.6v1.6h-1.6zM843.5 799h1.6v1.6h-1.6zM843.5 715.5h1.6v1.6h-1.6zM846 723.5h1.6v1.6h-1.6zM829.5 817.5h1.6v1.6h-1.6zM838 724h1.6v1.6h-1.6zM850.5 787h1.6v1.6h-1.6zM842.5 777h1.6v1.6h-1.6zM841 783h1.6v1.6h-1.6zM843.5 800.5h1.6v1.6h-1.6zM856 738h1.6v1.6h-1.6zM840.5 842.5h1.6v1.6h-1.6zM840.5 859.5h1.6v1.6h-1.6zM831 773.5h1.6v1.6h-1.6zM856.5 682.5h1.6v1.6h-1.6zM850 755h1.6v1.6h-1.6zM853.5 785h1.6v1.6h-1.6zM853 722h1.6v1.6h-1.6zM845 689h1.6v1.6h-1.6zM835 653.5h1.6v1.6h-1.6zM845 742.5h1.6v1.6h-1.6zM843 773h1.6v1.6h-1.6zM850 803h1.6v1.6h-1.6zM837.5 743h1.6v1.6h-1.6zM837 741h1.6v1.6h-1.6zM831 744.5h1.6v1.6h-1.6zM846.5 730h1.6v1.6h-1.6zM849.5 787h1.6v1.6h-1.6zM844 754.5h1.6v1.6h-1.6zM848 751h1.6v1.6h-1.6zM846.5 724h1.6v1.6h-1.6zM837 739.5h1.6v1.6h-1.6zM859 816h1.6v1.6h-1.6zM855.5 726h1.6v1.6h-1.6zM844.5 714.5h1.6v1.6h-1.6zM835.5 731h1.6v1.6h-1.6zM846.5 829h1.6v1.6h-1.6zM855 708h1.6v1.6h-1.6zM845.5 800h1.6v1.6h-1.6zM848.5 716h1.6v1.6h-1.6zM848 813.5h1.6v1.6h-1.6zM850.5 759h1.6v1.6h-1.6zM836 740.5h1.6v1.6h-1.6zM829.5 777.5h1.6v1.6h-1.6zM840 746h1.6v1.6h-1.6zM831.5 769.5h1.6v1.6h-1.6zM840 751h1.6v1.6h-1.6zM847 764.5h1.6v1.6h-1.6zM857.5 800h1.6v1.6h-1.6zM837.5 786.5h1.6v1.6h-1.6zM851.5 807.5h1.6v1.6h-1.6zM854.5 709h1.6v1.6h-1.6zM844.5 724.5h1.6v1.6h-1.6zM845 830.5h1.6v1.6h-1.6zM840 744.5h1.6v1.6h-1.6zM845 735h1.6v1.6h-1.6zM849.5 831h1.6v1.6h-1.6zM834 776.5h1.6v1.6h-1.6zM844 724.5h1.6v1.6h-1.6zM843.5 722.5h1.6v1.6h-1.6zM833 791h1.6v1.6h-1.6zM853 767h1.6v1.6h-1.6zM837 758h1.6v1.6h-1.6zM839 792.5h1.6v1.6h-1.6zM850 766.5h1.6v1.6h-1.6zM850 780h1.6v1.6h-1.6zM857.5 762h1.6v1.6h-1.6zM849.5 708.5h1.6v1.6h-1.6zM832 792h1.6v1.6h-1.6zM843.5 762h1.6v1.6h-1.6zM853.5 811.5h1.6v1.6h-1.6zM834 804h1.6v1.6h-1.6zM839.5 745.5h1.6v1.6h-1.6zM842 803.5h1.6v1.6h-1.6zM812 865.5h1.6v1.6h-1.6zM812.5 856h1.6v1.6h-1.6zM816 850h1.6v1.6h-1.6zM798 859.5h1.6v1.6h-1.6zM812 857h1.6v1.6h-1.6zM788.5 865h1.6v1.6h-1.6zM812.5 853h1.6v1.6h-1.6zM797 861.5h1.6v1.6h-1.6zM791 860.5h1.6v1.6h-1.6zM777.5 868.5h1.6v1.6h-1.6zM816.5 849.5h1.6v1.6h-1.6zM777 861.5h1.6v1.6h-1.6zM786 855.5h1.6v1.6h-1.6zM793.5 858h1.6v1.6h-1.6zM805.5 846h1.6v1.6h-1.6zM768.5 876h1.6v1.6h-1.6zM831 845h1.6v1.6h-1.6zM791.5 868.5h1.6v1.6h-1.6zM801 854h1.6v1.6h-1.6zM797.5 859.5h1.6v1.6h-1.6zM835.5 842h1.6v1.6h-1.6zM805.5 861h1.6v1.6h-1.6zM827.5 852h1.6v1.6h-1.6zM772 872.5h1.6v1.6h-1.6zM800.5 864h1.6v1.6h-1.6zM803.5 863.5h1.6v1.6h-1.6zM792 855h1.6v1.6h-1.6zM788.5 862h1.6v1.6h-1.6zM802.5 856.5h1.6v1.6h-1.6zM813.5 858h1.6v1.6h-1.6zM826 842h1.6v1.6h-1.6zM806.5 868h1.6v1.6h-1.6zM783 869h1.6v1.6h-1.6zM785.5 859.5h1.6v1.6h-1.6zM818.5 839.5h1.6v1.6h-1.6zM792.5 873h1.6v1.6h-1.6zM795 869h1.6v1.6h-1.6zM814 857.5h1.6v1.6h-1.6zM793 879h1.6v1.6h-1.6zM791 858h1.6v1.6h-1.6zM806.5 854h1.6v1.6h-1.6zM796 852h1.6v1.6h-1.6zM816 850h1.6v1.6h-1.6zM850 846.5h1.6v1.6h-1.6zM818 853h1.6v1.6h-1.6zM792.5 861h1.6v1.6h-1.6zM815.5 846.5h1.6v1.6h-1.6zM790.5 860h1.6v1.6h-1.6zM809 857.5h1.6v1.6h-1.6zM809.5 853.5h1.6v1.6h-1.6zM786 865.5h1.6v1.6h-1.6zM799 855.5h1.6v1.6h-1.6zM807.5 860.5h1.6v1.6h-1.6zM793.5 857h1.6v1.6h-1.6zM803 859h1.6v1.6h-1.6zM793 866h1.6v1.6h-1.6zM801.5 853h1.6v1.6h-1.6zM791 871h1.6v1.6h-1.6zM801.5 858.5h1.6v1.6h-1.6zM829.5 839.5h1.6v1.6h-1.6zM797 864h1.6v1.6h-1.6zM791 864h1.6v1.6h-1.6zM802 845.5h1.6v1.6h-1.6zM794.5 855.5h1.6v1.6h-1.6zM813 839.5h1.6v1.6h-1.6zM811.5 859.5h1.6v1.6h-1.6zM825.5 859h1.6v1.6h-1.6zM801.5 851.5h1.6v1.6h-1.6zM797.5 854.5h1.6v1.6h-1.6zM816.5 851.5h1.6v1.6h-1.6zM815 852.5h1.6v1.6h-1.6zM808.5 847.5h1.6v1.6h-1.6zM800.5 861.5h1.6v1.6h-1.6zM783.5 864.5h1.6v1.6h-1.6zM806 852.5h1.6v1.6h-1.6zM785.5 867h1.6v1.6h-1.6zM794.5 863.5h1.6v1.6h-1.6zM789 869h1.6v1.6h-1.6zM806 859.5h1.6v1.6h-1.6zM766 874h1.6v1.6h-1.6zM787.5 865.5h1.6v1.6h-1.6zM817 850h1.6v1.6h-1.6zM797 862h1.6v1.6h-1.6zM781.5 869.5h1.6v1.6h-1.6zM789.5 871h1.6v1.6h-1.6zM796 858.5h1.6v1.6h-1.6zM817 850.5h1.6v1.6h-1.6zM784 862.5h1.6v1.6h-1.6zM804 861h1.6v1.6h-1.6zM795 855h1.6v1.6h-1.6zM789.5 863h1.6v1.6h-1.6zM787 860.5h1.6v1.6h-1.6zM823.5 845.5h1.6v1.6h-1.6zM807 838.5h1.6v1.6h-1.6zM819 844.5h1.6v1.6h-1.6zM789.5 864.5h1.6v1.6h-1.6zM793.5 856h1.6v1.6h-1.6zM798 861.5h1.6v1.6h-1.6zM780.5 863.5h1.6v1.6h-1.6zM799.5 855h1.6v1.6h-1.6zM809 861h1.6v1.6h-1.6zM823.5 853.5h1.6v1.6h-1.6zM816.5 845.5h1.6v1.6h-1.6zM802 864.5h1.6v1.6h-1.6zM799 853.5h1.6v1.6h-1.6zM786 859.5h1.6v1.6h-1.6zM818 842.5h1.6v1.6h-1.6zM789 858h1.6v1.6h-1.6zM812.5 846h1.6v1.6h-1.6zM793.5 857h1.6v1.6h-1.6zM816 854h1.6v1.6h-1.6zM812.5 866h1.6v1.6h-1.6zM810.5 864h1.6v1.6h-1.6zM797 863h1.6v1.6h-1.6zM788 862h1.6v1.6h-1.6zM819.5 847h1.6v1.6h-1.6zM811 855h1.6v1.6h-1.6zM814.5 854.5h1.6v1.6h-1.6zM787.5 864h1.6v1.6h-1.6zM790.5 857.5h1.6v1.6h-1.6zM805.5 847h1.6v1.6h-1.6zM803 867h1.6v1.6h-1.6zM810.5 853h1.6v1.6h-1.6zM835 841.5h1.6v1.6h-1.6zM772.5 870.5h1.6v1.6h-1.6zM806 854.5h1.6v1.6h-1.6zM802 856h1.6v1.6h-1.6zM788.5 854.5h1.6v1.6h-1.6zM781 876h1.6v1.6h-1.6zM799 852h1.6v1.6h-1.6zM800 861.5h1.6v1.6h-1.6zM817 852h1.6v1.6h-1.6zM791 862.5h1.6v1.6h-1.6zM794 860.5h1.6v1.6h-1.6zM796.5 868h1.6v1.6h-1.6zM812.5 857h1.6v1.6h-1.6zM823 854h1.6v1.6h-1.6zM813 863.5h1.6v1.6h-1.6zM828.5 835h1.6v1.6h-1.6zM799.5 867h1.6v1.6h-1.6zM836.5 844.5h1.6v1.6h-1.6zM798 857.5h1.6v1.6h-1.6zM805 857h1.6v1.6h-1.6zM785.5 877h1.6v1.6h-1.6zM801 852.5h1.6v1.6h-1.6zM800.5 857h1.6v1.6h-1.6zM786 864h1.6v1.6h-1.6zM830.5 847h1.6v1.6h-1.6zM768 860h1.6v1.6h-1.6zM785 860h1.6v1.6h-1.6zM813 855.5h1.6v1.6h-1.6zM812.5 847h1.6v1.6h-1.6zM788 860h1.6v1.6h-1.6zM799 859.5h1.6v1.6h-1.6zM803.5 860h1.6v1.6h-1.6zM804.5 856.5h1.6v1.6h-1.6zM794 842.5h1.6v1.6h-1.6zM787 855h1.6v1.6h-1.6zM811.5 862.5h1.6v1.6h-1.6zM783 875h1.6v1.6h-1.6z" fill="#c2003a"/>
<path d="M333 912h1.6v1.6h-1.6zM696 858h1.6v1.6h-1.6zM590.5 891.5h1.6v1.6h-1.6zM488 881h1.6v1.6h-1.6zM371.5 911h1.6v1.6h-1.6zM637 864h1.6v1.6h-1.6zM679 876h1.6v1.6h-1.6zM247.5 917h1.6v1.6h-1.6zM491 880.5h1.6v1.6h-1.6zM621 885.5h1.6v1.6h-1.6zM694.5 877h1.6v1.6h-1.6zM571 894h1.6v1.6h-1.6zM660.5 879.5h1.6v1.6h-1.6zM260.5 915.5h1.6v1.6h-1.6zM536 875h1.6v1.6h-1.6zM540.5 898.5h1.6v1.6h-1.6zM517 900h1.6v1.6h-1.6zM671.5 878.5h1.6v1.6h-1.6zM487.5 902.5h1.6v1.6h-1.6zM542.5 875h1.6v1.6h-1.6zM547.5 898h1.6v1.6h-1.6zM274 914h1.6v1.6h-1.6zM643 862.5h1.6v1.6h-1.6zM616.5 865.5h1.6v1.6h-1.6zM603.5 888h1.6v1.6h-1.6zM606.5 866h1.6v1.6h-1.6zM278.5 914h1.6v1.6h-1.6zM569.5 893.5h1.6v1.6h-1.6zM515.5 901h1.6v1.6h-1.6zM614 865.5h1.6v1.6h-1.6zM297.5 912.5h1.6v1.6h-1.6zM243 916h1.6v1.6h-1.6zM622.5 885.5h1.6v1.6h-1.6zM497 881h1.6v1.6h-1.6zM565.5 871.5h1.6v1.6h-1.6zM517.5 899.5h1.6v1.6h-1.6zM542.5 874h1.6v1.6h-1.6zM457.5 905.5h1.6v1.6h-1.6zM371 910.5h1.6v1.6h-1.6zM647 863h1.6v1.6h-1.6zM676 861h1.6v1.6h-1.6zM535.5 875h1.6v1.6h-1.6zM698 857h1.6v1.6h-1.6zM561.5 871.5h1.6v1.6h-1.6zM637.5 863h1.6v1.6h-1.6zM543.5 876h1.6v1.6h-1.6zM547 873.5h1.6v1.6h-1.6zM634.5 864h1.6v1.6h-1.6zM531 875.5h1.6v1.6h-1.6zM525.5 878h1.6v1.6h-1.6zM571 871.5h1.6v1.6h-1.6zM643 862.5h1.6v1.6h-1.6zM655 861.5h1.6v1.6h-1.6zM536 875.5h1.6v1.6h-1.6zM678 860.5h1.6v1.6h-1.6zM592 869h1.6v1.6h-1.6zM589 869.5h1.6v1.6h-1.6zM593 868h1.6v1.6h-1.6zM605 866h1.6v1.6h-1.6zM612 865.5h1.6v1.6h-1.6zM562 871.5h1.6v1.6h-1.6zM563 873h1.6v1.6h-1.6zM578 870.5h1.6v1.6h-1.6zM601.5 868.5h1.6v1.6h-1.6zM632 863.5h1.6v1.6h-1.6zM566 872h1.6v1.6h-1.6zM648.5 862.5h1.6v1.6h-1.6zM534.5 875.5h1.6v1.6h-1.6zM539.5 874.5h1.6v1.6h-1.6zM646 862.5h1.6v1.6h-1.6zM551.5 874.5h1.6v1.6h-1.6zM640.5 862h1.6v1.6h-1.6zM619.5 864h1.6v1.6h-1.6zM623 866h1.6v1.6h-1.6zM536 874.5h1.6v1.6h-1.6zM607 868h1.6v1.6h-1.6zM672 861h1.6v1.6h-1.6zM620 865h1.6v1.6h-1.6zM616.5 865.5h1.6v1.6h-1.6zM526.5 877.5h1.6v1.6h-1.6zM572.5 870h1.6v1.6h-1.6zM678 860.5h1.6v1.6h-1.6zM675.5 860.5h1.6v1.6h-1.6zM661 859.5h1.6v1.6h-1.6zM560.5 871h1.6v1.6h-1.6zM739 855.5h1.6v1.6h-1.6zM729 855.5h1.6v1.6h-1.6zM781 838h1.6v1.6h-1.6zM704 856h1.6v1.6h-1.6zM733 854h1.6v1.6h-1.6zM788 834h1.6v1.6h-1.6zM781.5 838.5h1.6v1.6h-1.6zM794 828.5h1.6v1.6h-1.6zM779 840h1.6v1.6h-1.6zM758.5 849.5h1.6v1.6h-1.6zM766.5 847h1.6v1.6h-1.6zM779.5 841.5h1.6v1.6h-1.6zM760.5 848.5h1.6v1.6h-1.6zM742 854h1.6v1.6h-1.6zM718.5 855h1.6v1.6h-1.6zM721.5 855.5h1.6v1.6h-1.6zM722.5 854.5h1.6v1.6h-1.6zM785.5 833.5h1.6v1.6h-1.6zM773.5 844h1.6v1.6h-1.6zM730.5 854.5h1.6v1.6h-1.6z" fill="#ffd000"/>
<path d="M671 859.5h1.6v1.6h-1.6zM233.5 903.5h1.6v1.6h-1.6zM540.5 874.5h1.6v1.6h-1.6zM444 888h1.6v1.6h-1.6zM600.5 866.5h1.6v1.6h-1.6zM622 884.5h1.6v1.6h-1.6zM448.5 886h1.6v1.6h-1.6zM699 874h1.6v1.6h-1.6zM277.5 914h1.6v1.6h-1.6zM582 870h1.6v1.6h-1.6zM621.5 885h1.6v1.6h-1.6zM250.5 902h1.6v1.6h-1.6zM265.5 915.5h1.6v1.6h-1.6zM459.5 885.5h1.6v1.6h-1.6zM326.5 896.5h1.6v1.6h-1.6zM256.5 901.5h1.6v1.6h-1.6zM215.5 918h1.6v1.6h-1.6zM553 872h1.6v1.6h-1.6zM582 870h1.6v1.6h-1.6zM669 860h1.6v1.6h-1.6zM401.5 909.5h1.6v1.6h-1.6zM404 909.5h1.6v1.6h-1.6zM533.5 876.5h1.6v1.6h-1.6zM240 903.5h1.6v1.6h-1.6zM223 916h1.6v1.6h-1.6zM330 896.5h1.6v1.6h-1.6zM348 894.5h1.6v1.6h-1.6zM236 917.5h1.6v1.6h-1.6zM305.5 912.5h1.6v1.6h-1.6zM508.5 879h1.6v1.6h-1.6zM366 894h1.6v1.6h-1.6zM618 864.5h1.6v1.6h-1.6zM507.5 878h1.6v1.6h-1.6zM495.5 879.5h1.6v1.6h-1.6zM394 891.5h1.6v1.6h-1.6zM366 911.5h1.6v1.6h-1.6zM307 897.5h1.6v1.6h-1.6zM423.5 909.5h1.6v1.6h-1.6zM547.5 895.5h1.6v1.6h-1.6zM518 877h1.6v1.6h-1.6zM485 882h1.6v1.6h-1.6zM547.5 875h1.6v1.6h-1.6zM659 862h1.6v1.6h-1.6zM490 882h1.6v1.6h-1.6zM462 886h1.6v1.6h-1.6zM418.5 908.5h1.6v1.6h-1.6zM277 901h1.6v1.6h-1.6zM237 903.5h1.6v1.6h-1.6zM650 880.5h1.6v1.6h-1.6zM680.5 858h1.6v1.6h-1.6zM249 903h1.6v1.6h-1.6zM686 858h1.6v1.6h-1.6zM681 858h1.6v1.6h-1.6zM618.5 865h1.6v1.6h-1.6zM455.5 886h1.6v1.6h-1.6zM496.5 881h1.6v1.6h-1.6zM398.5 892h1.6v1.6h-1.6zM364.5 909h1.6v1.6h-1.6zM604 886.5h1.6v1.6h-1.6zM642 881h1.6v1.6h-1.6zM378.5 909.5h1.6v1.6h-1.6zM322.5 896h1.6v1.6h-1.6zM517 878h1.6v1.6h-1.6zM247.5 917h1.6v1.6h-1.6zM259.5 902h1.6v1.6h-1.6zM593 868.5h1.6v1.6h-1.6zM524.5 902h1.6v1.6h-1.6zM528.5 875.5h1.6v1.6h-1.6zM681 858h1.6v1.6h-1.6zM256.5 914.5h1.6v1.6h-1.6zM388 909h1.6v1.6h-1.6zM673 859.5h1.6v1.6h-1.6zM250.5 903h1.6v1.6h-1.6zM628.5 883.5h1.6v1.6h-1.6zM237 903h1.6v1.6h-1.6zM485 882.5h1.6v1.6h-1.6zM354 894h1.6v1.6h-1.6zM625 863.5h1.6v1.6h-1.6zM576.5 869.5h1.6v1.6h-1.6zM479.5 882.5h1.6v1.6h-1.6zM616 866h1.6v1.6h-1.6zM499.5 880.5h1.6v1.6h-1.6zM562.5 871.5h1.6v1.6h-1.6zM381.5 892.5h1.6v1.6h-1.6zM619 884.5h1.6v1.6h-1.6zM674.5 860h1.6v1.6h-1.6zM446.5 888.5h1.6v1.6h-1.6zM384.5 892.5h1.6v1.6h-1.6zM361.5 894h1.6v1.6h-1.6zM216 905h1.6v1.6h-1.6zM588.5 890.5h1.6v1.6h-1.6zM455 907h1.6v1.6h-1.6zM665 877.5h1.6v1.6h-1.6zM330.5 912h1.6v1.6h-1.6zM294.5 915h1.6v1.6h-1.6zM671 860.5h1.6v1.6h-1.6zM569.5 872h1.6v1.6h-1.6zM656.5 861h1.6v1.6h-1.6zM675.5 859h1.6v1.6h-1.6zM563.5 873h1.6v1.6h-1.6zM551.5 872h1.6v1.6h-1.6zM621.5 863h1.6v1.6h-1.6zM548 875h1.6v1.6h-1.6zM545.5 873h1.6v1.6h-1.6zM617 865h1.6v1.6h-1.6zM656 862.5h1.6v1.6h-1.6zM632.5 864.5h1.6v1.6h-1.6zM653 860.5h1.6v1.6h-1.6zM615 866h1.6v1.6h-1.6zM599.5 866.5h1.6v1.6h-1.6zM603 867.5h1.6v1.6h-1.6zM539.5 874h1.6v1.6h-1.6zM683.5 859h1.6v1.6h-1.6zM678.5 859h1.6v1.6h-1.6zM558 874h1.6v1.6h-1.6zM673 859h1.6v1.6h-1.6zM660.5 860h1.6v1.6h-1.6zM643.5 861.5h1.6v1.6h-1.6zM547 873h1.6v1.6h-1.6zM679 857.5h1.6v1.6h-1.6zM625.5 865h1.6v1.6h-1.6zM527 876.5h1.6v1.6h-1.6zM623.5 864h1.6v1.6h-1.6zM528.5 875h1.6v1.6h-1.6zM694.5 857h1.6v1.6h-1.6zM552 872.5h1.6v1.6h-1.6zM634 863.5h1.6v1.6h-1.6zM615.5 864.5h1.6v1.6h-1.6zM583 870.5h1.6v1.6h-1.6zM651.5 862.5h1.6v1.6h-1.6zM522.5 877.5h1.6v1.6h-1.6zM568 872h1.6v1.6h-1.6zM678.5 858h1.6v1.6h-1.6zM645 861.5h1.6v1.6h-1.6zM668.5 859.5h1.6v1.6h-1.6zM672 859h1.6v1.6h-1.6zM619 865.5h1.6v1.6h-1.6zM533 874.5h1.6v1.6h-1.6zM614 865.5h1.6v1.6h-1.6zM552 872h1.6v1.6h-1.6zM572.5 871h1.6v1.6h-1.6zM601 867h1.6v1.6h-1.6zM656.5 862.5h1.6v1.6h-1.6zM586 869h1.6v1.6h-1.6zM565.5 871.5h1.6v1.6h-1.6zM622.5 866h1.6v1.6h-1.6zM536.5 875h1.6v1.6h-1.6zM631 864h1.6v1.6h-1.6zM649 862.5h1.6v1.6h-1.6zM583.5 869.5h1.6v1.6h-1.6zM531.5 876.5h1.6v1.6h-1.6zM614.5 865.5h1.6v1.6h-1.6zM608.5 866h1.6v1.6h-1.6zM541.5 875.5h1.6v1.6h-1.6zM667 859h1.6v1.6h-1.6zM577.5 871h1.6v1.6h-1.6zM642.5 863h1.6v1.6h-1.6zM575 871.5h1.6v1.6h-1.6zM638 862.5h1.6v1.6h-1.6zM586 868h1.6v1.6h-1.6zM602 866.5h1.6v1.6h-1.6zM651.5 863.5h1.6v1.6h-1.6zM593 867.5h1.6v1.6h-1.6zM674.5 860.5h1.6v1.6h-1.6zM552.5 872h1.6v1.6h-1.6zM664.5 860.5h1.6v1.6h-1.6zM546 872.5h1.6v1.6h-1.6zM613 866h1.6v1.6h-1.6zM643.5 863.5h1.6v1.6h-1.6zM686.5 859.5h1.6v1.6h-1.6zM670.5 860.5h1.6v1.6h-1.6zM677.5 858.5h1.6v1.6h-1.6zM575.5 871h1.6v1.6h-1.6zM547.5 873h1.6v1.6h-1.6zM715.5 856.5h1.6v1.6h-1.6zM720 856.5h1.6v1.6h-1.6zM743 853.5h1.6v1.6h-1.6zM704 856.5h1.6v1.6h-1.6zM799.5 822h1.6v1.6h-1.6zM789 831h1.6v1.6h-1.6zM748.5 852h1.6v1.6h-1.6zM720 856h1.6v1.6h-1.6zM758 851h1.6v1.6h-1.6zM796.5 826.5h1.6v1.6h-1.6zM709.5 856h1.6v1.6h-1.6zM759.5 850h1.6v1.6h-1.6zM707.5 855.5h1.6v1.6h-1.6zM736 854h1.6v1.6h-1.6zM730.5 855.5h1.6v1.6h-1.6zM747 854.5h1.6v1.6h-1.6zM750.5 853h1.6v1.6h-1.6zM728.5 855h1.6v1.6h-1.6zM791 830h1.6v1.6h-1.6zM789 833.5h1.6v1.6h-1.6zM749 852h1.6v1.6h-1.6zM769 848h1.6v1.6h-1.6zM715.5 856.5h1.6v1.6h-1.6zM742.5 853.5h1.6v1.6h-1.6zM729 854h1.6v1.6h-1.6zM766.5 848.5h1.6v1.6h-1.6zM759.5 849.5h1.6v1.6h-1.6zM798.5 825.5h1.6v1.6h-1.6zM703 855.5h1.6v1.6h-1.6zM773.5 844.5h1.6v1.6h-1.6zM780 839h1.6v1.6h-1.6zM771 848h1.6v1.6h-1.6zM752.5 852.5h1.6v1.6h-1.6zM775 843h1.6v1.6h-1.6zM767.5 847h1.6v1.6h-1.6zM790.5 830.5h1.6v1.6h-1.6zM775 843.5h1.6v1.6h-1.6zM775 842.5h1.6v1.6h-1.6zM720 856h1.6v1.6h-1.6zM788 833h1.6v1.6h-1.6zM782.5 837.5h1.6v1.6h-1.6zM714.5 856h1.6v1.6h-1.6zM735.5 853.5h1.6v1.6h-1.6zM766 847.5h1.6v1.6h-1.6zM733.5 855.5h1.6v1.6h-1.6zM731 855.5h1.6v1.6h-1.6zM752.5 853h1.6v1.6h-1.6zM794 827.5h1.6v1.6h-1.6z" fill="#ffa000"/>
<path d="M619.5 864h1.6v1.6h-1.6zM494 882h1.6v1.6h-1.6zM505.5 879h1.6v1.6h-1.6zM576.5 869.5h1.6v1.6h-1.6zM540.5 873.5h1.6v1.6h-1.6zM546 874h1.6v1.6h-1.6zM652.5 862h1.6v1.6h-1.6zM549 872.5h1.6v1.6h-1.6zM600.5 866h1.6v1.6h-1.6zM628 865.5h1.6v1.6h-1.6zM649.5 863.5h1.6v1.6h-1.6zM616.5 864h1.6v1.6h-1.6zM686 859h1.6v1.6h-1.6zM593 867.5h1.6v1.6h-1.6zM677 860.5h1.6v1.6h-1.6zM594.5 867.5h1.6v1.6h-1.6zM584.5 869.5h1.6v1.6h-1.6zM638.5 862.5h1.6v1.6h-1.6zM657.5 860.5h1.6v1.6h-1.6zM620.5 865h1.6v1.6h-1.6zM538 874h1.6v1.6h-1.6zM620 866h1.6v1.6h-1.6zM665 859h1.6v1.6h-1.6zM563.5 872.5h1.6v1.6h-1.6zM656.5 861h1.6v1.6h-1.6zM606 865h1.6v1.6h-1.6zM692 858.5h1.6v1.6h-1.6zM677 860h1.6v1.6h-1.6zM598.5 868.5h1.6v1.6h-1.6zM695.5 858.5h1.6v1.6h-1.6zM555.5 874h1.6v1.6h-1.6zM637.5 863h1.6v1.6h-1.6zM644.5 861h1.6v1.6h-1.6zM563 872h1.6v1.6h-1.6zM584 870.5h1.6v1.6h-1.6zM630.5 863.5h1.6v1.6h-1.6zM686.5 857.5h1.6v1.6h-1.6zM683.5 858.5h1.6v1.6h-1.6zM700 858h1.6v1.6h-1.6zM614.5 865.5h1.6v1.6h-1.6zM542 875.5h1.6v1.6h-1.6zM587.5 869h1.6v1.6h-1.6zM575 870h1.6v1.6h-1.6zM556.5 873h1.6v1.6h-1.6zM597.5 867.5h1.6v1.6h-1.6zM686.5 859h1.6v1.6h-1.6zM617.5 864h1.6v1.6h-1.6zM530 875.5h1.6v1.6h-1.6zM553.5 873h1.6v1.6h-1.6zM535.5 875.5h1.6v1.6h-1.6zM676 858.5h1.6v1.6h-1.6zM593.5 868h1.6v1.6h-1.6zM609.5 865.5h1.6v1.6h-1.6zM857 812h1.6v1.6h-1.6zM843.5 797.5h1.6v1.6h-1.6zM857 707.5h1.6v1.6h-1.6zM857 796h1.6v1.6h-1.6zM852.5 774h1.6v1.6h-1.6zM861 724h1.6v1.6h-1.6zM842.5 752.5h1.6v1.6h-1.6zM857.5 758h1.6v1.6h-1.6zM861.5 773h1.6v1.6h-1.6zM840 745.5h1.6v1.6h-1.6zM851 743.5h1.6v1.6h-1.6zM838 793h1.6v1.6h-1.6zM854.5 710h1.6v1.6h-1.6zM862 750.5h1.6v1.6h-1.6zM833 774h1.6v1.6h-1.6zM850 832h1.6v1.6h-1.6zM841 729h1.6v1.6h-1.6zM840.5 686h1.6v1.6h-1.6zM847.5 750h1.6v1.6h-1.6zM855 733.5h1.6v1.6h-1.6zM844.5 715.5h1.6v1.6h-1.6zM848.5 766h1.6v1.6h-1.6zM834.5 750h1.6v1.6h-1.6zM843.5 710.5h1.6v1.6h-1.6zM848.5 761.5h1.6v1.6h-1.6zM849 797h1.6v1.6h-1.6zM843 713.5h1.6v1.6h-1.6zM864 698.5h1.6v1.6h-1.6zM839.5 781h1.6v1.6h-1.6zM854.5 777h1.6v1.6h-1.6zM863.5 734.5h1.6v1.6h-1.6zM841 801.5h1.6v1.6h-1.6zM845 799.5h1.6v1.6h-1.6zM854 717.5h1.6v1.6h-1.6zM856.5 764h1.6v1.6h-1.6zM837 800h1.6v1.6h-1.6zM856.5 809h1.6v1.6h-1.6zM850.5 837.5h1.6v1.6h-1.6zM842 765.5h1.6v1.6h-1.6zM836 787h1.6v1.6h-1.6zM852 774.5h1.6v1.6h-1.6zM859 786h1.6v1.6h-1.6zM848.5 749h1.6v1.6h-1.6zM845 776h1.6v1.6h-1.6zM842.5 725h1.6v1.6h-1.6zM841 821.5h1.6v1.6h-1.6zM846.5 798h1.6v1.6h-1.6zM851 695h1.6v1.6h-1.6zM838.5 786.5h1.6v1.6h-1.6zM842.5 663.5h1.6v1.6h-1.6zM845.5 831.5h1.6v1.6h-1.6zM855.5 705h1.6v1.6h-1.6zM841 742.5h1.6v1.6h-1.6zM845.5 673h1.6v1.6h-1.6zM846 753h1.6v1.6h-1.6zM853.5 795h1.6v1.6h-1.6zM847 796h1.6v1.6h-1.6zM847 822.5h1.6v1.6h-1.6zM844 734.5h1.6v1.6h-1.6zM883.5 758h1.6v1.6h-1.6zM835.5 789h1.6v1.6h-1.6zM852 791h1.6v1.6h-1.6zM869 765.5h1.6v1.6h-1.6zM852 778h1.6v1.6h-1.6zM851 789.5h1.6v1.6h-1.6zM840 794h1.6v1.6h-1.6zM848.5 775h1.6v1.6h-1.6zM860 777.5h1.6v1.6h-1.6zM850 777.5h1.6v1.6h-1.6zM844 778.5h1.6v1.6h-1.6zM890.5 763h1.6v1.6h-1.6zM854 784.5h1.6v1.6h-1.6zM872 758h1.6v1.6h-1.6zM866 761.5h1.6v1.6h-1.6zM888 761h1.6v1.6h-1.6zM851.5 796h1.6v1.6h-1.6zM863 778h1.6v1.6h-1.6zM855.5 774.5h1.6v1.6h-1.6zM855.5 773.5h1.6v1.6h-1.6zM857.5 772h1.6v1.6h-1.6zM880.5 778h1.6v1.6h-1.6zM849 773.5h1.6v1.6h-1.6zM848.5 794.5h1.6v1.6h-1.6zM868.5 776h1.6v1.6h-1.6zM845 797.5h1.6v1.6h-1.6zM868 769.5h1.6v1.6h-1.6zM841.5 790h1.6v1.6h-1.6zM863 787.5h1.6v1.6h-1.6zM880 755h1.6v1.6h-1.6zM877.5 758.5h1.6v1.6h-1.6zM848.5 768h1.6v1.6h-1.6zM866 790.5h1.6v1.6h-1.6zM861.5 772h1.6v1.6h-1.6zM848.5 783h1.6v1.6h-1.6zM849.5 765h1.6v1.6h-1.6zM878.5 774h1.6v1.6h-1.6zM859 775.5h1.6v1.6h-1.6zM867 761h1.6v1.6h-1.6zM872.5 768h1.6v1.6h-1.6zM876 764h1.6v1.6h-1.6zM870 776h1.6v1.6h-1.6zM848.5 775.5h1.6v1.6h-1.6zM829 783h1.6v1.6h-1.6zM850 784h1.6v1.6h-1.6zM838.5 767.5h1.6v1.6h-1.6zM856 759h1.6v1.6h-1.6zM862.5 774.5h1.6v1.6h-1.6zM860.5 784h1.6v1.6h-1.6zM859 772.5h1.6v1.6h-1.6zM857 802.5h1.6v1.6h-1.6zM881 776h1.6v1.6h-1.6zM890.5 747.5h1.6v1.6h-1.6zM843 790h1.6v1.6h-1.6zM836.5 792h1.6v1.6h-1.6zM814 791h1.6v1.6h-1.6zM855.5 772.5h1.6v1.6h-1.6zM864 765h1.6v1.6h-1.6zM852.5 800h1.6v1.6h-1.6zM869.5 779h1.6v1.6h-1.6zM855.5 761h1.6v1.6h-1.6zM885 764.5h1.6v1.6h-1.6zM873 763.5h1.6v1.6h-1.6zM831.5 775h1.6v1.6h-1.6zM854 774h1.6v1.6h-1.6zM868 758.5h1.6v1.6h-1.6zM854.5 767h1.6v1.6h-1.6zM897.5 758h1.6v1.6h-1.6zM843.5 778.5h1.6v1.6h-1.6zM840 801.5h1.6v1.6h-1.6z" fill="#8e5fae"/>
<path d="M948.5 806.5h1.4v1.4h-1.4zM954.5 809h1.4v1.4h-1.4zM1094.5 854.5h1.4v1.4h-1.4zM934 796.5h1.4v1.4h-1.4zM1094.5 854h1.4v1.4h-1.4zM1066 847.5h1.4v1.4h-1.4zM1043.5 842h1.4v1.4h-1.4zM1080 851h1.4v1.4h-1.4zM980 818h1.4v1.4h-1.4zM1073.5 849h1.4v1.4h-1.4zM1052 844.5h1.4v1.4h-1.4zM1064.5 847h1.4v1.4h-1.4zM928.5 794h1.4v1.4h-1.4zM953.5 809h1.4v1.4h-1.4zM1031 836h1.4v1.4h-1.4zM1063.5 847.5h1.4v1.4h-1.4zM1052 845h1.4v1.4h-1.4zM934.5 797.5h1.4v1.4h-1.4zM1006 828.5h1.4v1.4h-1.4zM1060.5 847h1.4v1.4h-1.4zM1034 838h1.4v1.4h-1.4zM936 798h1.4v1.4h-1.4zM1047 842.5h1.4v1.4h-1.4zM1005 828h1.4v1.4h-1.4zM1044.5 841.5h1.4v1.4h-1.4zM927 792h1.4v1.4h-1.4zM1068 848h1.4v1.4h-1.4zM967 813.5h1.4v1.4h-1.4zM1079 851.5h1.4v1.4h-1.4zM1052.5 844.5h1.4v1.4h-1.4zM942.5 803h1.4v1.4h-1.4zM937.5 800h1.4v1.4h-1.4zM1054.5 845h1.4v1.4h-1.4zM1030 836h1.4v1.4h-1.4zM1087.5 852.5h1.4v1.4h-1.4zM943 802h1.4v1.4h-1.4zM952.5 808h1.4v1.4h-1.4zM1011 829.5h1.4v1.4h-1.4zM957 809.5h1.4v1.4h-1.4zM1077 850.5h1.4v1.4h-1.4zM950 807h1.4v1.4h-1.4zM1015 831.5h1.4v1.4h-1.4zM1096 854.5h1.4v1.4h-1.4zM972.5 815.5h1.4v1.4h-1.4zM1010.5 830.5h1.4v1.4h-1.4zM953.5 809h1.4v1.4h-1.4zM950 807h1.4v1.4h-1.4zM1038 839.5h1.4v1.4h-1.4zM1022 833.5h1.4v1.4h-1.4zM1082 851h1.4v1.4h-1.4zM1011.5 830.5h1.4v1.4h-1.4zM928 793h1.4v1.4h-1.4zM988.5 821.5h1.4v1.4h-1.4zM953 808h1.4v1.4h-1.4zM950.5 808h1.4v1.4h-1.4zM1001.5 827.5h1.4v1.4h-1.4zM1090.5 853.5h1.4v1.4h-1.4zM1069.5 848.5h1.4v1.4h-1.4zM1152.5 866h1.4v1.4h-1.4zM1069.5 849h1.4v1.4h-1.4zM1176 869h1.4v1.4h-1.4zM1274.5 855.5h1.4v1.4h-1.4zM1237 868h1.4v1.4h-1.4zM1168.5 867h1.4v1.4h-1.4zM1212 870h1.4v1.4h-1.4zM1286.5 850.5h1.4v1.4h-1.4zM1184 869.5h1.4v1.4h-1.4zM1180 868.5h1.4v1.4h-1.4zM1159.5 866h1.4v1.4h-1.4zM1290.5 848.5h1.4v1.4h-1.4zM1124.5 860h1.4v1.4h-1.4zM1249 865.5h1.4v1.4h-1.4zM1225 869h1.4v1.4h-1.4zM1229 869h1.4v1.4h-1.4zM1083.5 852h1.4v1.4h-1.4zM1126.5 861h1.4v1.4h-1.4zM1244.5 866h1.4v1.4h-1.4zM1254.5 864.5h1.4v1.4h-1.4zM1297 843.5h1.4v1.4h-1.4zM1266 860h1.4v1.4h-1.4zM1111.5 858h1.4v1.4h-1.4zM1079.5 851.5h1.4v1.4h-1.4zM1253.5 864.5h1.4v1.4h-1.4zM1098.5 855.5h1.4v1.4h-1.4zM1090 854h1.4v1.4h-1.4zM1148.5 864.5h1.4v1.4h-1.4zM1227 868.5h1.4v1.4h-1.4zM1107.5 857h1.4v1.4h-1.4zM1221 869.5h1.4v1.4h-1.4zM1105.5 857.5h1.4v1.4h-1.4zM1292.5 847.5h1.4v1.4h-1.4zM1283.5 852h1.4v1.4h-1.4zM1183.5 869.5h1.4v1.4h-1.4zM1298.5 842h1.4v1.4h-1.4zM1098.5 856h1.4v1.4h-1.4zM1245.5 866h1.4v1.4h-1.4zM1201 871.5h1.4v1.4h-1.4zM1215.5 870.5h1.4v1.4h-1.4zM1140.5 864h1.4v1.4h-1.4zM1140.5 864h1.4v1.4h-1.4zM1090.5 853.5h1.4v1.4h-1.4zM1104.5 856.5h1.4v1.4h-1.4zM1087.5 853.5h1.4v1.4h-1.4zM1080 851.5h1.4v1.4h-1.4zM1136.5 862.5h1.4v1.4h-1.4zM1267.5 858.5h1.4v1.4h-1.4zM1248.5 865.5h1.4v1.4h-1.4zM1181 869h1.4v1.4h-1.4zM1126 860.5h1.4v1.4h-1.4zM1120 859.5h1.4v1.4h-1.4zM1235 867h1.4v1.4h-1.4zM1296 844.5h1.4v1.4h-1.4zM1222.5 869h1.4v1.4h-1.4zM1146.5 865h1.4v1.4h-1.4zM1173.5 868h1.4v1.4h-1.4zM1097.5 856h1.4v1.4h-1.4zM1165.5 867.5h1.4v1.4h-1.4zM1140 863h1.4v1.4h-1.4zM1232 868.5h1.4v1.4h-1.4zM1116 859h1.4v1.4h-1.4zM1271.5 857.5h1.4v1.4h-1.4zM1138 863h1.4v1.4h-1.4zM1172.5 868.5h1.4v1.4h-1.4zM1151.5 866h1.4v1.4h-1.4zM1295 845h1.4v1.4h-1.4zM1134.5 862h1.4v1.4h-1.4zM1429.5 730.5h1.4v1.4h-1.4zM1425.5 732.5h1.4v1.4h-1.4zM1428.5 730h1.4v1.4h-1.4zM1428 732h1.4v1.4h-1.4zM1434.5 728.5h1.4v1.4h-1.4zM1435.5 727.5h1.4v1.4h-1.4zM1439.5 726.5h1.4v1.4h-1.4z" fill="#ffd000"/>
<path d="M1027.5 836h1.4v1.4h-1.4zM1065 848h1.4v1.4h-1.4zM1026 835.5h1.4v1.4h-1.4zM1043.5 841h1.4v1.4h-1.4zM953.5 809.5h1.4v1.4h-1.4zM959.5 811.5h1.4v1.4h-1.4zM1056.5 845h1.4v1.4h-1.4zM979.5 819h1.4v1.4h-1.4zM1064 847h1.4v1.4h-1.4zM1069.5 848.5h1.4v1.4h-1.4zM963.5 813h1.4v1.4h-1.4zM948 806.5h1.4v1.4h-1.4zM1003.5 827h1.4v1.4h-1.4zM1060 846.5h1.4v1.4h-1.4zM1033.5 838.5h1.4v1.4h-1.4zM1001.5 827.5h1.4v1.4h-1.4zM953.5 808.5h1.4v1.4h-1.4zM954.5 809.5h1.4v1.4h-1.4zM970.5 814.5h1.4v1.4h-1.4zM1065.5 848h1.4v1.4h-1.4zM1064 846.5h1.4v1.4h-1.4zM1090.5 853.5h1.4v1.4h-1.4zM959.5 811h1.4v1.4h-1.4zM979.5 818.5h1.4v1.4h-1.4zM979 818h1.4v1.4h-1.4zM1039.5 840h1.4v1.4h-1.4zM963.5 811.5h1.4v1.4h-1.4zM1042 841.5h1.4v1.4h-1.4zM1077 849.5h1.4v1.4h-1.4zM1099.5 856.5h1.4v1.4h-1.4zM1013.5 831.5h1.4v1.4h-1.4zM1072 848.5h1.4v1.4h-1.4zM966 813.5h1.4v1.4h-1.4zM1053.5 845h1.4v1.4h-1.4zM932.5 795.5h1.4v1.4h-1.4zM987 821h1.4v1.4h-1.4zM1065 848h1.4v1.4h-1.4zM1033 837h1.4v1.4h-1.4zM973.5 816.5h1.4v1.4h-1.4zM1437.5 727.5h1.4v1.4h-1.4zM1436.5 727.5h1.4v1.4h-1.4zM1436.5 728h1.4v1.4h-1.4zM1421 734h1.4v1.4h-1.4zM1422.5 734h1.4v1.4h-1.4zM1435 727.5h1.4v1.4h-1.4zM1430 730.5h1.4v1.4h-1.4zM1427.5 732.5h1.4v1.4h-1.4zM1424 733.5h1.4v1.4h-1.4zM1425 733h1.4v1.4h-1.4zM1427.5 730.5h1.4v1.4h-1.4zM1430 730h1.4v1.4h-1.4zM1420.5 733.5h1.4v1.4h-1.4z" fill="#ffa000"/>
<path d="M969.5 814.5h1.4v1.4h-1.4zM1075.5 849.5h1.4v1.4h-1.4zM975.5 816.5h1.4v1.4h-1.4zM998.5 825.5h1.4v1.4h-1.4zM1003 827.5h1.4v1.4h-1.4zM1082.5 851h1.4v1.4h-1.4zM1001.5 826.5h1.4v1.4h-1.4zM1025 835.5h1.4v1.4h-1.4zM1037.5 839.5h1.4v1.4h-1.4zM1034 838h1.4v1.4h-1.4zM984.5 820h1.4v1.4h-1.4zM1006.5 829h1.4v1.4h-1.4zM1096 855.5h1.4v1.4h-1.4zM1020 833.5h1.4v1.4h-1.4zM1082.5 852h1.4v1.4h-1.4zM991.5 823h1.4v1.4h-1.4zM947.5 806h1.4v1.4h-1.4zM1079 851.5h1.4v1.4h-1.4zM1007 829h1.4v1.4h-1.4zM989.5 821.5h1.4v1.4h-1.4zM1071 848.5h1.4v1.4h-1.4zM1048.5 842.5h1.4v1.4h-1.4zM989.5 822h1.4v1.4h-1.4zM1047 843h1.4v1.4h-1.4zM955.5 809h1.4v1.4h-1.4zM1094.5 855h1.4v1.4h-1.4zM938 800h1.4v1.4h-1.4zM998 825.5h1.4v1.4h-1.4zM983.5 819.5h1.4v1.4h-1.4zM1047 843h1.4v1.4h-1.4zM985 820.5h1.4v1.4h-1.4zM992.5 823h1.4v1.4h-1.4zM941.5 801.5h1.4v1.4h-1.4zM949 807h1.4v1.4h-1.4zM944 803h1.4v1.4h-1.4zM1056.5 845.5h1.4v1.4h-1.4zM1032.5 837h1.4v1.4h-1.4zM1097.5 854.5h1.4v1.4h-1.4zM1060 845.5h1.4v1.4h-1.4zM994.5 824h1.4v1.4h-1.4zM976.5 817.5h1.4v1.4h-1.4zM951.5 807h1.4v1.4h-1.4zM1062.5 846.5h1.4v1.4h-1.4zM1045 842h1.4v1.4h-1.4zM969 814.5h1.4v1.4h-1.4zM1061.5 846h1.4v1.4h-1.4zM940.5 800.5h1.4v1.4h-1.4zM931.5 795h1.4v1.4h-1.4zM977.5 818.5h1.4v1.4h-1.4zM930.5 794.5h1.4v1.4h-1.4zM1018 832h1.4v1.4h-1.4zM1049 843.5h1.4v1.4h-1.4zM1007.5 828h1.4v1.4h-1.4zM1058 846h1.4v1.4h-1.4zM1053.5 845h1.4v1.4h-1.4zM1085 852.5h1.4v1.4h-1.4zM1067.5 847.5h1.4v1.4h-1.4zM980 818h1.4v1.4h-1.4zM1069 848h1.4v1.4h-1.4zM1082.5 851h1.4v1.4h-1.4zM965 813h1.4v1.4h-1.4zM1091 854h1.4v1.4h-1.4zM994 824.5h1.4v1.4h-1.4zM927 792.5h1.4v1.4h-1.4zM1098.5 855.5h1.4v1.4h-1.4zM1067.5 848.5h1.4v1.4h-1.4zM991.5 822.5h1.4v1.4h-1.4zM985.5 820h1.4v1.4h-1.4zM1062 846h1.4v1.4h-1.4zM1083 852.5h1.4v1.4h-1.4zM980.5 819h1.4v1.4h-1.4zM1009.5 829.5h1.4v1.4h-1.4zM961.5 812h1.4v1.4h-1.4zM1028.5 836h1.4v1.4h-1.4zM1000 827h1.4v1.4h-1.4zM1068.5 848h1.4v1.4h-1.4zM1087.5 853.5h1.4v1.4h-1.4zM1098.5 855.5h1.4v1.4h-1.4zM1100 856h1.4v1.4h-1.4zM961.5 812.5h1.4v1.4h-1.4zM1014.5 830.5h1.4v1.4h-1.4zM999 826h1.4v1.4h-1.4zM1030.5 837.5h1.4v1.4h-1.4zM1060.5 846h1.4v1.4h-1.4zM1056 845.5h1.4v1.4h-1.4zM965.5 812.5h1.4v1.4h-1.4zM1030.5 836h1.4v1.4h-1.4zM1056 845h1.4v1.4h-1.4zM950 807h1.4v1.4h-1.4zM1099.5 856h1.4v1.4h-1.4zM987.5 821.5h1.4v1.4h-1.4zM1008 829.5h1.4v1.4h-1.4zM1007.5 829h1.4v1.4h-1.4zM1094 854.5h1.4v1.4h-1.4zM1091.5 854h1.4v1.4h-1.4zM1091 854.5h1.4v1.4h-1.4zM1043.5 841.5h1.4v1.4h-1.4zM1028.5 836h1.4v1.4h-1.4zM1039 840h1.4v1.4h-1.4zM986 821h1.4v1.4h-1.4zM1037 839h1.4v1.4h-1.4zM969.5 814.5h1.4v1.4h-1.4zM938.5 800h1.4v1.4h-1.4zM1060.5 847h1.4v1.4h-1.4zM1431 731h1.4v1.4h-1.4zM1423.5 733h1.4v1.4h-1.4zM1438.5 727h1.4v1.4h-1.4zM1437 727h1.4v1.4h-1.4zM1424 734h1.4v1.4h-1.4z" fill="#8e5fae"/>
<path d="M1241 866.5h1.4v1.4h-1.4zM1069 849h1.4v1.4h-1.4zM1211 871h1.4v1.4h-1.4zM1085.5 853h1.4v1.4h-1.4zM1221.5 868.5h1.4v1.4h-1.4zM1089 853h1.4v1.4h-1.4zM1154 866h1.4v1.4h-1.4zM1229.5 868.5h1.4v1.4h-1.4zM1209.5 870.5h1.4v1.4h-1.4zM1191.5 870h1.4v1.4h-1.4zM1152 865.5h1.4v1.4h-1.4zM1183.5 870h1.4v1.4h-1.4zM1151.5 865h1.4v1.4h-1.4zM1098.5 855.5h1.4v1.4h-1.4zM1123 860h1.4v1.4h-1.4zM1197.5 871h1.4v1.4h-1.4zM1266 859h1.4v1.4h-1.4zM1283.5 852h1.4v1.4h-1.4zM1162.5 867.5h1.4v1.4h-1.4zM1277.5 854.5h1.4v1.4h-1.4zM1246.5 866.5h1.4v1.4h-1.4zM1270.5 857.5h1.4v1.4h-1.4zM1166 867h1.4v1.4h-1.4zM1079.5 851h1.4v1.4h-1.4zM1132 862.5h1.4v1.4h-1.4zM1286.5 850h1.4v1.4h-1.4zM1242 866.5h1.4v1.4h-1.4zM1156.5 865.5h1.4v1.4h-1.4zM1290 850h1.4v1.4h-1.4zM1285 851.5h1.4v1.4h-1.4zM1068 848.5h1.4v1.4h-1.4zM1079.5 851h1.4v1.4h-1.4zM1104.5 857.5h1.4v1.4h-1.4zM1215 869.5h1.4v1.4h-1.4zM1140.5 864h1.4v1.4h-1.4zM1173.5 868h1.4v1.4h-1.4zM1122.5 861h1.4v1.4h-1.4zM1277.5 854.5h1.4v1.4h-1.4zM1211.5 870.5h1.4v1.4h-1.4zM1111 858.5h1.4v1.4h-1.4zM1152 865.5h1.4v1.4h-1.4zM1257.5 862.5h1.4v1.4h-1.4zM1136.5 862.5h1.4v1.4h-1.4zM1275.5 855.5h1.4v1.4h-1.4zM1195 871.5h1.4v1.4h-1.4zM1243 866.5h1.4v1.4h-1.4zM1142.5 864.5h1.4v1.4h-1.4zM1290.5 848.5h1.4v1.4h-1.4zM1179.5 869h1.4v1.4h-1.4zM1152.5 865.5h1.4v1.4h-1.4zM1245 866.5h1.4v1.4h-1.4zM1118.5 859h1.4v1.4h-1.4zM1161 867h1.4v1.4h-1.4zM1109.5 858h1.4v1.4h-1.4zM1241 867h1.4v1.4h-1.4zM1224 868.5h1.4v1.4h-1.4zM1223 869h1.4v1.4h-1.4zM1124 860h1.4v1.4h-1.4zM1226.5 868.5h1.4v1.4h-1.4zM1276.5 855h1.4v1.4h-1.4zM1063 847.5h1.4v1.4h-1.4zM1277.5 855h1.4v1.4h-1.4zM1183.5 869.5h1.4v1.4h-1.4zM1157 866h1.4v1.4h-1.4zM1203 871.5h1.4v1.4h-1.4zM1086.5 852.5h1.4v1.4h-1.4zM1065.5 848h1.4v1.4h-1.4zM1152.5 865.5h1.4v1.4h-1.4zM1192.5 870.5h1.4v1.4h-1.4zM1121 860.5h1.4v1.4h-1.4zM1096.5 855.5h1.4v1.4h-1.4zM1083 852h1.4v1.4h-1.4zM1190.5 871h1.4v1.4h-1.4zM1116.5 859.5h1.4v1.4h-1.4zM1118 859h1.4v1.4h-1.4zM1153 866h1.4v1.4h-1.4zM1113.5 858.5h1.4v1.4h-1.4zM1168.5 867.5h1.4v1.4h-1.4zM1205 871.5h1.4v1.4h-1.4zM1122.5 860h1.4v1.4h-1.4zM1141.5 864h1.4v1.4h-1.4zM1078 850.5h1.4v1.4h-1.4zM1118.5 860h1.4v1.4h-1.4zM1163.5 866.5h1.4v1.4h-1.4zM1229.5 868.5h1.4v1.4h-1.4zM1249.5 866h1.4v1.4h-1.4zM1239.5 867.5h1.4v1.4h-1.4zM1100.5 856h1.4v1.4h-1.4zM1122 860.5h1.4v1.4h-1.4zM1276.5 855.5h1.4v1.4h-1.4zM1219 870h1.4v1.4h-1.4zM1081 851.5h1.4v1.4h-1.4zM1139 864h1.4v1.4h-1.4zM1225 869h1.4v1.4h-1.4zM1080.5 852h1.4v1.4h-1.4zM1297.5 842.5h1.4v1.4h-1.4zM1152 865.5h1.4v1.4h-1.4zM1106.5 857h1.4v1.4h-1.4zM1195 871h1.4v1.4h-1.4zM1284 851.5h1.4v1.4h-1.4zM1090.5 854.5h1.4v1.4h-1.4zM1071 848.5h1.4v1.4h-1.4zM1087 853h1.4v1.4h-1.4zM1113 858h1.4v1.4h-1.4zM1143.5 864h1.4v1.4h-1.4zM1157.5 866h1.4v1.4h-1.4zM1295 845.5h1.4v1.4h-1.4zM1091.5 854h1.4v1.4h-1.4zM1267.5 858.5h1.4v1.4h-1.4zM1218 870h1.4v1.4h-1.4zM1113 859h1.4v1.4h-1.4zM1107 857.5h1.4v1.4h-1.4zM1234.5 868h1.4v1.4h-1.4zM1182.5 869h1.4v1.4h-1.4zM1208.5 870.5h1.4v1.4h-1.4zM1203.5 872h1.4v1.4h-1.4zM1167 867.5h1.4v1.4h-1.4zM1190 870h1.4v1.4h-1.4zM1156.5 866h1.4v1.4h-1.4zM1176 868h1.4v1.4h-1.4zM1133.5 862.5h1.4v1.4h-1.4zM1236 868h1.4v1.4h-1.4zM1064 847h1.4v1.4h-1.4zM1186 869.5h1.4v1.4h-1.4zM1253 865.5h1.4v1.4h-1.4zM1237 867.5h1.4v1.4h-1.4zM1107.5 857h1.4v1.4h-1.4zM1231 867.5h1.4v1.4h-1.4zM1268 858.5h1.4v1.4h-1.4zM1104 857.5h1.4v1.4h-1.4zM1074.5 849.5h1.4v1.4h-1.4zM1139.5 863h1.4v1.4h-1.4zM1162.5 867h1.4v1.4h-1.4zM1182 869.5h1.4v1.4h-1.4zM1297 842.5h1.4v1.4h-1.4zM1153.5 866h1.4v1.4h-1.4zM1236.5 868h1.4v1.4h-1.4zM1222 869h1.4v1.4h-1.4zM1083.5 852h1.4v1.4h-1.4zM1081.5 851.5h1.4v1.4h-1.4zM1111 858.5h1.4v1.4h-1.4zM1279.5 854h1.4v1.4h-1.4zM1088 852.5h1.4v1.4h-1.4zM1217 870h1.4v1.4h-1.4zM1201 871.5h1.4v1.4h-1.4zM1184.5 869.5h1.4v1.4h-1.4zM1124.5 860.5h1.4v1.4h-1.4zM1102 856.5h1.4v1.4h-1.4zM1191.5 870.5h1.4v1.4h-1.4zM1165.5 866.5h1.4v1.4h-1.4zM1060.5 847h1.4v1.4h-1.4zM1118.5 885h1.4v1.4h-1.4zM1141 889.5h1.4v1.4h-1.4zM1192 889h1.4v1.4h-1.4zM1137 889h1.4v1.4h-1.4zM1110 884h1.4v1.4h-1.4zM1111.5 884h1.4v1.4h-1.4zM1154 890.5h1.4v1.4h-1.4zM1139 889.5h1.4v1.4h-1.4zM1160 891h1.4v1.4h-1.4zM1127.5 887.5h1.4v1.4h-1.4zM1162 891h1.4v1.4h-1.4zM1184.5 889.5h1.4v1.4h-1.4zM1198.5 889.5h1.4v1.4h-1.4zM1114 885h1.4v1.4h-1.4zM1111.5 884h1.4v1.4h-1.4zM1102.5 883.5h1.4v1.4h-1.4zM1122 885.5h1.4v1.4h-1.4zM1200 888.5h1.4v1.4h-1.4zM1153 891h1.4v1.4h-1.4zM1126 886.5h1.4v1.4h-1.4zM1170.5 890h1.4v1.4h-1.4zM1191.5 890h1.4v1.4h-1.4zM1106 883.5h1.4v1.4h-1.4zM1188.5 889.5h1.4v1.4h-1.4zM1140 888.5h1.4v1.4h-1.4zM1154.5 891.5h1.4v1.4h-1.4zM1154 890.5h1.4v1.4h-1.4zM1117.5 885h1.4v1.4h-1.4zM1181 890h1.4v1.4h-1.4zM1170 891h1.4v1.4h-1.4zM1166 891h1.4v1.4h-1.4zM1129 887.5h1.4v1.4h-1.4zM1171.5 890.5h1.4v1.4h-1.4zM1111 884h1.4v1.4h-1.4zM1130 887h1.4v1.4h-1.4zM1197.5 889.5h1.4v1.4h-1.4zM1194 890h1.4v1.4h-1.4zM1167 891h1.4v1.4h-1.4zM1132 887.5h1.4v1.4h-1.4zM1185.5 889.5h1.4v1.4h-1.4zM1155 890.5h1.4v1.4h-1.4zM1106 884h1.4v1.4h-1.4zM1108 884h1.4v1.4h-1.4zM1159 891h1.4v1.4h-1.4zM1151 890.5h1.4v1.4h-1.4zM1180.5 889.5h1.4v1.4h-1.4zM1190.5 890h1.4v1.4h-1.4zM1102.5 883h1.4v1.4h-1.4zM1123 886h1.4v1.4h-1.4zM1182.5 890h1.4v1.4h-1.4zM1124 886h1.4v1.4h-1.4zM1131.5 888h1.4v1.4h-1.4zM1160.5 890.5h1.4v1.4h-1.4zM1137.5 889.5h1.4v1.4h-1.4zM1102 883h1.4v1.4h-1.4zM1105 883.5h1.4v1.4h-1.4zM1167 890h1.4v1.4h-1.4zM1173.5 889.5h1.4v1.4h-1.4zM1120.5 886.5h1.4v1.4h-1.4zM1160.5 891.5h1.4v1.4h-1.4z" fill="#a9cef0"/>
<path d="M1173 890.5h1.6v1.6h-1.6zM933.5 826.5h1.6v1.6h-1.6zM1054.5 876.5h1.6v1.6h-1.6zM1225.5 889h1.6v1.6h-1.6zM1196.5 892h1.6v1.6h-1.6zM1090 882.5h1.6v1.6h-1.6zM1087.5 882.5h1.6v1.6h-1.6zM1307.5 860.5h1.6v1.6h-1.6zM1012 861h1.6v1.6h-1.6zM1367.5 795.5h1.6v1.6h-1.6zM969.5 842h1.6v1.6h-1.6zM927 824h1.6v1.6h-1.6zM1118.5 888h1.6v1.6h-1.6zM1129 888.5h1.6v1.6h-1.6zM1140 891.5h1.6v1.6h-1.6zM1276.5 878h1.6v1.6h-1.6zM1248.5 887h1.6v1.6h-1.6zM982.5 849.5h1.6v1.6h-1.6zM1347.5 821.5h1.6v1.6h-1.6zM981 849h1.6v1.6h-1.6zM1111 885h1.6v1.6h-1.6zM1375.5 784h1.6v1.6h-1.6zM1364.5 800h1.6v1.6h-1.6zM1025.5 866.5h1.6v1.6h-1.6zM1342 826h1.6v1.6h-1.6zM1074 878h1.6v1.6h-1.6zM1041.5 871.5h1.6v1.6h-1.6zM1313 854h1.6v1.6h-1.6zM1296.5 868h1.6v1.6h-1.6zM1052 875.5h1.6v1.6h-1.6zM972 844h1.6v1.6h-1.6zM1178 893h1.6v1.6h-1.6zM1245 886.5h1.6v1.6h-1.6zM1231 887.5h1.6v1.6h-1.6zM1376 784.5h1.6v1.6h-1.6zM1131.5 890.5h1.6v1.6h-1.6zM1251 887h1.6v1.6h-1.6zM1316 851h1.6v1.6h-1.6zM988.5 853.5h1.6v1.6h-1.6zM1059 876.5h1.6v1.6h-1.6zM1115.5 886h1.6v1.6h-1.6zM953.5 835.5h1.6v1.6h-1.6zM1313 854h1.6v1.6h-1.6zM1189.5 890.5h1.6v1.6h-1.6zM1218 889.5h1.6v1.6h-1.6zM953 836h1.6v1.6h-1.6zM1327.5 841.5h1.6v1.6h-1.6zM1336.5 833.5h1.6v1.6h-1.6zM954.5 835h1.6v1.6h-1.6zM1317.5 852.5h1.6v1.6h-1.6zM1211 890.5h1.6v1.6h-1.6zM1360.5 803h1.6v1.6h-1.6zM1073 877.5h1.6v1.6h-1.6zM1296.5 868.5h1.6v1.6h-1.6zM981.5 848h1.6v1.6h-1.6zM1027.5 867.5h1.6v1.6h-1.6zM1293.5 868h1.6v1.6h-1.6zM1182.5 893h1.6v1.6h-1.6zM1001 857.5h1.6v1.6h-1.6zM1029 868.5h1.6v1.6h-1.6zM1032.5 867.5h1.6v1.6h-1.6zM905 817h1.6v1.6h-1.6zM1013 861.5h1.6v1.6h-1.6zM1331 838.5h1.6v1.6h-1.6zM1271 880.5h1.6v1.6h-1.6zM960.5 839h1.6v1.6h-1.6zM1124.5 888.5h1.6v1.6h-1.6zM916 820h1.6v1.6h-1.6zM1075 878.5h1.6v1.6h-1.6zM1093.5 883.5h1.6v1.6h-1.6zM1163.5 891.5h1.6v1.6h-1.6zM1107.5 886h1.6v1.6h-1.6zM1297 867.5h1.6v1.6h-1.6zM1233 888.5h1.6v1.6h-1.6zM1162.5 893.5h1.6v1.6h-1.6zM1038 871h1.6v1.6h-1.6zM1344 825h1.6v1.6h-1.6zM1007.5 859h1.6v1.6h-1.6zM1009.5 862.5h1.6v1.6h-1.6zM1342.5 827h1.6v1.6h-1.6zM1151.5 892h1.6v1.6h-1.6zM1237 889.5h1.6v1.6h-1.6zM1114 885h1.6v1.6h-1.6zM1030.5 867.5h1.6v1.6h-1.6zM981.5 848h1.6v1.6h-1.6zM1301.5 864.5h1.6v1.6h-1.6zM1115.5 887.5h1.6v1.6h-1.6zM1357.5 806.5h1.6v1.6h-1.6zM1095.5 882h1.6v1.6h-1.6zM1048.5 873h1.6v1.6h-1.6zM1254.5 886h1.6v1.6h-1.6zM1017.5 862h1.6v1.6h-1.6zM928.5 824h1.6v1.6h-1.6zM926 824h1.6v1.6h-1.6zM1291 871.5h1.6v1.6h-1.6zM984 848.5h1.6v1.6h-1.6zM1216.5 891h1.6v1.6h-1.6zM1050 875h1.6v1.6h-1.6zM1349.5 818h1.6v1.6h-1.6zM1204 891h1.6v1.6h-1.6zM1264 883.5h1.6v1.6h-1.6zM962 839h1.6v1.6h-1.6zM1141 891h1.6v1.6h-1.6zM957 837.5h1.6v1.6h-1.6zM1089.5 881h1.6v1.6h-1.6zM1138 891.5h1.6v1.6h-1.6zM1088.5 882h1.6v1.6h-1.6zM1174.5 893h1.6v1.6h-1.6zM1189.5 891.5h1.6v1.6h-1.6zM1032.5 869.5h1.6v1.6h-1.6zM1305.5 835h1.6v1.6h-1.6zM1351 786h1.6v1.6h-1.6zM1350.5 788h1.6v1.6h-1.6zM1305 836h1.6v1.6h-1.6zM1374 760.5h1.6v1.6h-1.6zM1291.5 848.5h1.6v1.6h-1.6zM1351.5 784h1.6v1.6h-1.6zM1369 762h1.6v1.6h-1.6zM1334 804h1.6v1.6h-1.6zM1300 837.5h1.6v1.6h-1.6zM1330.5 809h1.6v1.6h-1.6zM1372 759.5h1.6v1.6h-1.6zM1326.5 812h1.6v1.6h-1.6zM1299 842.5h1.6v1.6h-1.6zM1340.5 797.5h1.6v1.6h-1.6zM1371.5 761h1.6v1.6h-1.6zM1350.5 788h1.6v1.6h-1.6zM1319 819h1.6v1.6h-1.6zM1334 805h1.6v1.6h-1.6zM1321.5 816.5h1.6v1.6h-1.6zM1346.5 788.5h1.6v1.6h-1.6zM1344.5 792.5h1.6v1.6h-1.6zM1320.5 822h1.6v1.6h-1.6zM1301 838.5h1.6v1.6h-1.6zM1347 791.5h1.6v1.6h-1.6zM1374 756.5h1.6v1.6h-1.6zM1358 778.5h1.6v1.6h-1.6zM1347.5 792h1.6v1.6h-1.6zM1335.5 804.5h1.6v1.6h-1.6zM1345 792h1.6v1.6h-1.6zM1341 799.5h1.6v1.6h-1.6zM1341.5 797.5h1.6v1.6h-1.6zM1327 814h1.6v1.6h-1.6zM1373.5 760h1.6v1.6h-1.6zM1321 820.5h1.6v1.6h-1.6zM1381.5 750.5h1.6v1.6h-1.6zM1349.5 786.5h1.6v1.6h-1.6zM1314 826.5h1.6v1.6h-1.6zM1336.5 800.5h1.6v1.6h-1.6zM1375.5 755h1.6v1.6h-1.6zM1303.5 835.5h1.6v1.6h-1.6zM1303 835h1.6v1.6h-1.6zM1291.5 847.5h1.6v1.6h-1.6zM1360.5 775h1.6v1.6h-1.6zM1359 774h1.6v1.6h-1.6zM1330 811.5h1.6v1.6h-1.6zM1355 781.5h1.6v1.6h-1.6zM1370 764.5h1.6v1.6h-1.6zM1354 781.5h1.6v1.6h-1.6zM1332 805.5h1.6v1.6h-1.6zM1386 748h1.6v1.6h-1.6zM1358.5 778h1.6v1.6h-1.6zM1356.5 778.5h1.6v1.6h-1.6zM1387.5 747h1.6v1.6h-1.6zM1356 780h1.6v1.6h-1.6zM1329.5 810.5h1.6v1.6h-1.6zM1304 835.5h1.6v1.6h-1.6zM1324 816h1.6v1.6h-1.6zM1293.5 846.5h1.6v1.6h-1.6zM1358.5 779h1.6v1.6h-1.6zM1346 793h1.6v1.6h-1.6zM1326 812.5h1.6v1.6h-1.6zM1379 752.5h1.6v1.6h-1.6zM1323 816.5h1.6v1.6h-1.6zM1388.5 743.5h1.6v1.6h-1.6zM1308.5 831.5h1.6v1.6h-1.6zM1307.5 834.5h1.6v1.6h-1.6zM1379 752.5h1.6v1.6h-1.6zM1338 799h1.6v1.6h-1.6zM1342.5 797.5h1.6v1.6h-1.6zM1345 790h1.6v1.6h-1.6zM1371 759h1.6v1.6h-1.6zM1319 823.5h1.6v1.6h-1.6zM1310.5 827.5h1.6v1.6h-1.6zM1385 749.5h1.6v1.6h-1.6zM1336.5 802.5h1.6v1.6h-1.6zM1353 781.5h1.6v1.6h-1.6zM1299.5 837.5h1.6v1.6h-1.6zM1330.5 810.5h1.6v1.6h-1.6zM1349.5 787.5h1.6v1.6h-1.6zM854.5 826h1.6v1.6h-1.6zM845 752h1.6v1.6h-1.6zM845.5 768.5h1.6v1.6h-1.6zM845.5 772h1.6v1.6h-1.6zM850 682.5h1.6v1.6h-1.6zM851.5 746h1.6v1.6h-1.6zM844 742h1.6v1.6h-1.6zM852 682.5h1.6v1.6h-1.6zM850 831h1.6v1.6h-1.6zM849 776h1.6v1.6h-1.6zM845.5 729h1.6v1.6h-1.6zM853.5 799.5h1.6v1.6h-1.6zM848 797.5h1.6v1.6h-1.6zM845 681.5h1.6v1.6h-1.6zM847 661.5h1.6v1.6h-1.6zM845 683.5h1.6v1.6h-1.6zM855 744h1.6v1.6h-1.6zM836 766h1.6v1.6h-1.6zM840.5 735h1.6v1.6h-1.6zM850.5 752h1.6v1.6h-1.6zM840 817.5h1.6v1.6h-1.6zM851 818.5h1.6v1.6h-1.6zM845.5 739h1.6v1.6h-1.6zM852 770.5h1.6v1.6h-1.6zM835 749.5h1.6v1.6h-1.6zM839.5 775h1.6v1.6h-1.6zM852 793.5h1.6v1.6h-1.6zM844 811.5h1.6v1.6h-1.6zM842 795.5h1.6v1.6h-1.6zM869 773.5h1.6v1.6h-1.6zM836 769h1.6v1.6h-1.6zM854 773.5h1.6v1.6h-1.6zM861 796.5h1.6v1.6h-1.6zM859 778h1.6v1.6h-1.6zM866 766.5h1.6v1.6h-1.6zM866 775.5h1.6v1.6h-1.6zM850.5 778.5h1.6v1.6h-1.6zM829.5 795h1.6v1.6h-1.6zM859 777.5h1.6v1.6h-1.6zM855.5 774h1.6v1.6h-1.6zM873.5 776h1.6v1.6h-1.6zM882.5 740.5h1.6v1.6h-1.6zM834.5 779h1.6v1.6h-1.6zM859.5 760.5h1.6v1.6h-1.6zM852.5 802h1.6v1.6h-1.6zM866.5 751.5h1.6v1.6h-1.6zM835 789h1.6v1.6h-1.6zM856 766.5h1.6v1.6h-1.6zM840.5 801h1.6v1.6h-1.6zM848.5 780.5h1.6v1.6h-1.6zM862.5 781.5h1.6v1.6h-1.6zM835.5 783.5h1.6v1.6h-1.6zM839 789h1.6v1.6h-1.6zM854.5 776.5h1.6v1.6h-1.6zM849.5 779.5h1.6v1.6h-1.6zM870 783h1.6v1.6h-1.6zM886.5 774h1.6v1.6h-1.6zM852 772.5h1.6v1.6h-1.6zM852.5 782h1.6v1.6h-1.6zM858 756h1.6v1.6h-1.6zM861.5 772.5h1.6v1.6h-1.6zM868 770.5h1.6v1.6h-1.6zM847.5 788.5h1.6v1.6h-1.6zM868 783h1.6v1.6h-1.6zM858.5 790.5h1.6v1.6h-1.6z" fill="#c6b27c"/>
<path d="M1371 722h2v2h-2zM1373 727h2v2h-2zM1352 764h2v2h-2zM1355 760h2v2h-2zM1224 863h2v2h-2zM958 832h2v2h-2zM962 835h2v2h-2zM906 817h2v2h-2zM812.5 849.5h2v2h-2zM819.5 833h2v2h-2zM818.5 845.5h2v2h-2zM813 842h2v2h-2zM815.5 824.5h2v2h-2zM826 840h2v2h-2zM808.5 830h2v2h-2zM807 852h2v2h-2zM808.5 853.5h2v2h-2zM800.5 826.5h2v2h-2zM817 824h2v2h-2zM807 836.5h2v2h-2zM805.5 818h2v2h-2zM817.5 865.5h2v2h-2zM808 844.5h2v2h-2zM820.5 851.5h2v2h-2zM811 858h2v2h-2zM815.5 838h2v2h-2zM821 835.5h2v2h-2zM812.5 849.5h2v2h-2zM822.5 838.5h2v2h-2zM816.5 847h2v2h-2zM813 826.5h2v2h-2zM804.5 834.5h2v2h-2zM809 825h2v2h-2zM828 842h2v2h-2zM815.5 818h2v2h-2zM813.5 839.5h2v2h-2zM803.5 855h2v2h-2zM815.5 838h2v2h-2zM800 844.5h2v2h-2zM811.5 830.5h2v2h-2zM816.5 823.5h2v2h-2zM808 852.5h2v2h-2zM823.5 842h2v2h-2zM803.5 843.5h2v2h-2zM788 845.5h2v2h-2zM828.5 843h2v2h-2zM792 838.5h2v2h-2zM794.5 844.5h2v2h-2zM819 834h2v2h-2zM819 832.5h2v2h-2zM814 845.5h2v2h-2zM822.5 841.5h2v2h-2zM813 826.5h2v2h-2zM826 815.5h2v2h-2zM811.5 817.5h2v2h-2zM813.5 835.5h2v2h-2zM812 840h2v2h-2zM806 843h2v2h-2zM812 827h2v2h-2zM810.5 839h2v2h-2zM805.5 808.5h2v2h-2zM828 829.5h2v2h-2zM818.5 779h2v2h-2zM837 788.5h2v2h-2zM844 807.5h2v2h-2zM812.5 801.5h2v2h-2zM830.5 780h2v2h-2zM830.5 817.5h2v2h-2zM820 817.5h2v2h-2zM826.5 786.5h2v2h-2zM817.5 783.5h2v2h-2zM826 780h2v2h-2zM812.5 785h2v2h-2zM823.5 785.5h2v2h-2zM821.5 776.5h2v2h-2zM826.5 802h2v2h-2zM821 799h2v2h-2zM830 766.5h2v2h-2zM835.5 785.5h2v2h-2zM819 818h2v2h-2zM814.5 793.5h2v2h-2zM829 806h2v2h-2zM825.5 785h2v2h-2zM811.5 804h2v2h-2zM815.5 813h2v2h-2zM823.5 782.5h2v2h-2zM827 801h2v2h-2zM829 752h2v2h-2zM826.5 786.5h2v2h-2zM821.5 799h2v2h-2zM852.5 786.5h2v2h-2zM833 745.5h2v2h-2zM820 760.5h2v2h-2zM803.5 837h2v2h-2zM824 775.5h2v2h-2zM818 825h2v2h-2zM815 796.5h2v2h-2zM831 780.5h2v2h-2zM824 798.5h2v2h-2zM807.5 802h2v2h-2zM835.5 760.5h2v2h-2zM832 788.5h2v2h-2zM819 784.5h2v2h-2zM826 795h2v2h-2zM828 789h2v2h-2zM809 816.5h2v2h-2zM842 764h2v2h-2zM829.5 779h2v2h-2zM816 787.5h2v2h-2zM829.5 751h2v2h-2zM809.5 816h2v2h-2zM829.5 755.5h2v2h-2zM851 768.5h2v2h-2zM816.5 800.5h2v2h-2zM822.5 808h2v2h-2zM833 758h2v2h-2zM842.5 772h2v2h-2zM822.5 774.5h2v2h-2zM840 757.5h2v2h-2zM832.5 785h2v2h-2zM827.5 772.5h2v2h-2zM819 770h2v2h-2zM825.5 792h2v2h-2zM795.5 821h2v2h-2zM802 799h2v2h-2zM815.5 803.5h2v2h-2zM832 786h2v2h-2zM829.5 785h2v2h-2zM811.5 768.5h2v2h-2zM836 778.5h2v2h-2zM839 759.5h2v2h-2zM840 770.5h2v2h-2zM833 762h2v2h-2zM836 760.5h2v2h-2zM823.5 813h2v2h-2zM832 764h2v2h-2zM823.5 793h2v2h-2zM836.5 762h2v2h-2zM821.5 780h2v2h-2zM840 777h2v2h-2zM841 755.5h2v2h-2zM834.5 777.5h2v2h-2zM831.5 815h2v2h-2zM825 805h2v2h-2zM820 784.5h2v2h-2zM818.5 771.5h2v2h-2zM834.5 777.5h2v2h-2zM828.5 794h2v2h-2zM826 769.5h2v2h-2zM844.5 779.5h2v2h-2zM819 778h2v2h-2zM815.5 805.5h2v2h-2zM823.5 811.5h2v2h-2zM830 809h2v2h-2zM829 807h2v2h-2zM818.5 817.5h2v2h-2zM814 789h2v2h-2zM845 785h2v2h-2zM814.5 800.5h2v2h-2zM832.5 763h2v2h-2zM830 802.5h2v2h-2zM807.5 784.5h2v2h-2zM818 816h2v2h-2zM849.5 787.5h2v2h-2zM817.5 788h2v2h-2zM846.5 782.5h2v2h-2zM842.5 785.5h2v2h-2zM831 810h2v2h-2zM833 780h2v2h-2zM820 792h2v2h-2z" fill="#c6b27c"/>
<path d="M794.5 832.5h2v2h-2zM818.5 820.5h2v2h-2zM819.5 797.5h2v2h-2zM821.5 788.5h2v2h-2zM822.5 784.5h2v2h-2zM834 822h2v2h-2zM818 828.5h2v2h-2zM836 820.5h2v2h-2zM834.5 789.5h2v2h-2zM841 803.5h2v2h-2zM812.5 820h2v2h-2zM821 789h2v2h-2zM811.5 805h2v2h-2zM813 806.5h2v2h-2zM813 805.5h2v2h-2zM820.5 800.5h2v2h-2zM809 836.5h2v2h-2zM823.5 791h2v2h-2zM844 767.5h2v2h-2zM810 827h2v2h-2zM806.5 844h2v2h-2zM827 816.5h2v2h-2zM836 798h2v2h-2zM836 777h2v2h-2zM808.5 808.5h2v2h-2zM827 815.5h2v2h-2zM831.5 827h2v2h-2zM828.5 802h2v2h-2zM815.5 830.5h2v2h-2zM833 771.5h2v2h-2zM833 777h2v2h-2zM840 801h2v2h-2zM813.5 835.5h2v2h-2zM828 805.5h2v2h-2zM813.5 829h2v2h-2zM812.5 834h2v2h-2zM819 848h2v2h-2zM826.5 818h2v2h-2zM796.5 840h2v2h-2zM827.5 778h2v2h-2zM821.5 844.5h2v2h-2zM801 852.5h2v2h-2zM842.5 779.5h2v2h-2zM829 800.5h2v2h-2zM821 772.5h2v2h-2zM827 807.5h2v2h-2zM807 838.5h2v2h-2zM821.5 837.5h2v2h-2zM815.5 825h2v2h-2zM818 838.5h2v2h-2zM837.5 819.5h2v2h-2zM836.5 770.5h2v2h-2zM827 768.5h2v2h-2zM821.5 818h2v2h-2zM815 815h2v2h-2zM829.5 829h2v2h-2zM833 797.5h2v2h-2zM812 842h2v2h-2zM821.5 799h2v2h-2zM812 814h2v2h-2zM811 797h2v2h-2zM826 802.5h2v2h-2zM808 844h2v2h-2zM810.5 815h2v2h-2zM837.5 786h2v2h-2zM808.5 837h2v2h-2zM833.5 801.5h2v2h-2zM811 813.5h2v2h-2zM818.5 818.5h2v2h-2zM828 775.5h2v2h-2zM789 829.5h2v2h-2zM843 782h2v2h-2zM816.5 815.5h2v2h-2zM824.5 798.5h2v2h-2zM823 790h2v2h-2zM822.5 824.5h2v2h-2zM834.5 799h2v2h-2zM822 851.5h2v2h-2zM824 808.5h2v2h-2zM831.5 789h2v2h-2zM820 809.5h2v2h-2zM831 772.5h2v2h-2zM824.5 798h2v2h-2zM815.5 821.5h2v2h-2zM813 781h2v2h-2zM821.5 790h2v2h-2zM817 828h2v2h-2zM817.5 793h2v2h-2zM824 781h2v2h-2zM817 859h2v2h-2zM797 796.5h2v2h-2zM816 828h2v2h-2zM823.5 801.5h2v2h-2zM818.5 800.5h2v2h-2zM825.5 801h2v2h-2zM840 762h2v2h-2zM814.5 806h2v2h-2zM824 816.5h2v2h-2zM830.5 791.5h2v2h-2zM822 825.5h2v2h-2zM820.5 815h2v2h-2zM801.5 846h2v2h-2zM821 793.5h2v2h-2zM829.5 808.5h2v2h-2zM817 848.5h2v2h-2zM835 780.5h2v2h-2zM838.5 773.5h2v2h-2zM812.5 868h2v2h-2zM824.5 822h2v2h-2zM820.5 792.5h2v2h-2zM821.5 790h2v2h-2zM812.5 844h2v2h-2zM815.5 840.5h2v2h-2zM831 808.5h2v2h-2zM814.5 786.5h2v2h-2zM822.5 784.5h2v2h-2zM808.5 873h2v2h-2zM827.5 792.5h2v2h-2zM835 774h2v2h-2zM825 772h2v2h-2zM835.5 767h2v2h-2zM823.5 793.5h2v2h-2zM816.5 807h2v2h-2zM831 809h2v2h-2zM820 820.5h2v2h-2zM813 771h2v2h-2zM813.5 835.5h2v2h-2zM822 786.5h2v2h-2zM834 774h2v2h-2zM829 812h2v2h-2zM837.5 768.5h2v2h-2zM824.5 805.5h2v2h-2zM820.5 811.5h2v2h-2zM822 826.5h2v2h-2zM816.5 815.5h2v2h-2zM817.5 811.5h2v2h-2zM813.5 805.5h2v2h-2zM835.5 772.5h2v2h-2zM806.5 820h2v2h-2zM816 795.5h2v2h-2zM830.5 800.5h2v2h-2zM821 800.5h2v2h-2zM818 805h2v2h-2zM831.5 791h2v2h-2zM818 813h2v2h-2zM821 789h2v2h-2zM817 843h2v2h-2zM825.5 821h2v2h-2zM821.5 832.5h2v2h-2zM836.5 802.5h2v2h-2zM819.5 772.5h2v2h-2zM809.5 835.5h2v2h-2zM799.5 812h2v2h-2zM794 854h2v2h-2zM817 836.5h2v2h-2zM812.5 847h2v2h-2zM814 792.5h2v2h-2zM816.5 801h2v2h-2zM802 832h2v2h-2zM814.5 828.5h2v2h-2zM828.5 796h2v2h-2zM830.5 834.5h2v2h-2zM848 795.5h2v2h-2zM808 795h2v2h-2zM821.5 805h2v2h-2zM807.5 816.5h2v2h-2zM820 813.5h2v2h-2zM819.5 814.5h2v2h-2zM815 810h2v2h-2zM820.5 813.5h2v2h-2zM824.5 780h2v2h-2zM813.5 807.5h2v2h-2zM805.5 818.5h2v2h-2zM826 809h2v2h-2zM839 779h2v2h-2zM817 807h2v2h-2zM799.5 830h2v2h-2zM833.5 793h2v2h-2zM824 815h2v2h-2zM817 815h2v2h-2zM817.5 803h2v2h-2zM821 812h2v2h-2zM817.5 824.5h2v2h-2zM819 810.5h2v2h-2zM829.5 798h2v2h-2zM806.5 842h2v2h-2zM821.5 837.5h2v2h-2zM827 794.5h2v2h-2zM818 801h2v2h-2zM827 807.5h2v2h-2zM836 801h2v2h-2zM838 795.5h2v2h-2zM821 810.5h2v2h-2zM831.5 778.5h2v2h-2zM807.5 834.5h2v2h-2zM808 817h2v2h-2zM817.5 805h2v2h-2zM792.5 847.5h2v2h-2zM812.5 813h2v2h-2zM810 821h2v2h-2zM822.5 813h2v2h-2zM812 832.5h2v2h-2zM846 786h2v2h-2zM830 794.5h2v2h-2zM843 769h2v2h-2zM817 810.5h2v2h-2zM840.5 766h2v2h-2zM827.5 782.5h2v2h-2zM832.5 806h2v2h-2zM831 830h2v2h-2zM821 800h2v2h-2zM830.5 812h2v2h-2zM839.5 796h2v2h-2zM818 792.5h2v2h-2zM818 797h2v2h-2zM831 804h2v2h-2zM828 812h2v2h-2zM819 833.5h2v2h-2zM813 812.5h2v2h-2zM820 826.5h2v2h-2zM820.5 864h2v2h-2zM812.5 838.5h2v2h-2zM805 816h2v2h-2zM813.5 832.5h2v2h-2zM821 822h2v2h-2zM840 785h2v2h-2zM803 828h2v2h-2zM852.5 761h2v2h-2zM840 760h2v2h-2zM837 780.5h2v2h-2zM833.5 807.5h2v2h-2zM809 872h2v2h-2zM834 784.5h2v2h-2zM819 822h2v2h-2zM838 809h2v2h-2zM835.5 812.5h2v2h-2zM814 864.5h2v2h-2zM813 850.5h2v2h-2zM810.5 804.5h2v2h-2zM840 774h2v2h-2zM831 778.5h2v2h-2zM822.5 813h2v2h-2zM812 784.5h2v2h-2zM835.5 782h2v2h-2zM818 834h2v2h-2zM828.5 787h2v2h-2zM824.5 833.5h2v2h-2zM824.5 790h2v2h-2zM831 820h2v2h-2zM815.5 789.5h2v2h-2zM830 802.5h2v2h-2zM850 769h2v2h-2zM817 805.5h2v2h-2zM820.5 805.5h2v2h-2zM813 802.5h2v2h-2zM833 803.5h2v2h-2zM819 808.5h2v2h-2zM829 812.5h2v2h-2zM824.5 810h2v2h-2zM834 805h2v2h-2zM831.5 786h2v2h-2zM816.5 801h2v2h-2zM822.5 819.5h2v2h-2zM819.5 826.5h2v2h-2zM814.5 795.5h2v2h-2zM802.5 834.5h2v2h-2zM840.5 793.5h2v2h-2zM814 793.5h2v2h-2zM815 792h2v2h-2zM832 795.5h2v2h-2zM825.5 810.5h2v2h-2zM830 804h2v2h-2zM823 824.5h2v2h-2zM820 846.5h2v2h-2zM822.5 802h2v2h-2zM825.5 785h2v2h-2zM831.5 779h2v2h-2zM816.5 810.5h2v2h-2zM830 790h2v2h-2zM827.5 775h2v2h-2zM834 823h2v2h-2zM802.5 857h2v2h-2zM808 821h2v2h-2zM822.5 822h2v2h-2zM822 837h2v2h-2zM820 774.5h2v2h-2zM825.5 805.5h2v2h-2zM831.5 769.5h2v2h-2zM799 837h2v2h-2zM829 785h2v2h-2zM816.5 828h2v2h-2zM829.5 816h2v2h-2zM825.5 784h2v2h-2zM818 785h2v2h-2zM827.5 779h2v2h-2zM832.5 789h2v2h-2zM835 810.5h2v2h-2zM834.5 797.5h2v2h-2zM818 797.5h2v2h-2zM823.5 778.5h2v2h-2zM843 788.5h2v2h-2zM836 798.5h2v2h-2zM816.5 832.5h2v2h-2zM823 824.5h2v2h-2zM807.5 788.5h2v2h-2zM848.5 761.5h2v2h-2zM816 829h2v2h-2zM819 815.5h2v2h-2zM815 793h2v2h-2zM832 778.5h2v2h-2zM827.5 782h2v2h-2zM833 791.5h2v2h-2zM808.5 811h2v2h-2zM821.5 785.5h2v2h-2zM842 777.5h2v2h-2zM830 797h2v2h-2zM840.5 741.5h2v2h-2zM808.5 833h2v2h-2zM803.5 829.5h2v2h-2zM805.5 838h2v2h-2zM822 842.5h2v2h-2zM815.5 781h2v2h-2zM793.5 816h2v2h-2zM844 809h2v2h-2zM828 810h2v2h-2zM805 789h2v2h-2zM819.5 805h2v2h-2zM812 837h2v2h-2zM843.5 798h2v2h-2zM840.5 791h2v2h-2zM795.5 830h2v2h-2zM824.5 809.5h2v2h-2zM812 844h2v2h-2zM808.5 812.5h2v2h-2zM829 827h2v2h-2zM837.5 812h2v2h-2zM814.5 811.5h2v2h-2zM835.5 798.5h2v2h-2zM805 810h2v2h-2zM808 821h2v2h-2zM832.5 847h2v2h-2zM813 797.5h2v2h-2zM839.5 768.5h2v2h-2zM819 831h2v2h-2zM816 822h2v2h-2zM827 831.5h2v2h-2zM823 828h2v2h-2zM844.5 775.5h2v2h-2zM836.5 741.5h2v2h-2zM819.5 793h2v2h-2zM826 816.5h2v2h-2zM812 768h2v2h-2zM837.5 798h2v2h-2zM823.5 819.5h2v2h-2zM820 801h2v2h-2zM810.5 830.5h2v2h-2zM832.5 784h2v2h-2zM804 842.5h2v2h-2zM811.5 796.5h2v2h-2zM799 817.5h2v2h-2zM816 816h2v2h-2zM824.5 785.5h2v2h-2zM816 815.5h2v2h-2zM802 803h2v2h-2zM809 787.5h2v2h-2zM820.5 828h2v2h-2zM821 777.5h2v2h-2zM802.5 817.5h2v2h-2zM812 804.5h2v2h-2zM823.5 767.5h2v2h-2zM811 851.5h2v2h-2zM826.5 818h2v2h-2zM819 832.5h2v2h-2zM812 810h2v2h-2zM829 816.5h2v2h-2zM844 809h2v2h-2zM813.5 852.5h2v2h-2zM815 821h2v2h-2zM820 786h2v2h-2zM813 857h2v2h-2zM839 802h2v2h-2zM830 824h2v2h-2zM818 778h2v2h-2zM841 823.5h2v2h-2zM839.5 777.5h2v2h-2zM842 811h2v2h-2zM832 772h2v2h-2zM820 799.5h2v2h-2zM827.5 782.5h2v2h-2zM804 858.5h2v2h-2zM814 809.5h2v2h-2zM835.5 817h2v2h-2zM842.5 788h2v2h-2zM829 838.5h2v2h-2zM825.5 810h2v2h-2zM834.5 785.5h2v2h-2zM814 816.5h2v2h-2zM821.5 809h2v2h-2zM819 801h2v2h-2zM841 757h2v2h-2zM828.5 830.5h2v2h-2zM813.5 883.5h2v2h-2zM825 808.5h2v2h-2zM824 783h2v2h-2zM818.5 827h2v2h-2zM829 787.5h2v2h-2zM817 833h2v2h-2zM814 817.5h2v2h-2zM817 814h2v2h-2zM817 818.5h2v2h-2zM824 845.5h2v2h-2zM814.5 838h2v2h-2zM816 829h2v2h-2zM837.5 786h2v2h-2zM795.5 820h2v2h-2zM826.5 817h2v2h-2zM817 827.5h2v2h-2zM830.5 787h2v2h-2zM822.5 817h2v2h-2zM831 775h2v2h-2zM821 820.5h2v2h-2zM814.5 830.5h2v2h-2zM805 807.5h2v2h-2zM816 828.5h2v2h-2zM815 828h2v2h-2zM817.5 786h2v2h-2zM809 857.5h2v2h-2zM824 769h2v2h-2zM827.5 801.5h2v2h-2zM791.5 820h2v2h-2zM808 835.5h2v2h-2zM818 813.5h2v2h-2zM817 837.5h2v2h-2zM829.5 830h2v2h-2zM817 810.5h2v2h-2zM842 778.5h2v2h-2zM816.5 822.5h2v2h-2zM815.5 789h2v2h-2zM814.5 831.5h2v2h-2zM828 794.5h2v2h-2zM828.5 799h2v2h-2zM827 792.5h2v2h-2zM829 805h2v2h-2zM822 816h2v2h-2zM825.5 788.5h2v2h-2zM824.5 818h2v2h-2zM824 806.5h2v2h-2zM826 827.5h2v2h-2zM825.5 797h2v2h-2zM813.5 838.5h2v2h-2zM810.5 820.5h2v2h-2zM835.5 811.5h2v2h-2zM843.5 760h2v2h-2zM838.5 805.5h2v2h-2zM820.5 829h2v2h-2zM827.5 781.5h2v2h-2zM813.5 815.5h2v2h-2zM832 771.5h2v2h-2zM823 801.5h2v2h-2zM819.5 811.5h2v2h-2zM819 848h2v2h-2zM825 826.5h2v2h-2zM834 793.5h2v2h-2zM814.5 808.5h2v2h-2zM816 815h2v2h-2zM821.5 800.5h2v2h-2zM814 828.5h2v2h-2zM811.5 828h2v2h-2zM823 806h2v2h-2zM843.5 803h2v2h-2zM811 819h2v2h-2zM808 816h2v2h-2zM822 782h2v2h-2zM819 813h2v2h-2zM813 798h2v2h-2zM831.5 798.5h2v2h-2zM822 792h2v2h-2zM813 820h2v2h-2zM817.5 826.5h2v2h-2zM830.5 779h2v2h-2zM802.5 811.5h2v2h-2zM809 802.5h2v2h-2zM826.5 797.5h2v2h-2zM802 838h2v2h-2zM830.5 835h2v2h-2zM817.5 821h2v2h-2zM836.5 789h2v2h-2zM821 831h2v2h-2zM839.5 794.5h2v2h-2zM831 794h2v2h-2zM836 802.5h2v2h-2zM812 840.5h2v2h-2zM822.5 780.5h2v2h-2zM827.5 806h2v2h-2zM822 839h2v2h-2zM813 822.5h2v2h-2zM853.5 783.5h2v2h-2zM817.5 825.5h2v2h-2zM809.5 845.5h2v2h-2zM822 831h2v2h-2zM834 794h2v2h-2zM813 825.5h2v2h-2zM827.5 794h2v2h-2zM835 853h2v2h-2zM810.5 855h2v2h-2zM816.5 828.5h2v2h-2zM826.5 821h2v2h-2zM804.5 834h2v2h-2zM827 798h2v2h-2zM826 828.5h2v2h-2zM826.5 800h2v2h-2zM824 796.5h2v2h-2zM814.5 821.5h2v2h-2zM821.5 758h2v2h-2zM839.5 769h2v2h-2zM820.5 800h2v2h-2zM822.5 806h2v2h-2zM820 772.5h2v2h-2zM826 806.5h2v2h-2zM816 825.5h2v2h-2zM825 821.5h2v2h-2zM815 792.5h2v2h-2zM820 822.5h2v2h-2zM832 781h2v2h-2zM823.5 818h2v2h-2zM824 814.5h2v2h-2zM828 785.5h2v2h-2zM794 850h2v2h-2zM826 804h2v2h-2zM832.5 792h2v2h-2zM812 810.5h2v2h-2zM822 796h2v2h-2zM836 784.5h2v2h-2zM823 803.5h2v2h-2zM812.5 836h2v2h-2zM833.5 786h2v2h-2zM823.5 815.5h2v2h-2zM812 803h2v2h-2zM801.5 832h2v2h-2zM813.5 820.5h2v2h-2zM848 782h2v2h-2zM809 835h2v2h-2zM836.5 820h2v2h-2zM809 837h2v2h-2zM823.5 795h2v2h-2zM819.5 818h2v2h-2zM820 801.5h2v2h-2zM806.5 798h2v2h-2zM822 783h2v2h-2zM809 785h2v2h-2zM829 813h2v2h-2zM798.5 814h2v2h-2zM812 818.5h2v2h-2zM822.5 811h2v2h-2zM820.5 828.5h2v2h-2zM827.5 777.5h2v2h-2zM821.5 802.5h2v2h-2zM802.5 816h2v2h-2zM821.5 826.5h2v2h-2zM836 794.5h2v2h-2zM815 851h2v2h-2zM849 800.5h2v2h-2zM804 813h2v2h-2zM823.5 794.5h2v2h-2zM822.5 805h2v2h-2zM819 772.5h2v2h-2zM816 818.5h2v2h-2zM832 759.5h2v2h-2zM819 820.5h2v2h-2zM831 834h2v2h-2zM811.5 821h2v2h-2zM833.5 808.5h2v2h-2zM814 806.5h2v2h-2zM815.5 823h2v2h-2zM818 803h2v2h-2zM808.5 807.5h2v2h-2zM831 782h2v2h-2zM808.5 846.5h2v2h-2zM823 815.5h2v2h-2zM841 782h2v2h-2zM843 814.5h2v2h-2zM808 808h2v2h-2zM820.5 802.5h2v2h-2zM822.5 824h2v2h-2zM817 809h2v2h-2zM823.5 777h2v2h-2zM844 835h2v2h-2zM822.5 796h2v2h-2zM806.5 847.5h2v2h-2zM818.5 867.5h2v2h-2zM807 850.5h2v2h-2zM842 772.5h2v2h-2zM814.5 831.5h2v2h-2zM812.5 790.5h2v2h-2zM825.5 782.5h2v2h-2zM813 803.5h2v2h-2zM805.5 832.5h2v2h-2zM830 824.5h2v2h-2zM825.5 800.5h2v2h-2zM845 794.5h2v2h-2zM812 834.5h2v2h-2zM824.5 821h2v2h-2zM805.5 865h2v2h-2zM829.5 777h2v2h-2zM834 837.5h2v2h-2zM807.5 875.5h2v2h-2zM819.5 788h2v2h-2zM832 797.5h2v2h-2zM822.5 800h2v2h-2zM816.5 843.5h2v2h-2zM796 811.5h2v2h-2zM819 799h2v2h-2zM813.5 790h2v2h-2zM823.5 845.5h2v2h-2zM840 774h2v2h-2zM839.5 804.5h2v2h-2zM819.5 828h2v2h-2zM806.5 808h2v2h-2zM793 876.5h2v2h-2zM832.5 840h2v2h-2zM830.5 809.5h2v2h-2zM812 797.5h2v2h-2zM810.5 791h2v2h-2zM811.5 835h2v2h-2zM828 810h2v2h-2zM807 801.5h2v2h-2zM828.5 817h2v2h-2zM839 782.5h2v2h-2zM810 789h2v2h-2zM803.5 822.5h2v2h-2zM816 803.5h2v2h-2zM820 820h2v2h-2zM829 802.5h2v2h-2zM832 820.5h2v2h-2zM815.5 860h2v2h-2zM816 836.5h2v2h-2zM809 840.5h2v2h-2zM821.5 791h2v2h-2zM817.5 761.5h2v2h-2zM824 815h2v2h-2zM807 831.5h2v2h-2zM827.5 791.5h2v2h-2zM840 768h2v2h-2zM821.5 838h2v2h-2zM825 798.5h2v2h-2zM824.5 785h2v2h-2zM825 822h2v2h-2zM822.5 815h2v2h-2zM838.5 763.5h2v2h-2zM791 872h2v2h-2zM837 819h2v2h-2zM826 781.5h2v2h-2zM842.5 802.5h2v2h-2zM824.5 804h2v2h-2zM818.5 829.5h2v2h-2zM819.5 784h2v2h-2zM822 833.5h2v2h-2zM817 800.5h2v2h-2zM813 831.5h2v2h-2zM831.5 796h2v2h-2zM822 802h2v2h-2zM815.5 841h2v2h-2zM825 800.5h2v2h-2zM811 807h2v2h-2zM819.5 822.5h2v2h-2zM821 815h2v2h-2zM822 803h2v2h-2zM834 808h2v2h-2zM824 827h2v2h-2zM818 795.5h2v2h-2zM840.5 797.5h2v2h-2zM832.5 790.5h2v2h-2zM830.5 823h2v2h-2zM833.5 820h2v2h-2zM833 809.5h2v2h-2zM826.5 811.5h2v2h-2zM827 807h2v2h-2zM823.5 782.5h2v2h-2zM802.5 826h2v2h-2zM810 863.5h2v2h-2zM816.5 831.5h2v2h-2zM818 792h2v2h-2zM818 808h2v2h-2zM830.5 804h2v2h-2zM828 816.5h2v2h-2zM839.5 775.5h2v2h-2zM814.5 835h2v2h-2zM846 803.5h2v2h-2zM821 807h2v2h-2zM841 775.5h2v2h-2zM831 802h2v2h-2zM823 782.5h2v2h-2zM823 809h2v2h-2zM819 788h2v2h-2zM829.5 837.5h2v2h-2zM824.5 785.5h2v2h-2zM811.5 803.5h2v2h-2zM825 834h2v2h-2zM815.5 824h2v2h-2zM801.5 844h2v2h-2zM815 852h2v2h-2zM794 835h2v2h-2zM810.5 846h2v2h-2zM803.5 841h2v2h-2zM820 830h2v2h-2zM801.5 845.5h2v2h-2zM814 829.5h2v2h-2zM807 847.5h2v2h-2zM812 839.5h2v2h-2zM796 851h2v2h-2zM809.5 835h2v2h-2zM801.5 854.5h2v2h-2zM797.5 826h2v2h-2zM801 823h2v2h-2zM815.5 852.5h2v2h-2zM813 830.5h2v2h-2zM805 838.5h2v2h-2zM822.5 840h2v2h-2zM807 828.5h2v2h-2zM823 845.5h2v2h-2zM817 854h2v2h-2zM820.5 837h2v2h-2zM832 846h2v2h-2zM823 845h2v2h-2zM817 851.5h2v2h-2zM811.5 829h2v2h-2zM819.5 843.5h2v2h-2zM807.5 837h2v2h-2zM816 831.5h2v2h-2zM822.5 830h2v2h-2zM814 842.5h2v2h-2zM815 837h2v2h-2zM799 825h2v2h-2zM806 841.5h2v2h-2zM810 843h2v2h-2zM818.5 852.5h2v2h-2zM812 827h2v2h-2zM801 832.5h2v2h-2zM811 824.5h2v2h-2zM810 857h2v2h-2zM812 835h2v2h-2zM810 832h2v2h-2zM822 835.5h2v2h-2zM801 833h2v2h-2zM825 847h2v2h-2zM804.5 849.5h2v2h-2zM815 834h2v2h-2zM813 846h2v2h-2zM824.5 835.5h2v2h-2zM806 834.5h2v2h-2zM807 835h2v2h-2zM810.5 821h2v2h-2zM809.5 830.5h2v2h-2zM821.5 838.5h2v2h-2zM812.5 847h2v2h-2zM807.5 846h2v2h-2zM826.5 842.5h2v2h-2zM817.5 831.5h2v2h-2zM803.5 842.5h2v2h-2zM811 837h2v2h-2zM819 837.5h2v2h-2zM824.5 847.5h2v2h-2zM825.5 834.5h2v2h-2zM815.5 820.5h2v2h-2zM825.5 829.5h2v2h-2zM817 831.5h2v2h-2zM817 826.5h2v2h-2zM815 842.5h2v2h-2zM820.5 844h2v2h-2zM819.5 850h2v2h-2zM814.5 823h2v2h-2zM805.5 860h2v2h-2zM825.5 828h2v2h-2zM795.5 819h2v2h-2zM817 822h2v2h-2zM806.5 828.5h2v2h-2zM818.5 832h2v2h-2zM824 830h2v2h-2zM827 820.5h2v2h-2zM812 834h2v2h-2zM840 837.5h2v2h-2zM795 832.5h2v2h-2zM810.5 835.5h2v2h-2zM820.5 826.5h2v2h-2zM819 826.5h2v2h-2zM826.5 844h2v2h-2zM809 828.5h2v2h-2zM814 838h2v2h-2zM819 821h2v2h-2zM810.5 829h2v2h-2zM805.5 819.5h2v2h-2zM827.5 847h2v2h-2zM815 824h2v2h-2zM812 854h2v2h-2zM803.5 827.5h2v2h-2zM833 826h2v2h-2zM821.5 829.5h2v2h-2zM811 831h2v2h-2zM805 839h2v2h-2zM804.5 835h2v2h-2zM804 853h2v2h-2zM826 826h2v2h-2zM804 839h2v2h-2zM814.5 826h2v2h-2zM826.5 830.5h2v2h-2zM816.5 833.5h2v2h-2zM812.5 845h2v2h-2zM808.5 826.5h2v2h-2zM811.5 837h2v2h-2zM818.5 831.5h2v2h-2zM810 846h2v2h-2zM825 835.5h2v2h-2zM811.5 840h2v2h-2zM809.5 833h2v2h-2zM814.5 843h2v2h-2zM822 841h2v2h-2zM812.5 855.5h2v2h-2zM827.5 830.5h2v2h-2zM816 844.5h2v2h-2zM822.5 848.5h2v2h-2zM820 849.5h2v2h-2zM814 835.5h2v2h-2zM797.5 831.5h2v2h-2zM818 835.5h2v2h-2zM804 839h2v2h-2zM812 851h2v2h-2zM815.5 832.5h2v2h-2zM812 840.5h2v2h-2zM804 825h2v2h-2zM813.5 834h2v2h-2zM813 831h2v2h-2zM803 827.5h2v2h-2zM816 823h2v2h-2zM819.5 837.5h2v2h-2zM815.5 834.5h2v2h-2zM824 839.5h2v2h-2zM806.5 817h2v2h-2zM823 830h2v2h-2zM805 821.5h2v2h-2zM807.5 841h2v2h-2zM816.5 855.5h2v2h-2zM811 812.5h2v2h-2zM812 836h2v2h-2zM815.5 838.5h2v2h-2zM816.5 842.5h2v2h-2zM808 842h2v2h-2zM820.5 847.5h2v2h-2zM782.5 858.5h2v2h-2zM792.5 824h2v2h-2zM819 845.5h2v2h-2zM819 834h2v2h-2zM807.5 830.5h2v2h-2zM806 847h2v2h-2zM809 833.5h2v2h-2zM814 840h2v2h-2zM806.5 831h2v2h-2zM812.5 828.5h2v2h-2zM817.5 838h2v2h-2zM800.5 855.5h2v2h-2zM829.5 842h2v2h-2zM794.5 839h2v2h-2zM814 850h2v2h-2zM814 830.5h2v2h-2zM820.5 838.5h2v2h-2zM807.5 841h2v2h-2zM832 825.5h2v2h-2zM810 841.5h2v2h-2zM820.5 829h2v2h-2zM805.5 831.5h2v2h-2zM791.5 846.5h2v2h-2zM801 840h2v2h-2zM794.5 852.5h2v2h-2zM801 831.5h2v2h-2zM827.5 834h2v2h-2zM810.5 838h2v2h-2zM817 845.5h2v2h-2zM826.5 851.5h2v2h-2zM812 816.5h2v2h-2zM822 843h2v2h-2zM807.5 831h2v2h-2zM814 832h2v2h-2zM802.5 848h2v2h-2zM804.5 833h2v2h-2zM811 830h2v2h-2zM817 825.5h2v2h-2zM831 836.5h2v2h-2zM812 837.5h2v2h-2zM821 833.5h2v2h-2zM823 845h2v2h-2zM807 834h2v2h-2zM805 837.5h2v2h-2zM817 837h2v2h-2zM813.5 835.5h2v2h-2zM821.5 846h2v2h-2zM821 847h2v2h-2zM813.5 833h2v2h-2zM806.5 838h2v2h-2zM809 833h2v2h-2zM828.5 849h2v2h-2zM817 838h2v2h-2zM812.5 843.5h2v2h-2zM806.5 845.5h2v2h-2zM816.5 831.5h2v2h-2zM804 848.5h2v2h-2zM821 841.5h2v2h-2zM809 831h2v2h-2zM821.5 825h2v2h-2zM803 827.5h2v2h-2zM806.5 841.5h2v2h-2zM828.5 848.5h2v2h-2zM811.5 839.5h2v2h-2zM807.5 846h2v2h-2zM806 832h2v2h-2zM815.5 818h2v2h-2zM808.5 851.5h2v2h-2zM799.5 847.5h2v2h-2zM805 850h2v2h-2zM812.5 842h2v2h-2zM815 827.5h2v2h-2zM815.5 832h2v2h-2zM805 838h2v2h-2zM810 831h2v2h-2zM795.5 824.5h2v2h-2zM812.5 776.5h2v2h-2zM819 809.5h2v2h-2zM832 771h2v2h-2zM817 780.5h2v2h-2zM839 773h2v2h-2zM831 771h2v2h-2zM832 771h2v2h-2zM834 786.5h2v2h-2zM834 806h2v2h-2zM817 814h2v2h-2zM825 783.5h2v2h-2zM821 788.5h2v2h-2zM810 784h2v2h-2zM820.5 811.5h2v2h-2zM826.5 800h2v2h-2zM839.5 805h2v2h-2zM825.5 787h2v2h-2zM840 795h2v2h-2zM819 799h2v2h-2zM851.5 772.5h2v2h-2zM827 787.5h2v2h-2zM839.5 777h2v2h-2zM817 812h2v2h-2zM824.5 780h2v2h-2zM839 790.5h2v2h-2zM812 805h2v2h-2zM826 775h2v2h-2zM815 782h2v2h-2zM836 767h2v2h-2zM832.5 787h2v2h-2zM817.5 778.5h2v2h-2zM847.5 800h2v2h-2zM831.5 780.5h2v2h-2zM817.5 813h2v2h-2zM830.5 799.5h2v2h-2zM838.5 813h2v2h-2zM829.5 803.5h2v2h-2zM828.5 787h2v2h-2zM817.5 792.5h2v2h-2zM830.5 786.5h2v2h-2zM836.5 761h2v2h-2zM823 789.5h2v2h-2zM824.5 774h2v2h-2zM827 797h2v2h-2zM796.5 812h2v2h-2zM815 810h2v2h-2zM834.5 815h2v2h-2zM815.5 786h2v2h-2zM816 775h2v2h-2zM820 820.5h2v2h-2zM849.5 673.5h2v2h-2zM849 681h2v2h-2zM843 680h2v2h-2zM847 674h2v2h-2zM849.5 680h2v2h-2zM842.5 683h2v2h-2zM848 685h2v2h-2zM842 682h2v2h-2zM847 684h2v2h-2zM847.5 679.5h2v2h-2zM848 673h2v2h-2zM845.5 675h2v2h-2zM842 688h2v2h-2zM842.5 672.5h2v2h-2zM843 679.5h2v2h-2zM849 678.5h2v2h-2zM841 686h2v2h-2zM845 684h2v2h-2zM848.5 678.5h2v2h-2zM847 678h2v2h-2zM843 681h2v2h-2zM848.5 675.5h2v2h-2zM842 683h2v2h-2zM844 684h2v2h-2zM846 677h2v2h-2zM845.5 684.5h2v2h-2zM837 682h2v2h-2zM842 683.5h2v2h-2zM849 681h2v2h-2zM842.5 681h2v2h-2zM844 683.5h2v2h-2zM841.5 681h2v2h-2zM845.5 685h2v2h-2zM844 687h2v2h-2zM840.5 686h2v2h-2zM847.5 676.5h2v2h-2zM844 682h2v2h-2zM843 687.5h2v2h-2zM846.5 679h2v2h-2zM850.5 681.5h2v2h-2zM841.5 684.5h2v2h-2zM845.5 677h2v2h-2zM840 685.5h2v2h-2zM842.5 680.5h2v2h-2zM844.5 679.5h2v2h-2zM843 681h2v2h-2zM844.5 686.5h2v2h-2zM846.5 675.5h2v2h-2zM841.5 679.5h2v2h-2zM836.5 684.5h2v2h-2zM845 681.5h2v2h-2zM843 676.5h2v2h-2zM842 683.5h2v2h-2zM843 683.5h2v2h-2zM850 672.5h2v2h-2zM842 686.5h2v2h-2zM843.5 681h2v2h-2zM847 675h2v2h-2zM850.5 682.5h2v2h-2zM847.5 679.5h2v2h-2zM846 687.5h2v2h-2zM846 686.5h2v2h-2zM844 688h2v2h-2zM845.5 682h2v2h-2zM848.5 677.5h2v2h-2zM837.5 682.5h2v2h-2zM846.5 678h2v2h-2zM846 676.5h2v2h-2zM842.5 681h2v2h-2zM843.5 685h2v2h-2zM843.5 684h2v2h-2zM848 678.5h2v2h-2zM842.5 676h2v2h-2zM845.5 678.5h2v2h-2zM851.5 680h2v2h-2zM847.5 678h2v2h-2zM849 676h2v2h-2zM847 683h2v2h-2zM846.5 675h2v2h-2zM850 680h2v2h-2zM853 671.5h2v2h-2zM838.5 688h2v2h-2zM849 683h2v2h-2zM846 685h2v2h-2zM844 681.5h2v2h-2zM845 673.5h2v2h-2zM844 684.5h2v2h-2zM847.5 675.5h2v2h-2zM847 682.5h2v2h-2zM847.5 680.5h2v2h-2zM842.5 685.5h2v2h-2zM850.5 677h2v2h-2zM840.5 684.5h2v2h-2zM845.5 681.5h2v2h-2zM840.5 684.5h2v2h-2zM845 682h2v2h-2zM847 679h2v2h-2zM845.5 682h2v2h-2zM846 683.5h2v2h-2zM843.5 676.5h2v2h-2zM842 686h2v2h-2zM841.5 685.5h2v2h-2zM846 686h2v2h-2zM850 683h2v2h-2zM843.5 687h2v2h-2zM844 686h2v2h-2zM842 687.5h2v2h-2zM849.5 672.5h2v2h-2zM848 681h2v2h-2zM843.5 679h2v2h-2zM842 686h2v2h-2zM846 681h2v2h-2zM846.5 677h2v2h-2zM844.5 678.5h2v2h-2zM846.5 675.5h2v2h-2zM842 685.5h2v2h-2zM846 681.5h2v2h-2zM846 680.5h2v2h-2zM840.5 684h2v2h-2zM849 685.5h2v2h-2zM842 693h2v2h-2zM841 682.5h2v2h-2zM844.5 679.5h2v2h-2zM841.5 679h2v2h-2zM849 674h2v2h-2zM845.5 678.5h2v2h-2zM841.5 683h2v2h-2zM848 684.5h2v2h-2zM846 685.5h2v2h-2zM843.5 683.5h2v2h-2zM849 680.5h2v2h-2zM847.5 674.5h2v2h-2zM842.5 675.5h2v2h-2zM846.5 683.5h2v2h-2zM843 687.5h2v2h-2zM838 685.5h2v2h-2zM843.5 684.5h2v2h-2zM849.5 678.5h2v2h-2zM842 682h2v2h-2zM846 678.5h2v2h-2zM846 677.5h2v2h-2zM846 679.5h2v2h-2zM851 678h2v2h-2zM846 682h2v2h-2zM850.5 678h2v2h-2zM840.5 688.5h2v2h-2zM844 678.5h2v2h-2zM846 676h2v2h-2zM845 689h2v2h-2zM846 677.5h2v2h-2zM871.5 587h2v2h-2zM849 584.5h2v2h-2zM838 589h2v2h-2zM820.5 589h2v2h-2zM869.5 591.5h2v2h-2zM815.5 590h2v2h-2zM867.5 587.5h2v2h-2zM853 584h2v2h-2zM868 594.5h2v2h-2zM824 588.5h2v2h-2zM827 588.5h2v2h-2zM857.5 596h2v2h-2zM851 592.5h2v2h-2zM865 593h2v2h-2zM876.5 602.5h2v2h-2zM863 598h2v2h-2zM861 591.5h2v2h-2zM871 597h2v2h-2zM858 577.5h2v2h-2zM847 582.5h2v2h-2zM841 593.5h2v2h-2zM856 592.5h2v2h-2zM855 593.5h2v2h-2zM872.5 596.5h2v2h-2zM870 585.5h2v2h-2zM828.5 587h2v2h-2zM869.5 596.5h2v2h-2zM842 580h2v2h-2zM842 585.5h2v2h-2zM879.5 600h2v2h-2zM874 599.5h2v2h-2zM862 591h2v2h-2zM848 595.5h2v2h-2zM864 587.5h2v2h-2zM870 582.5h2v2h-2zM840.5 591.5h2v2h-2zM878 581.5h2v2h-2zM870 593.5h2v2h-2zM875 583h2v2h-2zM872.5 595h2v2h-2zM869.5 593h2v2h-2zM851 580h2v2h-2zM834.5 581h2v2h-2zM869.5 579.5h2v2h-2zM865 580h2v2h-2zM863.5 585.5h2v2h-2zM858 584.5h2v2h-2zM863.5 582h2v2h-2zM867 596h2v2h-2zM857 592h2v2h-2zM835.5 582.5h2v2h-2zM866.5 597.5h2v2h-2zM873.5 598.5h2v2h-2zM864.5 580.5h2v2h-2zM877 593h2v2h-2zM860.5 579.5h2v2h-2zM873 592h2v2h-2zM827.5 585h2v2h-2zM866.5 584h2v2h-2zM876 584h2v2h-2zM855.5 581.5h2v2h-2zM862 582.5h2v2h-2zM865 594h2v2h-2zM861.5 598h2v2h-2zM830 589h2v2h-2zM854 582h2v2h-2zM866.5 580.5h2v2h-2zM843.5 594.5h2v2h-2zM868.5 594.5h2v2h-2zM871 594h2v2h-2zM865.5 599h2v2h-2zM853.5 590h2v2h-2zM840.5 583h2v2h-2zM869 580h2v2h-2zM853.5 580h2v2h-2zM871 600h2v2h-2zM870.5 585h2v2h-2zM849.5 584h2v2h-2zM849 582h2v2h-2zM847 589h2v2h-2zM824 590h2v2h-2zM867.5 591h2v2h-2zM834.5 588.5h2v2h-2zM855.5 590.5h2v2h-2zM844.5 589.5h2v2h-2zM842.5 586h2v2h-2zM842.5 580h2v2h-2zM846 583h2v2h-2zM837.5 593h2v2h-2zM866 597h2v2h-2zM861 592.5h2v2h-2zM826.5 589h2v2h-2zM869 597.5h2v2h-2zM853.5 593h2v2h-2zM831.5 586h2v2h-2zM860.5 595h2v2h-2zM871.5 602h2v2h-2zM832.5 581.5h2v2h-2zM823 584h2v2h-2zM852.5 588.5h2v2h-2zM824 590h2v2h-2zM833.5 591h2v2h-2zM861.5 581h2v2h-2zM823.5 589.5h2v2h-2zM841 587.5h2v2h-2zM856 594.5h2v2h-2zM856.5 589.5h2v2h-2zM849.5 587.5h2v2h-2zM832 585.5h2v2h-2zM854 582h2v2h-2zM830 583h2v2h-2zM841 593.5h2v2h-2zM840.5 581.5h2v2h-2zM873 593h2v2h-2zM862 589.5h2v2h-2zM837.5 583h2v2h-2zM872.5 599h2v2h-2zM873 587h2v2h-2zM826 583h2v2h-2zM842 585.5h2v2h-2zM814.5 617.5h2v2h-2zM790.5 607h2v2h-2zM834 638h2v2h-2zM806.5 615h2v2h-2zM825.5 619h2v2h-2zM814.5 606h2v2h-2zM816 616h2v2h-2zM817.5 616h2v2h-2zM810 618.5h2v2h-2zM805.5 609.5h2v2h-2zM818 620.5h2v2h-2zM815 613.5h2v2h-2zM813 612h2v2h-2zM809 610.5h2v2h-2zM799.5 626h2v2h-2zM804 611.5h2v2h-2zM810 621.5h2v2h-2zM813 615h2v2h-2zM817 613.5h2v2h-2zM819 617.5h2v2h-2zM825 612h2v2h-2zM822 618.5h2v2h-2zM802 606h2v2h-2zM800 599.5h2v2h-2zM809 617.5h2v2h-2zM825 606.5h2v2h-2zM812 620h2v2h-2zM818 611.5h2v2h-2zM813.5 601.5h2v2h-2zM809.5 593.5h2v2h-2zM816.5 617.5h2v2h-2zM812.5 605h2v2h-2zM790 612.5h2v2h-2zM806.5 619.5h2v2h-2zM822 597h2v2h-2zM817 598.5h2v2h-2zM814.5 614h2v2h-2zM829.5 601.5h2v2h-2zM794.5 619.5h2v2h-2zM815.5 606.5h2v2h-2zM816.5 606.5h2v2h-2zM819 615.5h2v2h-2zM828 598h2v2h-2zM813 623h2v2h-2zM807 595h2v2h-2zM813.5 603h2v2h-2zM820.5 620.5h2v2h-2zM817 600.5h2v2h-2zM812 605.5h2v2h-2zM796 624h2v2h-2zM796 615.5h2v2h-2zM808 602h2v2h-2zM799 604.5h2v2h-2zM807 622h2v2h-2zM805 593h2v2h-2zM818 606h2v2h-2zM801 606.5h2v2h-2zM811 605h2v2h-2zM808 617.5h2v2h-2zM806 597.5h2v2h-2zM815.5 609.5h2v2h-2zM824.5 615h2v2h-2zM807 604h2v2h-2zM824 610h2v2h-2zM802 611.5h2v2h-2zM817 619.5h2v2h-2zM825 624.5h2v2h-2zM811 627h2v2h-2zM806 614.5h2v2h-2zM819.5 625h2v2h-2zM811 590.5h2v2h-2zM819 614.5h2v2h-2zM818 612h2v2h-2zM810.5 627h2v2h-2zM815.5 600h2v2h-2zM821 614.5h2v2h-2zM819.5 614h2v2h-2zM801.5 614h2v2h-2zM819 615h2v2h-2zM814 599h2v2h-2zM803.5 612h2v2h-2zM819 627.5h2v2h-2zM823 604.5h2v2h-2zM819 601h2v2h-2zM814 611h2v2h-2zM837.5 600h2v2h-2zM817 604.5h2v2h-2zM830 599h2v2h-2zM823.5 591.5h2v2h-2zM821 602.5h2v2h-2zM825 592.5h2v2h-2zM823.5 591.5h2v2h-2zM843 591.5h2v2h-2zM834 610.5h2v2h-2zM836.5 605.5h2v2h-2zM815.5 611h2v2h-2zM831.5 607h2v2h-2zM871 600.5h2v2h-2zM836 598.5h2v2h-2zM837.5 601.5h2v2h-2zM840 603.5h2v2h-2zM829.5 605.5h2v2h-2zM845 600h2v2h-2zM845 599.5h2v2h-2zM826 605.5h2v2h-2zM849.5 606h2v2h-2zM871 602.5h2v2h-2zM841 602.5h2v2h-2zM810 604h2v2h-2zM838 605h2v2h-2zM836.5 605h2v2h-2zM834.5 595h2v2h-2zM839.5 603.5h2v2h-2zM828.5 594h2v2h-2zM837.5 605h2v2h-2zM859.5 604.5h2v2h-2zM843 605h2v2h-2zM830.5 600h2v2h-2zM827.5 603.5h2v2h-2zM848 607.5h2v2h-2zM809 598h2v2h-2zM848 604.5h2v2h-2zM850.5 607.5h2v2h-2zM841 607.5h2v2h-2zM855 603.5h2v2h-2zM826.5 596h2v2h-2zM840.5 611h2v2h-2zM841 603h2v2h-2zM842 600h2v2h-2zM840.5 610.5h2v2h-2zM806 619.5h2v2h-2zM810 624.5h2v2h-2zM810 624.5h2v2h-2zM806.5 621.5h2v2h-2zM805 624.5h2v2h-2zM811 624h2v2h-2zM808.5 618h2v2h-2zM800 624h2v2h-2zM806 611.5h2v2h-2zM806.5 624.5h2v2h-2zM808 617h2v2h-2zM806.5 620h2v2h-2zM805 620h2v2h-2zM808 622.5h2v2h-2zM806 626h2v2h-2zM797 619.5h2v2h-2zM804 627h2v2h-2zM805 625.5h2v2h-2zM806 622.5h2v2h-2zM810 627h2v2h-2zM803.5 616.5h2v2h-2zM804 625.5h2v2h-2zM808.5 623.5h2v2h-2zM810 618.5h2v2h-2zM804.5 627h2v2h-2zM838 606h2v2h-2zM838 611h2v2h-2zM838 616h2v2h-2zM838 620h2v2h-2zM839 626h2v2h-2zM841 627h2v2h-2zM858 605h2v2h-2zM862 608h2v2h-2zM870 613h2v2h-2zM855 600h2v2h-2zM798 634h2v2h-2zM806 635h2v2h-2zM799 636h2v2h-2zM423 885h2v2h-2z" fill="#c2003a"/>
<path d="M829 783h1.5v1.5h-1.5zM836 738.5h1.5v1.5h-1.5zM836.5 804h1.5v1.5h-1.5zM840.5 688h1.5v1.5h-1.5zM837.5 746h1.5v1.5h-1.5zM836.5 702.5h1.5v1.5h-1.5zM844 763.5h1.5v1.5h-1.5zM841 745.5h1.5v1.5h-1.5zM834 763h1.5v1.5h-1.5zM833 687h1.5v1.5h-1.5zM839.5 740.5h1.5v1.5h-1.5zM839.5 701.5h1.5v1.5h-1.5zM833 748.5h1.5v1.5h-1.5zM839.5 738.5h1.5v1.5h-1.5zM838 749.5h1.5v1.5h-1.5zM840.5 694.5h1.5v1.5h-1.5zM836 777.5h1.5v1.5h-1.5zM839.5 777h1.5v1.5h-1.5zM840.5 775h1.5v1.5h-1.5zM840 787h1.5v1.5h-1.5zM836.5 681h1.5v1.5h-1.5zM839 756.5h1.5v1.5h-1.5zM839.5 764.5h1.5v1.5h-1.5zM831.5 765h1.5v1.5h-1.5zM843 759.5h1.5v1.5h-1.5zM837 720h1.5v1.5h-1.5zM840.5 728h1.5v1.5h-1.5zM840 735h1.5v1.5h-1.5zM834.5 767h1.5v1.5h-1.5zM837.5 708.5h1.5v1.5h-1.5zM833 823h1.5v1.5h-1.5zM841 655h1.5v1.5h-1.5zM838.5 747.5h1.5v1.5h-1.5zM837 711.5h1.5v1.5h-1.5zM838.5 831h1.5v1.5h-1.5zM839 701.5h1.5v1.5h-1.5zM838 719h1.5v1.5h-1.5zM836.5 711h1.5v1.5h-1.5zM833 775.5h1.5v1.5h-1.5zM837.5 688.5h1.5v1.5h-1.5zM839 772.5h1.5v1.5h-1.5zM838 746h1.5v1.5h-1.5zM837.5 696.5h1.5v1.5h-1.5zM844 723.5h1.5v1.5h-1.5zM835 763.5h1.5v1.5h-1.5zM838 692h1.5v1.5h-1.5zM840 730.5h1.5v1.5h-1.5zM838 711h1.5v1.5h-1.5zM840.5 808.5h1.5v1.5h-1.5z" fill="#c6b27c"/>
<path d="M836 782.5h1.5v1.5h-1.5zM839.5 694h1.5v1.5h-1.5zM835 715h1.5v1.5h-1.5zM836.5 781h1.5v1.5h-1.5zM838 706.5h1.5v1.5h-1.5zM838 697.5h1.5v1.5h-1.5zM837 805.5h1.5v1.5h-1.5zM837.5 746.5h1.5v1.5h-1.5zM838 659h1.5v1.5h-1.5zM840.5 701.5h1.5v1.5h-1.5zM833.5 753h1.5v1.5h-1.5zM837.5 702.5h1.5v1.5h-1.5zM838 783h1.5v1.5h-1.5zM843 709.5h1.5v1.5h-1.5zM841 736h1.5v1.5h-1.5zM831 726h1.5v1.5h-1.5zM838 705h1.5v1.5h-1.5zM836 720.5h1.5v1.5h-1.5zM837.5 680.5h1.5v1.5h-1.5zM840 744h1.5v1.5h-1.5zM836 809h1.5v1.5h-1.5zM857.5 692h1.5v1.5h-1.5zM872.5 680.5h1.5v1.5h-1.5zM846 731h1.5v1.5h-1.5zM847 666h1.5v1.5h-1.5zM859.5 711h1.5v1.5h-1.5zM855 718h1.5v1.5h-1.5zM861 712h1.5v1.5h-1.5zM842 695h1.5v1.5h-1.5zM861 702h1.5v1.5h-1.5zM852.5 729.5h1.5v1.5h-1.5zM846 681.5h1.5v1.5h-1.5zM850.5 688.5h1.5v1.5h-1.5zM844 728h1.5v1.5h-1.5zM856.5 713h1.5v1.5h-1.5zM860 708h1.5v1.5h-1.5zM853 722h1.5v1.5h-1.5zM857 711.5h1.5v1.5h-1.5zM851.5 705.5h1.5v1.5h-1.5zM851 662.5h1.5v1.5h-1.5zM852.5 710.5h1.5v1.5h-1.5zM842 681h1.5v1.5h-1.5zM859 700h1.5v1.5h-1.5zM846.5 708h1.5v1.5h-1.5zM840 706.5h1.5v1.5h-1.5zM861.5 734.5h1.5v1.5h-1.5zM849.5 674h1.5v1.5h-1.5zM847 726h1.5v1.5h-1.5zM848.5 658.5h1.5v1.5h-1.5zM857.5 710.5h1.5v1.5h-1.5zM860.5 685.5h1.5v1.5h-1.5zM854.5 716.5h1.5v1.5h-1.5zM860 672.5h1.5v1.5h-1.5zM838 666h1.5v1.5h-1.5zM844 664.5h1.5v1.5h-1.5zM841 669h1.5v1.5h-1.5zM840.5 667.5h1.5v1.5h-1.5zM841.5 662h1.5v1.5h-1.5zM845.5 670.5h1.5v1.5h-1.5zM846 662h1.5v1.5h-1.5z" fill="#c2003a"/>
<path d="M841.5 798h1.5v1.5h-1.5zM835.5 775h1.5v1.5h-1.5zM836 828.5h1.5v1.5h-1.5zM838 731.5h1.5v1.5h-1.5zM839 750.5h1.5v1.5h-1.5zM832.5 690h1.5v1.5h-1.5zM840 689.5h1.5v1.5h-1.5zM838 721h1.5v1.5h-1.5zM840.5 677h1.5v1.5h-1.5zM836.5 681.5h1.5v1.5h-1.5zM838.5 749.5h1.5v1.5h-1.5zM837.5 754h1.5v1.5h-1.5zM841.5 738.5h1.5v1.5h-1.5zM839.5 737.5h1.5v1.5h-1.5zM834.5 733h1.5v1.5h-1.5zM839.5 748.5h1.5v1.5h-1.5zM838.5 696h1.5v1.5h-1.5zM846 693.5h1.5v1.5h-1.5zM837.5 788.5h1.5v1.5h-1.5zM838 715h1.5v1.5h-1.5zM852.5 711.5h1.5v1.5h-1.5zM862 722h1.5v1.5h-1.5zM857.5 711h1.5v1.5h-1.5zM848.5 697h1.5v1.5h-1.5zM857 719h1.5v1.5h-1.5zM847 735h1.5v1.5h-1.5zM859 696.5h1.5v1.5h-1.5zM849 690h1.5v1.5h-1.5zM849.5 705.5h1.5v1.5h-1.5zM849.5 655h1.5v1.5h-1.5zM856 669h1.5v1.5h-1.5zM834 714.5h1.5v1.5h-1.5zM867.5 699h1.5v1.5h-1.5zM843.5 662h1.5v1.5h-1.5zM845.5 693h1.5v1.5h-1.5zM841 654.5h1.5v1.5h-1.5zM849 696h1.5v1.5h-1.5zM852.5 691.5h1.5v1.5h-1.5zM855 701.5h1.5v1.5h-1.5zM848.5 719.5h1.5v1.5h-1.5zM852.5 719.5h1.5v1.5h-1.5zM857.5 702.5h1.5v1.5h-1.5zM857.5 685.5h1.5v1.5h-1.5zM854.5 716.5h1.5v1.5h-1.5zM846.5 684h1.5v1.5h-1.5zM851.5 738.5h1.5v1.5h-1.5zM856 701h1.5v1.5h-1.5zM859.5 692h1.5v1.5h-1.5zM843 669h1.5v1.5h-1.5zM844 671h1.5v1.5h-1.5zM842.5 663h1.5v1.5h-1.5zM838.5 658h1.5v1.5h-1.5zM845 661h1.5v1.5h-1.5zM843 661.5h1.5v1.5h-1.5zM848.5 660.5h1.5v1.5h-1.5zM835.5 659h1.5v1.5h-1.5zM843 668.5h1.5v1.5h-1.5zM844 655.5h1.5v1.5h-1.5zM839 662.5h1.5v1.5h-1.5zM846.5 660h1.5v1.5h-1.5zM841.5 657.5h1.5v1.5h-1.5z" fill="#8e5fae"/>
<path d="M847 809h2v2h-2zM867.5 801h2v2h-2zM865.5 804.5h2v2h-2zM839.5 805.5h2v2h-2zM856 802h2v2h-2zM861 800.5h2v2h-2zM848.5 809.5h2v2h-2zM848.5 802h2v2h-2zM850 808.5h2v2h-2zM862 812h2v2h-2zM863 805h2v2h-2zM838.5 805h2v2h-2zM847 800h2v2h-2zM846.5 804.5h2v2h-2zM850.5 809.5h2v2h-2zM843.5 810.5h2v2h-2zM850.5 808.5h2v2h-2zM858.5 799h2v2h-2zM861 801.5h2v2h-2zM852.5 810.5h2v2h-2zM856.5 797h2v2h-2zM851 810.5h2v2h-2zM849 804.5h2v2h-2zM850.5 813h2v2h-2zM846 800.5h2v2h-2zM842.5 802.5h2v2h-2zM848.5 806.5h2v2h-2zM849.5 796.5h2v2h-2zM839 808.5h2v2h-2zM855 798h2v2h-2zM856.5 793h2v2h-2zM866 808h2v2h-2zM838.5 807.5h2v2h-2zM849.5 802.5h2v2h-2zM847.5 804h2v2h-2zM849.5 800.5h2v2h-2zM846 808h2v2h-2zM853.5 798.5h2v2h-2zM846.5 813h2v2h-2zM855 813.5h2v2h-2zM840.5 800h2v2h-2zM835 795.5h2v2h-2zM847.5 799.5h2v2h-2zM842.5 801.5h2v2h-2zM848.5 809h2v2h-2zM860.5 581h2v2h-2zM855.5 591h2v2h-2zM842.5 590.5h2v2h-2zM862 580.5h2v2h-2zM842.5 592.5h2v2h-2zM864.5 590.5h2v2h-2zM845.5 592h2v2h-2zM866 595.5h2v2h-2zM858.5 587.5h2v2h-2zM843 590.5h2v2h-2zM846.5 580.5h2v2h-2zM842.5 588.5h2v2h-2zM860.5 580h2v2h-2zM871 588.5h2v2h-2zM842.5 583h2v2h-2zM875.5 594.5h2v2h-2z" fill="#000"/>
<path d="M881 587h2v2h-2zM883 584h2v2h-2zM886 582h2v2h-2zM888 581h2v2h-2zM890 584h2v2h-2zM889 588h2v2h-2zM888 591h2v2h-2zM886 592h2v2h-2zM888 595h2v2h-2zM891 597h2v2h-2zM893 599h2v2h-2zM896 602h2v2h-2zM899 604h2v2h-2zM901 603h2v2h-2zM903 605h2v2h-2zM905 607h2v2h-2zM907 609h2v2h-2zM905 612h2v2h-2zM903 613h2v2h-2zM888 603h2v2h-2zM890 606h2v2h-2zM888 609h2v2h-2zM893 589h2v2h-2zM896 590h2v2h-2zM884 590h2v2h-2zM898 600h2v2h-2zM901 601h2v2h-2zM904 600h2v2h-2zM906 602h2v2h-2zM909 586h2v2h-2zM921 584h2v2h-2zM923 582h2v2h-2zM925 581h2v2h-2zM931 580h2v2h-2zM913 593h2v2h-2zM913 596h2v2h-2zM910 596h2v2h-2zM917 599h2v2h-2zM918 602h2v2h-2zM919 604h2v2h-2zM920 594h2v2h-2zM923 595h2v2h-2zM913 608h2v2h-2zM914 611h2v2h-2zM906 615h2v2h-2zM912 580h2v2h-2zM914 579h2v2h-2zM934 580h2v2h-2z" fill="#cdbd88"/>
<path d="M939 571h2.2v2.2h-2.2z" fill="#ffd000"/>
<path d="M927 595.5h2v2h-2zM708 819h2v2h-2z" fill="#8e5fae"/>
<path d="M797 640h1.8v1.8h-1.8zM806 644h1.8v1.8h-1.8zM800 651h1.8v1.8h-1.8zM818 641h1.8v1.8h-1.8zM819 648h1.8v1.8h-1.8zM803 663h1.8v1.8h-1.8zM811 678h1.8v1.8h-1.8zM815 718h1.8v1.8h-1.8zM818 753h1.8v1.8h-1.8zM814 721h1.8v1.8h-1.8zM251 901h1.8v1.8h-1.8z" fill="#c2003a"/>
<path d="M861 653h1.8v1.8h-1.8z" fill="#ffd000"/>
<path d="M912 688h1.8v1.8h-1.8zM900 694h1.8v1.8h-1.8zM911 701h1.8v1.8h-1.8zM903 706h1.8v1.8h-1.8zM876 713h1.8v1.8h-1.8zM889 734h1.8v1.8h-1.8zM895 742h1.8v1.8h-1.8zM874 746h1.8v1.8h-1.8zM777 731h1.8v1.8h-1.8zM787 758h1.8v1.8h-1.8zM923 661h1.8v1.8h-1.8zM913 665h1.8v1.8h-1.8zM717 887h1.8v1.8h-1.8zM719 894h1.8v1.8h-1.8zM716 900h1.8v1.8h-1.8zM721 908h1.8v1.8h-1.8zM740 895h1.8v1.8h-1.8zM755 899h1.8v1.8h-1.8zM757 901h1.8v1.8h-1.8zM763 894h1.8v1.8h-1.8z" fill="#cfc08a"/>
<path d="M792 897h1.8v1.8h-1.8zM720 828h1.8v1.8h-1.8z" fill="#8e5fae"/>
<path d="M326 890h2.4v2.4h-2.4z" fill="#c2003a"/>
<path d="M405 886h1.8v1.8h-1.8z" fill="#ffa000"/>
</g>
<path d="M100 559V938M139 559V938M178 559V938M217 559V938M256 559V938M295 559V938M334 559V938M373 559V938M412 559V938M451 559V938M490 559V938M529 559V938M568 559V938M607 559V938M646 559V938M685 559V938M724 559V938M762 559V938M801 559V938M840 559V938M879 559V938M918 559V938M957 559V938M996 559V938M1035 559V938M1074 559V938M1113 559V938M1152 559V938M1191 559V938M1230 559V938M1269 559V938M1308 559V938M1347 559V938M1386 559V938M1425 559V938M1464 559V938M1503 559V938M99 560H1506M99 579H1506M99 597H1506M99 616H1506M99 634H1506M99 653H1506M99 671H1506M99 690H1506M99 708H1506M99 727H1506M99 746H1506M99 764H1506M99 783H1506M99 801H1506M99 820H1506M99 838H1506M99 857H1506M99 876H1506M99 894H1506M99 913H1506M99 931H1506" stroke="#fff" stroke-opacity="0.115" stroke-width="2" stroke-dasharray="3 3" fill="none" shape-rendering="crispEdges"/>
<rect x="95.500" y="555.500" width="1411" height="383" fill="none" stroke="#a0a0a0" stroke-width="1"/>
<g font-family="Liberation Sans, sans-serif" font-size="10" fill="#8a8a8a">
<text x="85.500" y="565.5" text-anchor="end" textLength="17.2" lengthAdjust="spacingAndGlyphs">4.80</text>
<text x="85.500" y="584.5" text-anchor="end" textLength="17.2" lengthAdjust="spacingAndGlyphs">5.00</text>
<text x="85.500" y="602.5" text-anchor="end" textLength="17.2" lengthAdjust="spacingAndGlyphs">5.20</text>
<text x="85.500" y="621.5" text-anchor="end" textLength="17.2" lengthAdjust="spacingAndGlyphs">5.40</text>
<text x="85.500" y="639.5" text-anchor="end" textLength="17.2" lengthAdjust="spacingAndGlyphs">5.60</text>
<text x="85.500" y="658.5" text-anchor="end" textLength="17.2" lengthAdjust="spacingAndGlyphs">5.80</text>
<text x="85.500" y="676.5" text-anchor="end" textLength="17.2" lengthAdjust="spacingAndGlyphs">6.00</text>
<text x="85.500" y="695.5" text-anchor="end" textLength="17.2" lengthAdjust="spacingAndGlyphs">6.20</text>
<text x="85.500" y="713.5" text-anchor="end" textLength="17.2" lengthAdjust="spacingAndGlyphs">6.40</text>
<text x="85.500" y="732.5" text-anchor="end" textLength="17.2" lengthAdjust="spacingAndGlyphs">6.60</text>
<text x="85.500" y="751.5" text-anchor="end" textLength="17.2" lengthAdjust="spacingAndGlyphs">6.80</text>
<text x="85.500" y="769.5" text-anchor="end" textLength="17.2" lengthAdjust="spacingAndGlyphs">7.00</text>
<text x="85.500" y="788.5" text-anchor="end" textLength="17.2" lengthAdjust="spacingAndGlyphs">7.20</text>
<text x="85.500" y="806.5" text-anchor="end" textLength="17.2" lengthAdjust="spacingAndGlyphs">7.40</text>
<text x="85.500" y="825.5" text-anchor="end" textLength="17.2" lengthAdjust="spacingAndGlyphs">7.60</text>
<text x="85.500" y="843.5" text-anchor="end" textLength="17.2" lengthAdjust="spacingAndGlyphs">7.80</text>
<text x="85.500" y="862.5" text-anchor="end" textLength="17.2" lengthAdjust="spacingAndGlyphs">8.00</text>
<text x="85.500" y="881.5" text-anchor="end" textLength="17.2" lengthAdjust="spacingAndGlyphs">8.20</text>
<text x="85.500" y="899.5" text-anchor="end" textLength="17.2" lengthAdjust="spacingAndGlyphs">8.40</text>
<text x="85.500" y="918.5" text-anchor="end" textLength="17.2" lengthAdjust="spacingAndGlyphs">8.60</text>
<text x="85.500" y="936.5" text-anchor="end" textLength="17.2" lengthAdjust="spacingAndGlyphs">8.80</text>
<text x="90.4" y="953.400" textLength="19.8" lengthAdjust="spacingAndGlyphs">-18.0</text>
<text x="129.4" y="953.400" textLength="19.8" lengthAdjust="spacingAndGlyphs">-17.0</text>
<text x="168.4" y="953.400" textLength="19.8" lengthAdjust="spacingAndGlyphs">-16.0</text>
<text x="207.4" y="953.400" textLength="19.8" lengthAdjust="spacingAndGlyphs">-15.0</text>
<text x="246.4" y="953.400" textLength="19.8" lengthAdjust="spacingAndGlyphs">-14.0</text>
<text x="285.4" y="953.400" textLength="19.8" lengthAdjust="spacingAndGlyphs">-13.0</text>
<text x="324.4" y="953.400" textLength="19.8" lengthAdjust="spacingAndGlyphs">-12.0</text>
<text x="363.4" y="953.400" textLength="19.8" lengthAdjust="spacingAndGlyphs">-11.0</text>
<text x="402.4" y="953.400" textLength="19.8" lengthAdjust="spacingAndGlyphs">-10.0</text>
<text x="443.8" y="953.400" textLength="15.0" lengthAdjust="spacingAndGlyphs">-9.0</text>
<text x="482.8" y="953.400" textLength="15.0" lengthAdjust="spacingAndGlyphs">-8.0</text>
<text x="521.8" y="953.400" textLength="15.0" lengthAdjust="spacingAndGlyphs">-7.0</text>
<text x="560.8" y="953.400" textLength="15.0" lengthAdjust="spacingAndGlyphs">-6.0</text>
<text x="599.8" y="953.400" textLength="15.0" lengthAdjust="spacingAndGlyphs">-5.0</text>
<text x="638.8" y="953.400" textLength="15.0" lengthAdjust="spacingAndGlyphs">-4.0</text>
<text x="677.8" y="953.400" textLength="15.0" lengthAdjust="spacingAndGlyphs">-3.0</text>
<text x="716.8" y="953.400" textLength="15.0" lengthAdjust="spacingAndGlyphs">-2.0</text>
<text x="754.8" y="953.400" textLength="15.0" lengthAdjust="spacingAndGlyphs">-1.0</text>
<text x="796.0" y="953.400" textLength="12.1" lengthAdjust="spacingAndGlyphs">0.0</text>
<text x="835.0" y="953.400" textLength="12.1" lengthAdjust="spacingAndGlyphs">1.0</text>
<text x="874.0" y="953.400" textLength="12.1" lengthAdjust="spacingAndGlyphs">2.0</text>
<text x="913.0" y="953.400" textLength="12.1" lengthAdjust="spacingAndGlyphs">3.0</text>
<text x="952.0" y="953.400" textLength="12.1" lengthAdjust="spacingAndGlyphs">4.0</text>
<text x="991.0" y="953.400" textLength="12.1" lengthAdjust="spacingAndGlyphs">5.0</text>
<text x="1030.0" y="953.400" textLength="12.1" lengthAdjust="spacingAndGlyphs">6.0</text>
<text x="1069.0" y="953.400" textLength="12.1" lengthAdjust="spacingAndGlyphs">7.0</text>
<text x="1108.0" y="953.400" textLength="12.1" lengthAdjust="spacingAndGlyphs">8.0</text>
<text x="1147.0" y="953.400" textLength="12.1" lengthAdjust="spacingAndGlyphs">9.0</text>
<text x="1183.5" y="953.400" textLength="16.9" lengthAdjust="spacingAndGlyphs">10.0</text>
<text x="1222.5" y="953.400" textLength="16.9" lengthAdjust="spacingAndGlyphs">11.0</text>
<text x="1261.5" y="953.400" textLength="16.9" lengthAdjust="spacingAndGlyphs">12.0</text>
<text x="1300.5" y="953.400" textLength="16.9" lengthAdjust="spacingAndGlyphs">13.0</text>
<text x="1339.5" y="953.400" textLength="16.9" lengthAdjust="spacingAndGlyphs">14.0</text>
<text x="1378.5" y="953.400" textLength="16.9" lengthAdjust="spacingAndGlyphs">15.0</text>
<text x="1417.5" y="953.400" textLength="16.9" lengthAdjust="spacingAndGlyphs">16.0</text>
<text x="1456.5" y="953.400" textLength="16.9" lengthAdjust="spacingAndGlyphs">17.0</text>
<text x="1495.5" y="953.400" textLength="16.9" lengthAdjust="spacingAndGlyphs">18.0</text>
<text x="759" y="975" font-size="10" fill="#6c6c6c" textLength="84" lengthAdjust="spacingAndGlyphs">Slice Across Track (m)</text>
<text transform="translate(37.500 765) rotate(-90)" font-size="10" fill="#8c8c8c" textLength="38" lengthAdjust="spacingAndGlyphs">Depth (m)</text>
</g>
</svg>
<div class="t" id="t0" style="left:0.4px;top:25.6px;transform:scaleX(1.0688);transform-origin:0 0;"><u>E</u>xport</div>
<div class="t" id="t1" style="left:47.8px;top:25.6px;transform:scaleX(1.1446);transform-origin:0 0;"><u>W</u>indow</div>
<div class="t" id="t2" style="left:105.4px;top:25.6px;transform:scaleX(1.1042);transform-origin:0 0;"><u>H</u>elp</div>
<div class="t" id="t3" style="left:179.8px;top:54.2px;transform:scaleX(1.1356);transform-origin:0 0;">Shift</div>
<div class="t" id="t4" style="left:359.8px;top:54.2px;transform:scaleX(1.0398);transform-origin:0 0;">No exclusion mask</div>
<div class="t" id="t5" style="left:660.4px;top:54.2px;transform:scaleX(1.1479);transform-origin:0 0;">Width:</div>
<div class="t" id="t6" style="left:713.4px;top:54.2px;transform:scaleX(1.0923);transform-origin:0 0;">32.9</div>
<div class="t" id="t7" style="left:757.8px;top:54.2px;transform:scaleX(1.1016);transform-origin:0 0;">Height:</div>
<div class="t" id="t8" style="left:820.4px;top:54.2px;transform:scaleX(1.0721);transform-origin:0 0;">3.8</div>
<div class="t" id="t9" style="left:882.8px;top:54.2px;transform:scaleX(1.0897);transform-origin:0 0;">Apply</div>
<div class="t" id="t10" style="left:1358.8px;top:84.2px;transform:scaleX(0.9899);transform-origin:0 0;">Project Layers</div>
<div class="t" id="t11" style="left:1277.8px;top:108.2px;transform:scaleX(1.0410);transform-origin:0 0;">Vertical Exaggeration:</div>
<div class="t" id="t12" style="left:1510.4px;top:108.2px;transform:scaleX(1.1697);transform-origin:0 0;">3<span style="font-size:10px;color:#555">×</span></div>
<div class="t" id="t13" style="left:1302.0px;top:134.2px;font-weight:bold;transform:scaleX(0.9624);transform-origin:0 0;">Dynamic Surfaces</div>
<div class="t" id="t14" style="left:1322.0px;top:149.8px;transform:scaleX(1.0076);transform-origin:0 0;">Dynamic Surface</div>
<div class="t" id="t15" style="left:1302.0px;top:165.6px;font-weight:bold;transform:scaleX(0.9411);transform-origin:0 0;">Static Surfaces</div>
<div class="t" id="t16" style="left:1302.0px;top:181.2px;font-weight:bold;transform:scaleX(0.9816);transform-origin:0 0;">PFM Objects</div>
<div class="t" id="t17" style="left:1293.0px;top:220.8px;transform:scaleX(1.0193);transform-origin:0 0;">Depth Layer:</div>
<div class="t" id="t18" style="left:1310.8px;top:248.6px;transform:scaleX(1.0538);transform-origin:0 0;">Color by:</div>
<div class="t" id="t19" style="left:1303.8px;top:276.2px;transform:scaleX(1.0522);transform-origin:0 0;">Colormap:</div>
<div class="t" id="t20" style="left:1289.8px;top:303.8px;transform:scaleX(1.1132);transform-origin:0 0;">Highlight by:</div>
<div class="t" id="t21" style="left:1299.4px;top:331.6px;transform:scaleX(1.0738);transform-origin:0 0;">Rendering:</div>
<div class="t" id="t22" style="left:1310.8px;top:359.2px;transform:scaleX(1.0682);transform-origin:0 0;">Shading:</div>
<div class="t" id="t23" style="left:1286.4px;top:386.8px;transform:scaleX(1.0128);transform-origin:0 0;">Transparency:</div>
<div class="t" id="t24" style="left:1322.0px;top:414.8px;transform:scaleX(1.0931);transform-origin:0 0;">Offset:</div>
<div class="t" id="t25" style="left:1315.8px;top:442.6px;transform:scaleX(1.0745);transform-origin:0 0;">Update:</div>
<div class="t" id="t26" style="left:1368.0px;top:220.8px;transform:scaleX(1.0152);transform-origin:0 0;">Average</div>
<div class="t" id="t27" style="left:1368.0px;top:248.6px;transform:scaleX(1.0944);transform-origin:0 0;">Height</div>
<div class="t" id="t28" style="left:1368.0px;top:303.8px;transform:scaleX(1.0724);transform-origin:0 0;">None</div>
<div class="t" id="t29" style="left:1368.0px;top:331.6px;transform:scaleX(1.0191);transform-origin:0 0;">Shaded Surface</div>
<div class="t" id="t30" style="left:1416.8px;top:359.2px;transform:scaleX(0.9935);transform-origin:0 0;">Parameters...</div>
<div class="t" id="t31" style="left:1500.4px;top:386.8px;transform:scaleX(1.0310);transform-origin:0 0;">0%</div>
<div class="t" id="t32" style="left:1493.4px;top:414.8px;transform:scaleX(1.0923);transform-origin:0 0;">0.00</div>
<div class="t" id="t33" style="left:1368.0px;top:442.6px;transform:scaleX(1.0160);transform-origin:0 0;">Always</div>
<div class="t" id="t34" style="left:733.0px;top:485.2px;transform:scaleX(1.0388);transform-origin:0 0;">Slice Editor</div>
<div class="t" id="t35" style="left:1379.8px;top:513.2px;transform:scaleX(0.9737);transform-origin:0 0;">Exag:</div>
<div class="t" id="t36" style="left:1448.4px;top:513.2px;transform:scaleX(1.0923);transform-origin:0 0;">2.38</div>
<div class="t" id="t37" style="left:-1.1px;top:1021.2px;transform:scaleX(0.9703);transform-origin:0 0;">&quot;, -4°22'25.61&quot; (WGS 84)</div>
<div class="t" id="t38" style="left:129.0px;top:1021.2px;transform:scaleX(1.0534);transform-origin:0 0;">Height: -6.596</div>
<div class="t" id="t39" style="left:732.4px;top:1021.2px;transform:scaleX(1.0639);transform-origin:0 0;">Auto Import: OFF</div>
<div class="t" id="t40" style="left:1306.4px;top:1021.2px;transform:scaleX(1.0544);transform-origin:0 0;">Tiles Loading:</div>
<div class="t" id="t41" style="left:1398.2px;top:1021.2px;transform:scaleX(1.1429);transform-origin:0 0;">0</div>
<div class="t" id="t42" style="left:1506.9px;top:1023.0px;transform:scaleX(1.0065);transform-origin:0 0;">827.4 MB</div>
<!-- icons -->
<svg style="left:0;top:0" width="1590" height="1040" viewBox="0 0 1590 1040">
<g><path d="M3.20 49.60h6.60v4.80l-3.30 4.60l-3.30 -4.60Z" fill="#fff" stroke="#2a2a2a" stroke-width="0.9" stroke-linejoin="round"/><rect x="3.20" y="49.60" width="6.60" height="4.60" fill="#2a2a2a"/><path d="M5.58 50.20v3.60M7.42 50.20v3.60" stroke="#999" stroke-width="0.7"/><path d="M5.20 57.20l1.30 1.80l1.30 -1.80Z" fill="#2a2a2a"/></g>
<circle cx="12.4" cy="59" r="1.25" fill="#2a2a2a"/>
<path d="M15.15 61.48A3.70 3.70 0 0 1 9.65 61.48" fill="none" stroke="#2a2a2a" stroke-width="1.45"/>
<path d="M17.23 63.35A6.50 6.50 0 0 1 7.57 63.35" fill="none" stroke="#2a2a2a" stroke-width="1.45"/>
<path d="M19.31 65.22A9.30 9.30 0 0 1 5.49 65.22" fill="none" stroke="#2a2a2a" stroke-width="1.45"/>
<g><path d="M34.90 49.90h6.60v4.80l-3.30 4.60l-3.30 -4.60Z" fill="#fff" stroke="#2a2a2a" stroke-width="0.9" stroke-linejoin="round"/><rect x="34.90" y="49.90" width="6.60" height="4.60" fill="#2a2a2a"/><path d="M37.28 50.50v3.60M39.12 50.50v3.60" stroke="#999" stroke-width="0.7"/><path d="M36.90 57.50l1.30 1.80l1.30 -1.80Z" fill="#2a2a2a"/></g>
<path d="M33 65.500l8-4l5 2l4-3l4 5.500l-9 1.500l-4 2.500z" fill="none" stroke="#c4c4c4" stroke-width="0.8"/>
<path d="M36.500 62.300l4.300-1.700c1.500 1.300 2 3.700 3.200 5c0.800 0.800 1.700 1.200 2.600 1.500l-3.600 2.300c-1.500-0.500-2.300-1.800-3-3.400c-0.700-1.800-1.800-3.200-3.500-3.700z" fill="#e4e4e4" stroke="#2a2a2a" stroke-width="1" stroke-linejoin="round"/>
<path d="M38.800 63.500l4-1.800M41 66.800l3.800-2" stroke="#2a2a2a" stroke-width="0.7" fill="none"/>
<g><path d="M66.00 49.90h6.60v4.80l-3.30 4.60l-3.30 -4.60Z" fill="#fff" stroke="#2a2a2a" stroke-width="0.9" stroke-linejoin="round"/><rect x="66.00" y="49.90" width="6.60" height="4.60" fill="#2a2a2a"/><path d="M68.38 50.50v3.60M70.22 50.50v3.60" stroke="#999" stroke-width="0.7"/><path d="M68.00 57.50l1.30 1.80l1.30 -1.80Z" fill="#2a2a2a"/></g>
<path d="M63.700 64.200c3-1.500 5-3 8-4.200c3-1.200 4.500-1 7-1.800l5.300 6c-2.500 1-4.500 1-7 2.500c-2.500 1.300-3 2.300-5 3z" fill="none" stroke="#2a2a2a" stroke-width="1" stroke-linejoin="round"/>
<path d="M66.500 62.800l5 6M69.500 61.200l5 6.200M72.700 59.600l5.300 6.500M75.700 58.900l5.300 6.200M66 66l11-6.200M68.800 68l12-6.200" fill="none" stroke="#2a2a2a" stroke-width="0.8"/>
<path d="M115.800 49.600L121.800 61L112.900 70L101.400 57.400Z" fill="#a6dfa6" stroke="#1a1a1a" stroke-width="1.5" stroke-dasharray="1.4 1.5"/>
<path d="M108.300 59.800h7.500M112 56v7.500" stroke="#1a1a1a" stroke-width="1.6" fill="none"/>
<path d="M117.80 69.20l3.80 3.80l3.80 -3.80" fill="none" stroke="#1a1a1a" stroke-width="1.70"/>
<g><path d="M148.90 50.00h5.81v4.22l-2.90 4.05l-2.90 -4.05Z" fill="#fff" stroke="#2a2a2a" stroke-width="0.9" stroke-linejoin="round"/><rect x="148.90" y="50.00" width="5.81" height="4.05" fill="#2a2a2a"/><path d="M150.99 50.60v3.17M152.62 50.60v3.17" stroke="#999" stroke-width="0.7"/><path d="M150.66 56.69l1.14 1.58l1.14 -1.58Z" fill="#2a2a2a"/></g>
<path d="M155.400 57.400h13.300l-5.700 5.600v4.200l-3 2.800v-7z" fill="#2a2a2a"/>
<circle cx="164.600" cy="63.400" r="1.700" fill="#f4f4f4" stroke="#2a2a2a" stroke-width="1.100"/>
<path d="M485 50h10.500l-4 4.200v4.800l-2.300-1v-3.800z" fill="#b9b9b9"/>
<circle cx="493.600" cy="54.200" r="1.400" fill="#f6f6f6" stroke="#b9b9b9" stroke-width="0.7"/>
<rect x="493.600" y="58.800" width="11" height="10.600" fill="#dedede" stroke="#b9b9b9" stroke-width="1.2" stroke-dasharray="1.6 1.4"/>
<circle cx="499" cy="64.200" r="1" fill="#b9b9b9"/>
<path d="M516 50h10.500l-4 4.200v4.800l-2.300-1v-3.800z" fill="#b9b9b9"/>
<circle cx="524.600" cy="54.200" r="1.400" fill="#f6f6f6" stroke="#b9b9b9" stroke-width="0.7"/>
<g stroke="#b9b9b9" stroke-width="1.4" fill="#b9b9b9"><path d="M528.500 62.500l-3.500-3.500M531.500 62.500l3.500-3.500M528.500 65.500l-3.500 3.500M531.500 65.500l3.500 3.500" fill="none"/><path d="M524.300 58.300h3.200l-3.200 3.200zM535.700 58.300h-3.200l3.200 3.200zM524.300 69.700h3.200l-3.200-3.200zM535.700 69.700h-3.200l3.200-3.200z" stroke="none"/></g>
<circle cx="564.3" cy="61.8" r="1.75" fill="#1f1f1f"/>
<circle cx="568.3" cy="58.8" r="1.75" fill="#1f1f1f"/>
<circle cx="572.8" cy="57.8" r="1.75" fill="#1f1f1f"/>
<circle cx="576.0" cy="62.2" r="1.75" fill="#1f1f1f"/>
<circle cx="579.6" cy="59.5" r="1.75" fill="#1f1f1f"/>
<circle cx="593.800" cy="59.900" r="0.800" fill="#1f1f1f"/><circle cx="598.600" cy="59.900" r="2.100" fill="#1f1f1f"/><circle cx="605.800" cy="59.900" r="4" fill="#1f1f1f"/>
<path d="M605.70 68.30l3.80 3.80l3.80 -3.80" fill="none" stroke="#1a1a1a" stroke-width="1.70"/>
<defs><linearGradient id="cg" x1="0" y1="0" x2="1" y2="0"><stop offset="0" stop-color="#f04a10"/><stop offset="0.25" stop-color="#d08020"/><stop offset="0.5" stop-color="#38b048"/><stop offset="0.75" stop-color="#2080b0"/><stop offset="1" stop-color="#2050c8"/></linearGradient></defs>
<rect x="622" y="56.300" width="15.600" height="7" fill="url(#cg)" stroke="#222" stroke-width="1"/>
<path d="M634.60 68.30l3.80 3.80l3.80 -3.80" fill="none" stroke="#1a1a1a" stroke-width="1.70"/>
<path d="M971.51 53.93L971.51 56.07L969.87 56.07L969.32 57.40L970.47 58.57L968.97 60.07L967.80 58.92L966.47 59.47L966.47 61.11L964.33 61.11L964.33 59.47L963.00 58.92L961.83 60.07L960.33 58.57L961.48 57.40L960.93 56.07L959.29 56.07L959.29 53.93L960.93 53.93L961.48 52.60L960.33 51.43L961.83 49.93L963.00 51.08L964.33 50.53L964.33 48.89L966.47 48.89L966.47 50.53L967.80 51.08L968.97 49.93L970.47 51.43L969.32 52.60L969.87 53.93ZM962.90 55.00a2.50 2.50 0 1 0 5.00 0a2.50 2.50 0 1 0 -5.00 0Z" fill="#2a2a2a" fill-rule="evenodd"/>
<path d="M982.40 62.80L982.40 65.20L980.56 65.21L979.93 66.72L981.23 68.03L979.53 69.73L978.22 68.43L976.71 69.06L976.70 70.90L974.30 70.90L974.29 69.06L972.78 68.43L971.47 69.73L969.77 68.03L971.07 66.72L970.44 65.21L968.60 65.20L968.60 62.80L970.44 62.79L971.07 61.28L969.77 59.97L971.47 58.27L972.78 59.57L974.29 58.94L974.30 57.10L976.70 57.10L976.71 58.94L978.22 59.57L979.53 58.27L981.23 59.97L979.93 61.28L980.56 62.79ZM972.50 64.00a3.00 3.00 0 1 0 6.00 0a3.00 3.00 0 1 0 -6.00 0Z" fill="#2a2a2a" fill-rule="evenodd"/>
<path d="M994.500 54.800v10.500l9.200-5.250zM1004.200 54.800v10.500l9.200-5.250z" fill="#2a2a2a"/>
<path d="M1046.900 54.800v10.500l-9.200-5.250zM1037.200 54.800v10.500l-9.200-5.250z" fill="#2a2a2a"/>
<path d="M1068.03 52.74L1068.03 54.46L1066.70 54.46L1066.25 55.53L1067.19 56.48L1065.98 57.69L1065.03 56.75L1063.96 57.20L1063.96 58.53L1062.24 58.53L1062.24 57.20L1061.17 56.75L1060.22 57.69L1059.01 56.48L1059.95 55.53L1059.50 54.46L1058.17 54.46L1058.17 52.74L1059.50 52.74L1059.95 51.67L1059.01 50.72L1060.22 49.51L1061.17 50.45L1062.24 50.00L1062.24 48.67L1063.96 48.67L1063.96 50.00L1065.03 50.45L1065.98 49.51L1067.19 50.72L1066.25 51.67L1066.70 52.74ZM1061.10 53.60a2.00 2.00 0 1 0 4.00 0a2.00 2.00 0 1 0 -4.00 0Z" fill="#2a2a2a" fill-rule="evenodd"/>
<path d="M1077.61 59.93L1077.61 62.07L1075.97 62.07L1075.42 63.40L1076.57 64.57L1075.07 66.07L1073.90 64.92L1072.57 65.47L1072.57 67.11L1070.43 67.11L1070.43 65.47L1069.10 64.92L1067.93 66.07L1066.43 64.57L1067.58 63.40L1067.03 62.07L1065.39 62.07L1065.39 59.93L1067.03 59.93L1067.58 58.60L1066.43 57.43L1067.93 55.93L1069.10 57.08L1070.43 56.53L1070.43 54.89L1072.57 54.89L1072.57 56.53L1073.90 57.08L1075.07 55.93L1076.57 57.43L1075.42 58.60L1075.97 59.93ZM1068.90 61.00a2.60 2.60 0 1 0 5.20 0a2.60 2.60 0 1 0 -5.20 0Z" fill="#2a2a2a" fill-rule="evenodd"/>
<path d="M1067.500 52.300h12.200v17.200h-18.200v-9" fill="none" stroke="#2a2a2a" stroke-width="1.1" stroke-dasharray="2 1.6"/>
<rect x="1564.500" y="100.700" width="13" height="12.600" rx="1.500" fill="#fff" stroke="#555" stroke-width="1.200"/>
<path d="M1568.800 100.700v12.600M1573.200 100.700v12.600M1564.500 104.900h13M1564.500 109.100h13" stroke="#555" stroke-width="1.100"/>
<rect x="1556.500" y="123.500" width="29" height="28" rx="3" fill="#dcdcdc" stroke="#b4b4b4"/>
<path d="M1570.800 131.900l10 5l-10 5l-10-5zM1567.500 133.600l10 5M1564.100 135.200l10 5M1574.100 133.600l-10 5M1577.500 135.200l-10 5" fill="none" stroke="#2a2a2a" stroke-width="1"/>
<path d="M1562 156.500h18M1562 223.500h18M1562 447.500h18M1562 544.500h18" stroke="#d0d0d0" stroke-width="1"/>
<path d="M1560.8 163.6L1563.5 166.3" stroke="#2a2a2a" stroke-width="1.300"/><path d="M1565.6 168.4L1561.4 168.0L1565.2 164.2z" fill="#2a2a2a"/><path d="M1581.6 163.6L1578.9 166.3" stroke="#2a2a2a" stroke-width="1.300"/><path d="M1576.8 168.4L1581.0 168.0L1577.2 164.2z" fill="#2a2a2a"/><path d="M1560.8 184.0L1563.5 181.3" stroke="#2a2a2a" stroke-width="1.300"/><path d="M1565.6 179.2L1561.4 179.6L1565.2 183.4z" fill="#2a2a2a"/><path d="M1581.6 184.0L1578.9 181.3" stroke="#2a2a2a" stroke-width="1.300"/><path d="M1576.8 179.2L1581.0 179.6L1577.2 183.4z" fill="#2a2a2a"/>
<path d="M1565 169.500c2-1 4-1.500 6-0.500c2 1 4 1 6-0.500v9l-6 3.500l-6-3.500z" fill="#fff" stroke="#2a2a2a" stroke-width="0.9"/>
<path d="M1567 168.800v9.800M1569 168.800v11M1571 169.200v8.300M1573 169.700v8M1575 169.400v9.600M1565 171.500c2-1 4-1.500 6-0.500c2 1 4 1 6-0.500M1565 173.700c2-1 4-1.500 6-0.500c2 1 4 1 6-0.500M1565 175.900c2-1 4-1.500 6-0.500c2 1 4 1 6-0.500" fill="none" stroke="#2a2a2a" stroke-width="0.6"/>
<path d="M1560.8 193.6L1563.5 196.3" stroke="#2a2a2a" stroke-width="1.300"/><path d="M1565.6 198.4L1561.4 198.0L1565.2 194.2z" fill="#2a2a2a"/><path d="M1581.6 193.6L1578.9 196.3" stroke="#2a2a2a" stroke-width="1.300"/><path d="M1576.8 198.4L1581.0 198.0L1577.2 194.2z" fill="#2a2a2a"/><path d="M1560.8 214.0L1563.5 211.3" stroke="#2a2a2a" stroke-width="1.300"/><path d="M1565.6 209.2L1561.4 209.6L1565.2 213.4z" fill="#2a2a2a"/><path d="M1581.6 214.0L1578.9 211.3" stroke="#2a2a2a" stroke-width="1.300"/><path d="M1576.8 209.2L1581.0 209.6L1577.2 213.4z" fill="#2a2a2a"/>
<path d="M1571.200 197.300l6 3v7l-6 3.300l-6-3.300v-7zM1565.200 200.300l6 3.200l6-3.200M1571.200 203.500v7" fill="#fff" stroke="#2a2a2a" stroke-width="1" stroke-linejoin="round"/>
<path d="M1566.800 233.800v12.400l3.100-2.700l2.600 5.400l2.300-1.100l-2.600-5.300l4.200-0.300z" fill="#111"/>
<rect x="1556.500" y="264" width="29" height="28" rx="3" fill="#dcdcdc" stroke="#b4b4b4"/>
<rect x="1563.200" y="270.200" width="15.600" height="15.600" fill="none" stroke="#111" stroke-width="1.800" stroke-dasharray="1.700 1.420" stroke-dashoffset="-2.4"/>
<circle cx="1563.2" cy="270.2" r="1.500" fill="#dcdcdc" stroke="#1a1a1a" stroke-width="0.9"/>
<circle cx="1578.8" cy="270.2" r="1.500" fill="#dcdcdc" stroke="#1a1a1a" stroke-width="0.9"/>
<circle cx="1563.2" cy="285.8" r="1.500" fill="#dcdcdc" stroke="#1a1a1a" stroke-width="0.9"/>
<circle cx="1578.8" cy="285.8" r="1.500" fill="#dcdcdc" stroke="#1a1a1a" stroke-width="0.9"/>
<circle cx="1571.100" cy="278.200" r="1.600" fill="#1a1a1a"/>
<path d="M1574.600 298.700L1580.400 309.200L1571.200 317.600L1561.200 305.400Z" fill="none" stroke="#111" stroke-width="1.900" stroke-dasharray="1.700 1.700"/>
<path d="M1566.500 329.200c3-1.200 6 0.500 9 4c3 3.500 5.500 6 4.500 9.500c-1 3-5 4-8.500 3.500c-4-0.600-7-3.500-8-7.500c-1-4 0.500-8 3-9.500z" fill="none" stroke="#111" stroke-width="1.900" stroke-dasharray="1.700 1.800"/>
<path d="M1563.500 359.300h15v17h-15zM1563.500 371.600h15M1563.500 373.900h15" fill="none" stroke="#2a2a2a" stroke-width="0.9"/>
<circle cx="1571" cy="368" r="1.500" fill="#999" stroke="#2a2a2a" stroke-width="0.7"/>
<circle cx="1563.5" cy="359.3" r="1.350" fill="#fff" stroke="#2a2a2a" stroke-width="0.8"/>
<circle cx="1578.5" cy="359.3" r="1.350" fill="#fff" stroke="#2a2a2a" stroke-width="0.8"/>
<circle cx="1563.5" cy="376.3" r="1.350" fill="#fff" stroke="#2a2a2a" stroke-width="0.8"/>
<circle cx="1578.5" cy="376.3" r="1.350" fill="#fff" stroke="#2a2a2a" stroke-width="0.8"/>
<path d="M1563.500 389.300h15v17h-15z" fill="none" stroke="#2a2a2a" stroke-width="0.9"/>
<path d="M1564.500 391.200l13.800 8l-2.200 6l-13.600-7.800z" fill="none" stroke="#2a2a2a" stroke-width="1" stroke-dasharray="1.8 1.2"/>
<circle cx="1571" cy="398" r="1.400" fill="#2a2a2a"/>
<circle cx="1563.5" cy="389.3" r="1.250" fill="#fff" stroke="#2a2a2a" stroke-width="0.8"/>
<circle cx="1578.5" cy="389.3" r="1.250" fill="#fff" stroke="#2a2a2a" stroke-width="0.8"/>
<circle cx="1563.5" cy="406.3" r="1.250" fill="#fff" stroke="#2a2a2a" stroke-width="0.8"/>
<circle cx="1578.5" cy="406.3" r="1.250" fill="#fff" stroke="#2a2a2a" stroke-width="0.8"/>
<circle cx="1562.2" cy="398.0" r="1.250" fill="#fff" stroke="#2a2a2a" stroke-width="0.8"/>
<circle cx="1579.8" cy="398.0" r="1.250" fill="#fff" stroke="#2a2a2a" stroke-width="0.8"/>
<circle cx="1576.0" cy="404.0" r="1.250" fill="#fff" stroke="#2a2a2a" stroke-width="0.8"/>
<path d="M1568.300 420.500l9.800 8l-4.200 6.600l-10-8.200z" fill="none" stroke="#2a2a2a" stroke-width="0.9"/>
<path d="M1563 435.500l16.500-14.500" fill="none" stroke="#2a2a2a" stroke-width="1.200" stroke-dasharray="1.600 1.800"/>
<circle cx="1571" cy="427.800" r="1.400" fill="#2a2a2a"/>
<circle cx="1568.3" cy="420.5" r="1.200" fill="#fff" stroke="#2a2a2a" stroke-width="0.8"/>
<circle cx="1578.1" cy="428.5" r="1.200" fill="#fff" stroke="#2a2a2a" stroke-width="0.8"/>
<circle cx="1573.9" cy="435.1" r="1.200" fill="#fff" stroke="#2a2a2a" stroke-width="0.8"/>
<circle cx="1563.9" cy="426.9" r="1.200" fill="#fff" stroke="#2a2a2a" stroke-width="0.8"/>
<circle cx="1565.500" cy="459.400" r="5.300" fill="#fff" stroke="#444" stroke-width="0.8"/>
<path d="M1560.200 459.400h10.600M1565.500 454.100v10.600M1561 456.600h9M1561 462.200h9M1563 454.700c-1.500 3-1.500 6.500 0 9.500M1568 454.700c1.500 3 1.500 6.500 0 9.500" fill="none" stroke="#444" stroke-width="0.600"/>
<path d="M1571 464.800l9.800 3.800l-3.600 1.600l3.600 3.900l-1.600 1.500l-3.700-3.900l-1.500 3.500z" fill="#111"/>
<path d="M1562.400 485.800v17.400h17.200" fill="none" stroke="#2a2a2a" stroke-width="1.300"/>
<path d="M1564.200 501.600v-5.600l3.800-2.600l2.300 2l3.200-4.600l2 2.400l3.300-4.200v12.600z" fill="#2a2a2a"/>
<g transform="translate(1571 524.600) rotate(-33)"><rect x="-10.300" y="-3.500" width="20.600" height="7" fill="#fff" stroke="#2a2a2a" stroke-width="1.300"/><path d="M-6.500 3.500v-3M-3.200 3.500v-2.200M0 3.500v-3M3.200 3.500v-2.200M6.500 3.500v-3" stroke="#2a2a2a" stroke-width="0.900"/></g>
<rect x="1556.500" y="548.500" width="29" height="28" rx="3" fill="#dcdcdc" stroke="#b4b4b4"/>
<rect x="1562.200" y="557.300" width="17.400" height="9" fill="url(#cg)" stroke="#222" stroke-width="1"/>
<path d="M22.500 513.500h10.500l2.500 2.500v9.500h-13z" fill="#f4f4f4" stroke="#c2c2c2" stroke-width="1"/><path d="M25.500 513.500v4h6.500v-4M29.700 514.500v2" fill="none" stroke="#c2c2c2" stroke-width="1"/>
<path d="M57.400 513v11l2.700-2.400l2.300 4.800l2-1l-2.300-4.700l3.700-0.300z" fill="#111"/>
<circle cx="84.600" cy="518" r="3.900" fill="none" stroke="#1a1a1a" stroke-width="1.500"/><path d="M87.500 521l4.300 4.200" stroke="#1a1a1a" stroke-width="2" stroke-linecap="round"/>
<path d="M104.400 519.700l6.600-6.200l6.600 6.200M106.200 518.700v6.600h9.600v-6.600M109.600 525.300v-4h2.800v4" fill="none" stroke="#1a1a1a" stroke-width="1.400" stroke-linejoin="miter"/>
<path d="M146.0 511.200L150.2 521.600L143.0 526.400L135.0 517.800Z" fill="#e0a0a0" stroke="#333" stroke-width="1" stroke-dasharray="1.200 1.200"/><path d="M140.300 518.800h5" stroke="#a05050" stroke-width="1.500"/>
<path d="M171.1 511.200L175.3 521.600L168.1 526.400L160.1 517.800Z" fill="#a0dca0" stroke="#333" stroke-width="1" stroke-dasharray="1.200 1.200"/><path d="M165 518.800h5.400M167.700 516.100v5.400" stroke="#306030" stroke-width="1.400"/>
<path d="M196.1 511.200L200.3 521.600L193.1 526.400L185.1 517.800Z" fill="#a0bce8" stroke="#333" stroke-width="1" stroke-dasharray="1.200 1.200"/><circle cx="192.700" cy="518.800" r="1.900" fill="#303870"/><circle cx="192.700" cy="518.800" r="3" fill="none" stroke="#303870" stroke-width="0.500"/>
<path d="M221.500 511.300L224.800 522.300L217.500 524.500L210.500 516Z" fill="none" stroke="#1a1a1a" stroke-width="1.200" stroke-dasharray="1.200 1.400"/>
<path d="M221.40 524.40l3.70 3.60l3.70 -3.60" fill="none" stroke="#1a1a1a" stroke-width="1.50"/>
<circle cx="243.200" cy="518.800" r="5" fill="#b8b8b8" stroke="#333" stroke-width="1" stroke-dasharray="1.200 1.200"/>
<path d="M246.40 524.40l3.70 3.60l3.70 -3.60" fill="none" stroke="#1a1a1a" stroke-width="1.50"/>
<rect x="262.800" y="518" width="10.600" height="7.600" fill="#fff" stroke="#1a1a1a" stroke-width="1.400"/><path d="M265.300 518v-2.300a2.800 2.800 0 0 1 5.600 0v2.300" fill="none" stroke="#1a1a1a" stroke-width="1.400"/><rect x="267.300" y="520.300" width="1.600" height="3" fill="#1a1a1a"/>
<circle cx="294.600" cy="514" r="1.700" fill="#fff" stroke="#333" stroke-width="0.8"/>
<path d="M295.800 516.600h12l-5.200 4.900v2.600l-2.300 2.400v-5zM303.600 519.600l2.300 2l-2.300 2z" fill="#2a2a2a" fill-rule="evenodd"/>
<path d="M327.600 515.600a6 6 0 1 1 2 8.800" fill="none" stroke="#c0c0c0" stroke-width="1.300"/><path d="M325.300 512.800l5.200 0.800l-4 4z" fill="#b4b4b4"/>
<path d="M361.400 515.600a6 6 0 1 0 -2 8.800" fill="none" stroke="#c0c0c0" stroke-width="1.300"/><path d="M363.700 512.800l-5.200 0.800l4 4z" fill="#b4b4b4"/>
<circle cx="383.300" cy="518.800" r="0.800" fill="#1f1f1f"/><circle cx="386.600" cy="518.800" r="1.600" fill="#1f1f1f"/><circle cx="392.600" cy="518.800" r="3.300" fill="#1f1f1f"/>
<path d="M392.40 523.30l3.70 3.60l3.70 -3.60" fill="none" stroke="#1a1a1a" stroke-width="1.50"/>
<rect x="407.500" y="516" width="13.200" height="6" fill="url(#cg)" stroke="#222" stroke-width="1"/>
<path d="M417.20 523.30l3.70 3.60l3.70 -3.60" fill="none" stroke="#1a1a1a" stroke-width="1.50"/>
<path d="M500 512h3.600l1.600 1.600v5.800h-5.200z" fill="#fff" stroke="#444" stroke-width="0.8"/><path d="M502.500 514v3.500" stroke="#444" stroke-width="0.8"/>
<path d="M506.3 517.6l8.60 3.20l-3.20 1.40l3.00 3.30l-1.40 1.30l-3.10 -3.30l-1.30 3.00z" fill="#111"/>
<circle cx="527.400" cy="514.800" r="3.300" fill="#bbb" stroke="#555" stroke-width="0.7"/><path d="M524.100 514.800h6.600M527.400 511.500v6.600M525.700 512v5.600M529.100 512v5.600" stroke="#666" stroke-width="0.500"/>
<path d="M531.3 517.6l8.60 3.20l-3.20 1.40l3.00 3.30l-1.40 1.30l-3.10 -3.30l-1.30 3.00z" fill="#111"/>
<rect x="550" y="512.200" width="5.600" height="5.600" fill="none" stroke="#333" stroke-width="0.8" stroke-dasharray="1 1"/><circle cx="552.800" cy="515" r="1.500" fill="#222"/>
<circle cx="559.800" cy="521.800" r="4" fill="#fff" stroke="#222" stroke-width="1"/><path d="M557.600 524l4.200-4.600l-1 4z" fill="#222"/>
<g transform="translate(582.200 519) rotate(-33)"><rect x="-7.800" y="-2.800" width="15.600" height="5.600" fill="#fff" stroke="#2a2a2a" stroke-width="1.100"/><path d="M-5 2.800v-2M-2.500 2.800v-1.500M0 2.800v-2M2.500 2.800v-1.500M5 2.800v-2" stroke="#2a2a2a" stroke-width="0.700"/></g>
<path d="M609 524.400v-7.400h6.400" fill="none" stroke="#1a1a1a" stroke-width="2.300"/><path d="M614.600 513.300l5.600 3.700l-5.600 3.700z" fill="#1a1a1a"/>
<path d="M643.600 524.400v-7.400h-6.400" fill="none" stroke="#1a1a1a" stroke-width="2.300"/><path d="M638 513.300l-5.600 3.700l5.600 3.700z" fill="#1a1a1a"/>
<g><path d="M665.40 511.80h4.75v3.46l-2.38 3.31l-2.38 -3.31Z" fill="#fff" stroke="#2a2a2a" stroke-width="0.9" stroke-linejoin="round"/><rect x="665.40" y="511.80" width="4.75" height="3.31" fill="#2a2a2a"/><path d="M667.11 512.40v2.59M668.44 512.40v2.59" stroke="#999" stroke-width="0.7"/><path d="M666.84 517.27l0.94 1.30l0.94 -1.30Z" fill="#2a2a2a"/></g>
<path d="M663.500 520.800c2-1 3.500-2 5.500-2.800c2-0.800 3.500-0.800 5-1.200l4.500 4.500c-1.800 0.800-3.500 0.800-5.500 1.800c-2 1-2.500 1.800-4 2.500z" fill="#fff" stroke="#2a2a2a" stroke-width="0.9" stroke-linejoin="round"/>
<path d="M666 519.700l4 4.600M668.800 518.300l4.400 4.700M671.800 517.300l4.300 4.600M665.500 522.500l9-5M667.800 524.300l9-4.600" fill="none" stroke="#2a2a2a" stroke-width="0.600"/>
<path d="M690.500 513.500h11.400v11h-11.400zM696.200 513.500v11" fill="#f0f0f0" stroke="#d0d0d0" stroke-width="1"/>
<path d="M720 515.200h3.600l1.400-2.200h5.600l1.400 2.200h4v8.800h-16z" fill="#2a2a2a"/><circle cx="728" cy="519.400" r="2.700" fill="none" stroke="#fff" stroke-width="1"/>
<path d="M1499.900 511.900h7l3.600 3.600v10.600h-10.600z" fill="#fff" stroke="#222" stroke-width="1.100" stroke-linejoin="round"/><path d="M1505.200 518.500v5.200M1505.200 515.800v1.400" stroke="#222" stroke-width="1.500"/>
<path d="M1525.30 517.40l5.10 5.00l5.10 -5.00" fill="none" stroke="#1a1a1a" stroke-width="2.00"/>
</svg>
<!-- slice polygon + red annotations -->
<svg style="left:0;top:0" width="1590" height="1040" viewBox="0 0 1590 1040">
<g fill="none" stroke-linejoin="round" stroke-linecap="round">
<path id="slpoly" d="M501.600 123.200L519.800 124.800L536.800 126.300C534 150 531 180 529.400 194C526 230 523 255 521 277.400C519 292 517.500 300 517 310C516 330 515 350 514 368C511 395 506 418 502 435.400L484.200 433.500L466 431.600C469 415 472 400 473.400 387C477 360 480 335 481 317.600C480.500 310 479.500 308 479.200 305C476.500 297 475 292 475.300 286.700C475.500 281 478 277 479.600 274.300C481 268 485 262 486 256C487.500 250 488.500 249 489.600 240C494 200 498 160 501.600 123.200Z" stroke="#222" stroke-width="3.400" opacity="0.75"/>
<path d="M501.600 123.200L519.800 124.800L536.800 126.300C534 150 531 180 529.400 194C526 230 523 255 521 277.400C519 292 517.500 300 517 310C516 330 515 350 514 368C511 395 506 418 502 435.400L484.200 433.500L466 431.600C469 415 472 400 473.400 387C477 360 480 335 481 317.600C480.500 310 479.500 308 479.200 305C476.500 297 475 292 475.300 286.700C475.500 281 478 277 479.600 274.300C481 268 485 262 486 256C487.500 250 488.500 249 489.600 240C494 200 498 160 501.600 123.200Z" stroke="#fff" stroke-width="1.800"/>
<path d="M494 275L511 276.400M505.500 270L512.200 276.500L504.600 282.600" stroke="#222" stroke-width="4.200" opacity="0.7"/>
<path d="M494 275L511 276.400M505.500 270L512.200 276.500L504.600 282.600" stroke="#fff" stroke-width="2.600"/>
</g>
<g fill="#fff" stroke="#333" stroke-width="0.900">
<circle cx="501.600" cy="123.200" r="3.400"/><circle cx="519.800" cy="124.800" r="3.400"/><circle cx="536.800" cy="126.300" r="3.400"/>
<circle cx="479.600" cy="274.300" r="3.400"/><circle cx="521" cy="277.400" r="3.400"/>
<circle cx="466" cy="431.600" r="3.400"/><circle cx="484.200" cy="433.500" r="3.400"/><circle cx="502" cy="435.400" r="3.400"/>
</g>
<!-- red arrows -->
<g fill="#fb061a" stroke="none">
<path d="M335 84L342.400 107.500L336.400 104.300L335.600 157.500L330.400 157.500L333 104.300L326.600 107.500Z"/>
<path d="M304 556L311.600 580L305.600 577L306 632L301.600 632L302.400 577L296.200 580Z"/>
<path d="M1548 277L1520.500 283L1524 276.600L1391.600 255.800L1392.400 252.800L1526 270.200L1524 263.800Z"/>
</g>
</svg>
<div class="redbox" style="left:137px;top:38px;width:413px;height:42px"></div>
<div class="redbox" style="left:280px;top:501px;width:42px;height:44px"></div>
<div class="redbox" style="left:1550px;top:260px;width:50px;height:37px"></div>

</body></html>
